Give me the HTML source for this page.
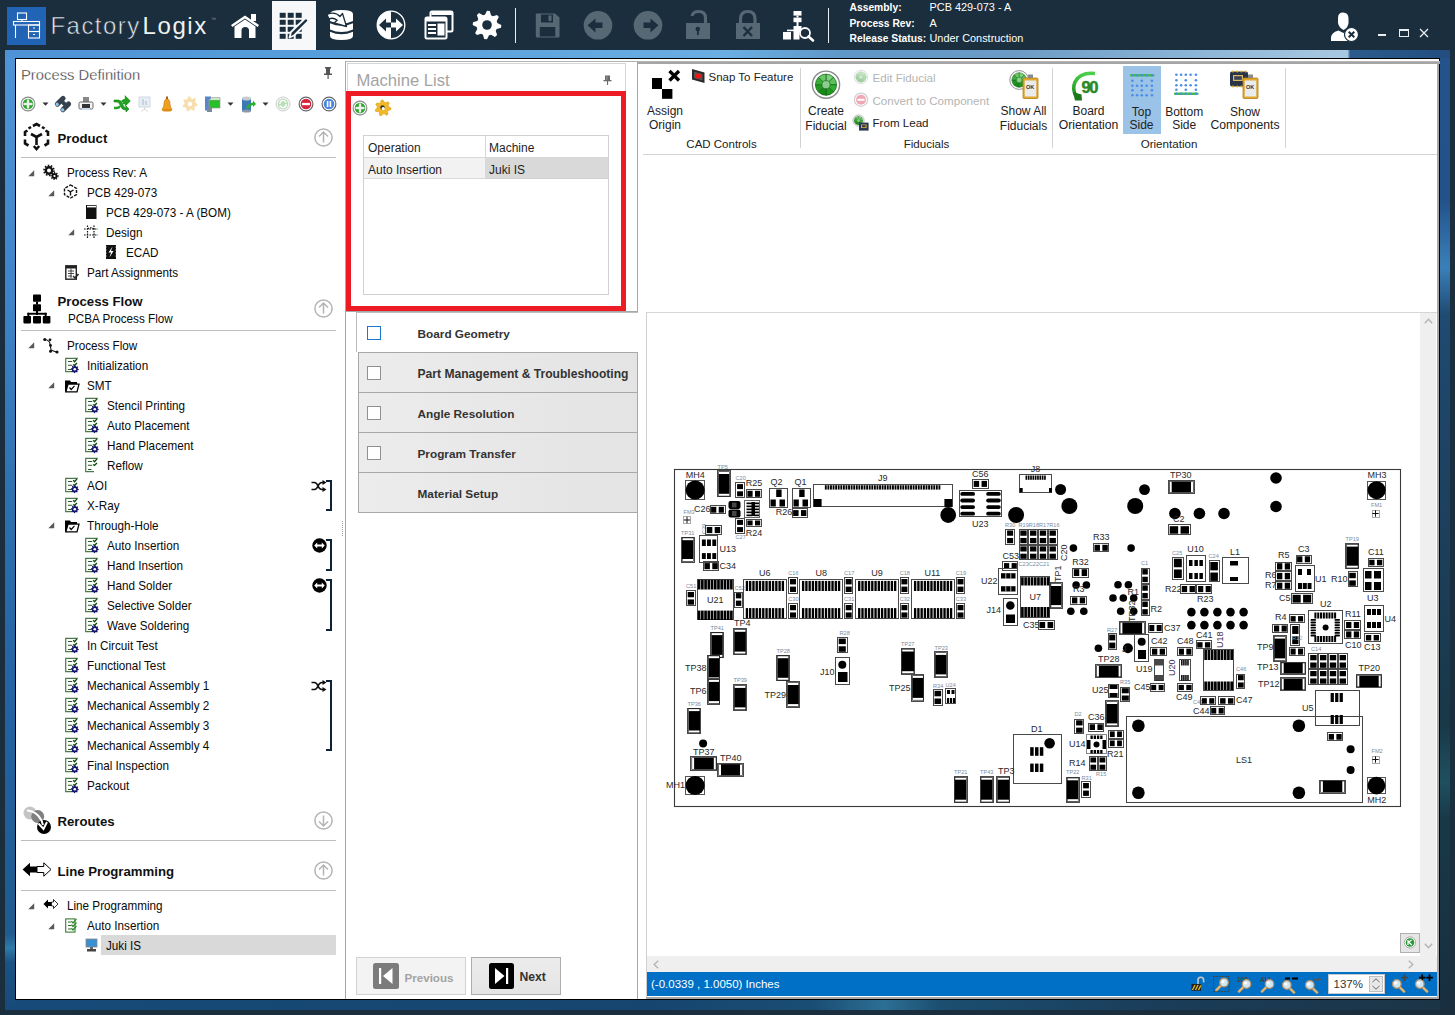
<!DOCTYPE html>
<html><head><meta charset="utf-8">
<style>
*{margin:0;padding:0;box-sizing:border-box}
html,body{width:1455px;height:1015px;overflow:hidden;background:#1b2e3d;font-family:"Liberation Sans",sans-serif;font-size:12px;color:#1e1e1e}
.a{position:absolute}
.t{position:absolute;white-space:nowrap;line-height:1}
svg{position:absolute;overflow:visible}
</style></head>
<body>
<div class="a" style="left:0px;top:0px;width:1455px;height:1015px;background:#1b2e3d"></div>
<div class="a" style="left:5px;top:50px;width:1445px;height:8px;background:linear-gradient(90deg,#4d92d6 0%,#58a0dc 25%,#6aaee2 50%,#5f97c8 58%,#6c9cc6 70%,#8ab4d6 82%,#a9c9e1 92.9%,#2b5b8e 93.1%,#224d7e 100%)"></div>
<div class="a" style="left:5px;top:58px;width:10px;height:952px;background:linear-gradient(180deg,#4f94d6 0%,#3f84c8 25%,#2c6dab 50%,#2262a0 70%,#1f5b8e 92%,#2e7aa8 93.5%,#1b5283 95%,#174a78 100%)"></div>
<div class="a" style="left:1440px;top:58px;width:10px;height:952px;background:linear-gradient(180deg,#24528a 0%,#23528a 15%,#3a80b8 22%,#1f4a72 27%,#1c3f5c 50%,#183848 70%,#1f5060 76%,#183848 80%,#172f40 100%)"></div>
<div class="a" style="left:15px;top:1000px;width:1425px;height:10px;background:linear-gradient(90deg,#174a78 0%,#16466f 45%,#1a4d74 56%,#2c6f94 61%,#1b4e70 65%,#1a3d5a 80%,#1c3446 100%)"></div>
<div class="a" style="left:0px;top:1010px;width:1455px;height:5px;background:#1b2e3d"></div>
<div class="a" style="left:15px;top:58px;width:1425px;height:942px;background:#fff;border:1px solid #000"></div>
<div class="a" style="left:7px;top:7px;width:39px;height:38px;background:#2163b4"></div>
<svg style="left:7px;top:7px" width="39" height="38" viewBox="0 0 39 38"><g fill="none" stroke="#fff" stroke-width="1.1">
<rect x="10.5" y="6" width="9" height="6.5"/>
<line x1="15" y1="12.5" x2="15" y2="14.5"/>
<rect x="6.5" y="14.5" width="26" height="3.5"/>
<line x1="8.5" y1="18" x2="8.5" y2="31"/>
<rect x="21.5" y="18" width="11" height="6.5"/>
<rect x="21.5" y="24.5" width="11" height="6.5"/>
<line x1="26" y1="21" x2="28" y2="21"/><line x1="26" y1="27.5" x2="28" y2="27.5"/>
</g></svg>
<div class="t" style="left:50.5px;top:14.48px;font-size:24px;font-weight:400;color:#e4eaee;letter-spacing:1.45px;-webkit-text-stroke:0.6px #1b2e3d">Factory</div>
<div class="t" style="left:142.5px;top:14.48px;font-size:24px;font-weight:400;color:#eef2f4;letter-spacing:1.6px">Logix</div>
<div class="t" style="left:211px;top:16.77px;font-size:5px;font-weight:400;color:#8898a8;">&#8482;</div>
<svg style="left:228px;top:12px" width="34" height="28" viewBox="0 0 34 28"><g fill="#fff">
<path d="M3 13 L17 3.5 L31 13 L29.6 15 L17 6.6 L4.4 15 Z"/>
<rect x="23" y="2" width="5" height="7"/>
<path d="M6.5 14.5 L17 7.6 L27.5 14.5 L27.5 26 L21 26 L21 18.5 Q21 15 17.3 15 Q13.5 15 13.5 18.5 L13.5 26 L6.5 26 Z"/>
</g></svg>
<div class="a" style="left:272px;top:1px;width:44px;height:49px;background:#f7f8fa"></div>
<svg style="left:272px;top:1px" width="44" height="49" viewBox="0 0 44 49"><g fill="#1b2e3d">
<rect x="7.7" y="11.8" width="6" height="5"/><rect x="15.7" y="11.8" width="6" height="5"/><rect x="23.7" y="11.8" width="6" height="5"/>
<rect x="7.7" y="18.8" width="6" height="5"/><rect x="15.7" y="18.8" width="6" height="5"/><rect x="23.7" y="18.8" width="6" height="5"/>
<rect x="7.7" y="25.8" width="6" height="5"/><rect x="15.7" y="25.8" width="6" height="5"/><rect x="23.7" y="25.8" width="6" height="5"/>
<rect x="7.7" y="32.8" width="6" height="5"/><rect x="15.7" y="32.8" width="6" height="5"/><rect x="23.7" y="32.8" width="6" height="5"/>
</g>
<path d="M17.5 36.5 L19 31 L32.5 18 Q34 16.6 35.5 18 Q36.9 19.5 35.5 21 L22 34.5 Z" fill="#1b2e3d" stroke="#f7f8fa" stroke-width="1.8" stroke-linejoin="round"/></svg>
<svg style="left:327px;top:9px" width="30" height="32" viewBox="0 0 30 32"><g fill="#fff">
<path d="M3 5 Q3 1 14.5 1 Q26 1 26 5 L26 12 Q14.5 17 3 12 Z"/>
<path d="M3 14.2 Q14.5 19.2 26 14.2 L26 20.5 Q14.5 25.5 3 20.5 Z"/>
<path d="M3 22.7 Q14.5 27.7 26 22.7 L26 27 Q26 31 14.5 31 Q3 31 3 27 Z"/>
</g>
<path d="M0 5.5 Q8 2 13 7.5 L15.5 4.5 L19.5 17.5 L7 14 L10.2 11.3 Q6 8 2 10 Z" fill="#fff" stroke="#1b2e3d" stroke-width="1.3" stroke-linejoin="round"/></svg>
<svg style="left:375px;top:9px" width="32" height="32" viewBox="0 0 32 32"><circle cx="16" cy="16" r="13.8" fill="none" stroke="#fff" stroke-width="1.3"/>
<path d="M16 2.2 A13.8 13.8 0 0 0 16 29.8 Z" fill="#fff"/>
<path d="M4 16 L11 9.5 L11 13.5 L16 13.5 L16 18.5 L11 18.5 L11 22.5 Z" fill="#1b2e3d"/>
<path d="M28 16 L21 9.5 L21 13.5 L16 13.5 L16 18.5 L21 18.5 L21 22.5 Z" fill="#fff"/></svg>
<svg style="left:423px;top:9px" width="32" height="32" viewBox="0 0 32 32"><g fill="none" stroke="#fff" stroke-width="2">
<rect x="7.5" y="2.5" width="22" height="20" rx="1.5"/>
</g>
<rect x="2" y="8" width="22" height="22" rx="1.5" fill="#1b2e3d"/>
<rect x="2.5" y="8.5" width="21" height="21" rx="1.5" fill="none" stroke="#fff" stroke-width="2"/>
<rect x="2.5" y="8.5" width="21" height="4" fill="#fff"/>
<rect x="8.5" y="3" width="21" height="3" fill="#fff"/>
<g fill="#fff"><rect x="5" y="15" width="8" height="2"/><rect x="5" y="19" width="8" height="2"/><rect x="5" y="23" width="8" height="2"/><rect x="14.5" y="14.5" width="7" height="12"/></g></svg>
<svg style="left:471px;top:9px" width="32" height="32" viewBox="0 0 32 32"><path d="M16.00 1.70 L18.79 1.97 L20.02 6.30 L21.83 7.27 L26.11 5.89 L27.89 8.06 L25.70 11.98 L26.30 13.95 L30.30 16.00 L30.03 18.79 L25.70 20.02 L24.73 21.83 L26.11 26.11 L23.94 27.89 L20.02 25.70 L18.05 26.30 L16.00 30.30 L13.21 30.03 L11.98 25.70 L10.17 24.73 L5.89 26.11 L4.11 23.94 L6.30 20.02 L5.70 18.05 L1.70 16.00 L1.97 13.21 L6.30 11.98 L7.27 10.17 L5.89 5.89 L8.06 4.11 L11.98 6.30 L13.95 5.70Z" fill="#fff"/><circle cx="16" cy="16" r="4.8" fill="#1b2e3d"/></svg>
<div class="a" style="left:515px;top:8px;width:1px;height:35px;background:#e8eef2"></div>
<div class="a" style="left:828px;top:8px;width:1px;height:35px;background:#e8eef2"></div>
<svg style="left:535px;top:13px" width="26" height="25" viewBox="0 0 26 25"><path d="M0.8 1.5 Q0.8 0.5 1.8 0.5 L20 0.5 L24.5 4.5 L24.5 23.5 Q24.5 24.5 23.5 24.5 L1.8 24.5 Q0.8 24.5 0.8 23.5 Z" fill="#566874"/>
<rect x="6" y="1.5" width="12" height="8" fill="#1b2e3d"/><rect x="13.5" y="2.5" width="3" height="5.5" fill="#566874"/>
<rect x="4.8" y="14" width="15.5" height="9.5" fill="#1b2e3d"/></svg>
<svg style="left:583px;top:11px" width="30" height="30" viewBox="0 0 30 30"><circle cx="15" cy="14.3" r="14.3" fill="#566874"/><path d="M4.5 14.3 L12.5 7.5 L12.5 11.5 L19.5 11.5 L19.5 17 L12.5 17 L12.5 21.5 Z" fill="#1b2e3d"/></svg>
<svg style="left:633px;top:11px" width="30" height="30" viewBox="0 0 30 30"><circle cx="15" cy="14.3" r="14.3" fill="#566874"/><path d="M25.5 14.3 L17.5 7.5 L17.5 11.5 L10.5 11.5 L10.5 17 L17.5 17 L17.5 21.5 Z" fill="#1b2e3d"/></svg>
<svg style="left:685px;top:10px" width="28" height="30" viewBox="0 0 28 30"><path d="M7 6 Q8 1.5 13.5 1.5 Q20.5 1.5 20.5 8 L20.5 13" fill="none" stroke="#566874" stroke-width="3.2"/>
<rect x="1" y="13" width="24" height="16" fill="#566874"/>
<circle cx="12.8" cy="19" r="2.3" fill="#1b2e3d"/><rect x="12" y="19" width="1.8" height="6" fill="#1b2e3d"/></svg>
<svg style="left:735px;top:10px" width="28" height="30" viewBox="0 0 28 30"><path d="M5.5 13 L5.5 9 Q5.5 1.5 12.8 1.5 Q20 1.5 20 9 L20 13" fill="none" stroke="#566874" stroke-width="3.2"/>
<rect x="1" y="13" width="24" height="16" fill="#566874"/>
<path d="M8.5 17 L17 26 M17 17 L8.5 26" stroke="#1b2e3d" stroke-width="2.4"/></svg>
<svg style="left:782px;top:10px" width="34" height="32" viewBox="0 0 34 32"><g fill="#fff">
<rect x="11.5" y="1" width="8" height="4.6"/><rect x="14.5" y="5.6" width="2" height="2"/><rect x="11.5" y="7.6" width="8" height="4.6"/>
<rect x="14.5" y="12" width="2" height="4"/><rect x="11.5" y="16" width="8" height="6"/>
<rect x="1" y="22" width="8" height="7.5"/><rect x="11.5" y="22" width="6" height="7.5"/>
<rect x="5" y="19.6" width="10" height="1.6"/>
</g>
<circle cx="23" cy="23" r="5" fill="#1b2e3d" stroke="#fff" stroke-width="1.8"/>
<path d="M26.5 26.5 L31 30.5" stroke="#fff" stroke-width="2.6" stroke-linecap="round"/></svg>
<div class="t" style="left:849.5px;top:2.78px;font-size:10.3px;font-weight:700;color:#fff;">Assembly:</div>
<div class="t" style="left:849.5px;top:18.58px;font-size:10.3px;font-weight:700;color:#fff;">Process Rev:</div>
<div class="t" style="left:849.5px;top:33.78px;font-size:10.3px;font-weight:700;color:#fff;">Release Status:</div>
<div class="t" style="left:929.5px;top:2.27px;font-size:10.9px;font-weight:400;color:#fff;">PCB 429-073 - A</div>
<div class="t" style="left:929.5px;top:18.07px;font-size:10.9px;font-weight:400;color:#fff;">A</div>
<div class="t" style="left:929.5px;top:33.27px;font-size:10.9px;font-weight:400;color:#fff;">Under Construction</div>
<svg style="left:1330px;top:12px" width="29" height="30" viewBox="0 0 29 30"><path d="M8 6 Q8 0.5 13 0.5 Q18.5 0.5 18.5 6.5 L18.5 11 Q18 16 13.5 18 Q9 16 8 11 Z" fill="#fff"/>
<path d="M1 29 L1 25 Q2 20 8.5 18.5 L13.5 21 L18 18.5 Q21 19 22 20 L22 29 Z" fill="#fff"/>
<circle cx="21.5" cy="22.5" r="7" fill="#fff" stroke="#1b2e3d" stroke-width="1.2"/>
<path d="M18.7 19.7 L24.3 25.3 M24.3 19.7 L18.7 25.3" stroke="#1b2e3d" stroke-width="2"/></svg>
<div class="a" style="left:1378px;top:34px;width:8px;height:2px;background:#e8eef2"></div>
<div class="a" style="left:1398.5px;top:29px;width:10px;height:7.5px;border:1px solid #e8eef2;border-top-width:2px"></div>
<svg style="left:1419px;top:28px" width="10" height="10" viewBox="0 0 10 10"><path d="M1 1 L9 9 M9 1 L1 9" stroke="#e8eef2" stroke-width="1.3"/></svg>
<div class="t" style="left:21px;top:67.67px;font-size:14.8px;font-weight:400;color:#2a2a2a;-webkit-text-stroke:0.35px #fff;">Process Definition</div>
<svg style="left:322px;top:66px" width="12" height="14" viewBox="0 0 12 14"><rect x="3" y="1" width="6" height="1.5" fill="#555"/><rect x="4" y="2" width="4" height="6" fill="#555"/><rect x="2" y="7.5" width="8" height="1.5" fill="#555"/><rect x="5.5" y="9" width="1.2" height="4" fill="#555"/></svg>
<svg style="left:20px;top:96px" width="16" height="16" viewBox="0 0 16 16"><circle cx="8" cy="8" r="6.9" fill="#fff" stroke="#888" stroke-width="1.1"/>
<circle cx="8" cy="8" r="5.3" fill="#2aa52a"/><rect x="3.5" y="6.8" width="9" height="2.4" fill="#eee"/><rect x="6.8" y="3.5" width="2.4" height="9" fill="#eee"/></svg>
<svg style="left:42px;top:102px" width="7" height="4" viewBox="0 0 7 4"><path d="M0.5 0.5 L6.5 0.5 L3.5 3.8Z" fill="#333"/></svg>
<svg style="left:55px;top:96px" width="16" height="16" viewBox="0 0 16 16"><g transform="rotate(45 8 8)"><rect x="1.6" y="1.5" width="5" height="13" rx="2.4" fill="#36434e"/><rect x="9.4" y="1.5" width="5" height="13" rx="2.4" fill="#36434e"/>
<rect x="6" y="5" width="4" height="4" fill="#36434e"/><ellipse cx="4.1" cy="12.3" rx="1.7" ry="1.6" fill="#8cc4ec"/><ellipse cx="11.9" cy="12.3" rx="1.7" ry="1.6" fill="#8cc4ec"/></g></svg>
<svg style="left:78px;top:96px" width="16" height="16" viewBox="0 0 16 16"><rect x="5" y="1" width="6" height="5" fill="#888"/><rect x="1" y="6" width="14" height="7" rx="1.5" fill="#f4f4f4" stroke="#555" stroke-width="0.9"/>
<rect x="4" y="8" width="8" height="4" fill="#333"/><rect x="4" y="12" width="8" height="2" fill="#cde"/></svg>
<svg style="left:100px;top:102px" width="7" height="4" viewBox="0 0 7 4"><path d="M0.5 0.5 L6.5 0.5 L3.5 3.8Z" fill="#333"/></svg>
<svg style="left:113px;top:96px" width="16" height="16" viewBox="0 0 16 16"><path d="M1 4 L5 4 Q8 4 9 7 L10 9 Q11 12 13 12 L13 10 L16 13 L13 16 L13 14 Q9 14 8 11 L7 9 Q6 6 4 6 L1 6Z" fill="#22a022" stroke="#148014" stroke-width="0.6"/>
<path d="M1 12 L4 12 Q6 12 7 10 M9 6 Q10 4 13 4 L13 2 L16 5 L13 8 L13 6 Q11 6 10 8" fill="none" stroke="#22a022" stroke-width="2.4"/></svg>
<svg style="left:138px;top:96px" width="13" height="16" viewBox="0 0 13 16"><rect x="1" y="1" width="11" height="10" fill="#e8eef5" stroke="#c8d0da" stroke-width="0.8"/><rect x="4" y="3" width="2" height="6" fill="#c8d3e0"/><rect x="7" y="5" width="2" height="4" fill="#c8d3e0"/><path d="M6.5 11 L6.5 14 M6.5 13 L3 15.5 M6.5 13 L10 15.5" stroke="#d0d0d0" stroke-width="0.8"/></svg>
<svg style="left:161px;top:96px" width="12" height="16" viewBox="0 0 12 16"><rect x="5" y="0.5" width="2" height="4" fill="#a06010"/><path d="M6 3 Q3 3 3 8 L2.5 11 Q1 12.5 1 13.5 L11 13.5 Q11 12.5 9.5 11 L9 8 Q9 3 6 3Z" fill="#f0a020" stroke="#c07010" stroke-width="0.6"/><ellipse cx="6" cy="14.2" rx="5" ry="1.3" fill="#e08a10"/></svg>
<svg style="left:182px;top:96px" width="16" height="16" viewBox="0 0 16 16"><path d="M15.60 8.00 L15.41 9.69 L13.05 10.43 L12.38 11.49 L12.74 13.94 L11.30 14.85 L9.25 13.46 L8.00 13.60 L6.31 15.41 L4.70 14.85 L4.51 12.38 L3.62 11.49 L1.15 11.30 L0.59 9.69 L2.40 8.00 L2.54 6.75 L1.15 4.70 L2.06 3.26 L4.51 3.62 L5.57 2.95 L6.31 0.59 L8.00 0.40 L9.25 2.54 L10.43 2.95 L12.74 2.06 L13.94 3.26 L13.05 5.57 L13.46 6.75Z" fill="#f6dfad"/><circle cx="8" cy="8" r="2.2" fill="#fff"/></svg>
<svg style="left:204px;top:96px" width="17" height="17" viewBox="0 0 17 17"><rect x="1" y="0.5" width="6" height="14" fill="#5a86c8"/><rect x="5" y="4" width="11" height="8" fill="#28c028" stroke="#999" stroke-width="0.7"/><path d="M5 4 L8 1.5 L16 1.5 L16 4" fill="#c8e8c8" stroke="#999" stroke-width="0.6"/><rect x="3" y="11" width="5" height="5" fill="#7a8a9a"/></svg>
<svg style="left:227px;top:102px" width="7" height="4" viewBox="0 0 7 4"><path d="M0.5 0.5 L6.5 0.5 L3.5 3.8Z" fill="#333"/></svg>
<svg style="left:240px;top:96px" width="16" height="17" viewBox="0 0 16 17"><rect x="2" y="2" width="9" height="13" fill="#3a78b8"/><ellipse cx="6.5" cy="2.5" rx="4.5" ry="2" fill="#c8ccd0"/><ellipse cx="6.5" cy="15" rx="4.5" ry="1.5" fill="#8a9aaa"/><path d="M6 12 Q8 7 13 6.5 L13 4.5 L16 8 L13 11 L13 9 Q10 9.5 8 13Z" fill="#28b030"/></svg>
<svg style="left:262px;top:102px" width="7" height="4" viewBox="0 0 7 4"><path d="M0.5 0.5 L6.5 0.5 L3.5 3.8Z" fill="#333"/></svg>
<svg style="left:275px;top:96px" width="16" height="16" viewBox="0 0 16 16"><circle cx="8" cy="8" r="7" fill="#f2f2f2" stroke="#d0d0d0" stroke-width="1"/><circle cx="8" cy="8" r="5.2" fill="#b8dfb8"/><path d="M5 8 A3 3 0 0 1 11 7 M11 8 A3 3 0 0 1 5 9" stroke="#fff" stroke-width="1.3" fill="none"/></svg>
<svg style="left:298px;top:96px" width="16" height="16" viewBox="0 0 16 16"><circle cx="8" cy="8" r="6.9" fill="#fff" stroke="#666" stroke-width="1.2"/><circle cx="8" cy="8" r="5.3" fill="#d8243c"/><rect x="4" y="6.9" width="8" height="2.3" fill="#fff"/></svg>
<svg style="left:321px;top:96px" width="16" height="16" viewBox="0 0 16 16"><circle cx="8" cy="8" r="6.9" fill="#fff" stroke="#666" stroke-width="1.2"/><circle cx="8" cy="8" r="5.3" fill="#4a86e0"/><rect x="5.8" y="5" width="1.6" height="6" fill="#fff"/><rect x="8.6" y="5" width="1.6" height="6" fill="#fff"/></svg>
<svg style="left:23px;top:122px" width="27" height="30" viewBox="0 0 27 30"><g fill="none" stroke="#111" stroke-width="2.6" stroke-linecap="butt">
<path d="M10 4 L13.5 2 L17 4"/><path d="M4.5 8.5 L2 10 L2 14"/><path d="M22.5 8.5 L25 10 L25 14"/>
<path d="M2 17.5 L2 21.5 L5.5 23.5"/><path d="M25 17.5 L25 21.5 L21.5 23.5"/>
<path d="M8 12 L13.5 15 L19 12"/><path d="M13.5 15 L13.5 23"/><path d="M10.8 24 L13.5 27 L16.2 24"/>
<path d="M5.5 6.5 L8 5"/><path d="M19 5 L21.5 6.5"/>
</g></svg>
<div class="t" style="left:57.5px;top:131.53px;font-size:13.2px;font-weight:700;color:#111;">Product</div>
<svg style="left:314px;top:127.5px" width="19" height="19" viewBox="0 0 19 19"><circle cx="9.5" cy="9.5" r="8.6" fill="none" stroke="#b4b4b4" stroke-width="1.5"/><path d="M5 8.5 L9.5 4 L14 8.5 M9.5 4 L9.5 14.5" fill="none" stroke="#b4b4b4" stroke-width="1.5"/></svg>
<div class="a" style="left:21px;top:157px;width:315px;height:1px;background:#bdbdbd"></div>
<svg style="left:28px;top:169.5px" width="7" height="7" viewBox="0 0 7 7"><path d="M6.2 0.3 L6.2 6.2 L0.3 6.2Z" fill="#595959"/></svg>
<svg style="left:43px;top:164px" width="16" height="16" viewBox="0 0 16 16"><circle cx="6" cy="6.5" r="3.2" fill="none" stroke="#111" stroke-width="2.4"/><circle cx="6" cy="6.5" r="5" fill="none" stroke="#111" stroke-width="1.6" stroke-dasharray="1.6 1.5"/>
<circle cx="11.5" cy="12" r="2" fill="none" stroke="#111" stroke-width="1.8"/><circle cx="11.5" cy="12" r="3.4" fill="none" stroke="#111" stroke-width="1.3" stroke-dasharray="1.3 1.2"/></svg>
<div class="t" style="left:66.5px;top:166.67px;font-size:12.2px;font-weight:400;color:#0a0a0a;transform:scaleX(0.96);transform-origin:0 0;">Process Rev: A</div>
<svg style="left:47.5px;top:189.5px" width="7" height="7" viewBox="0 0 7 7"><path d="M6.2 0.3 L6.2 6.2 L0.3 6.2Z" fill="#595959"/></svg>
<svg style="left:63px;top:184px" width="15" height="15" viewBox="0 0 15 15"><g fill="none" stroke="#111" stroke-width="1.4"><path d="M7.5 1 L13.5 4.3 L13.5 10.7 L7.5 14 L1.5 10.7 L1.5 4.3 Z" stroke-dasharray="3 1.3"/><path d="M4.5 6 L7.5 7.8 L10.5 6 M7.5 7.8 L7.5 11.5"/></g></svg>
<div class="t" style="left:86.5px;top:186.67px;font-size:12.2px;font-weight:400;color:#0a0a0a;transform:scaleX(0.96);transform-origin:0 0;">PCB 429-073</div>
<svg style="left:85px;top:204px" width="13" height="16" viewBox="0 0 13 16"><rect x="1" y="1" width="10.5" height="14" fill="#111"/><rect x="2" y="1.8" width="9" height="1.6" fill="#fff"/></svg>
<div class="t" style="left:106.3px;top:206.67px;font-size:12.2px;font-weight:400;color:#0a0a0a;transform:scaleX(0.96);transform-origin:0 0;">PCB 429-073 - A (BOM)</div>
<svg style="left:67.5px;top:229px" width="7" height="7" viewBox="0 0 7 7"><path d="M6.2 0.3 L6.2 6.2 L0.3 6.2Z" fill="#595959"/></svg>
<svg style="left:83px;top:224px" width="16" height="16" viewBox="0 0 16 16"><g stroke="#111" stroke-width="1.2" fill="none" stroke-dasharray="1.6 1.1"><path d="M1 5 L15 5 M1 11 L15 11 M4.5 1.5 L4.5 15 M11 1.5 L11 15"/><path d="M4.5 5 Q7.8 2.5 11 5"/></g></svg>
<div class="t" style="left:106.3px;top:226.67px;font-size:12.2px;font-weight:400;color:#0a0a0a;transform:scaleX(0.96);transform-origin:0 0;">Design</div>
<svg style="left:105px;top:244px" width="12" height="16" viewBox="0 0 12 16"><path d="M1 1 L11 1 L11 15 L1 15Z" fill="#111"/><path d="M0 3 L1.5 3 M0 6 L1.5 6 M0 9 L1.5 9 M0 12 L1.5 12 M10.5 3 L12 3 M10.5 6 L12 6 M10.5 9 L12 9 M10.5 12 L12 12" stroke="#fff" stroke-width="1"/><path d="M7.5 2.5 L3.5 8.5 L6 8.5 L4.5 13.5 L8.5 7 L6 7 Z" fill="#fff"/></svg>
<div class="t" style="left:126.3px;top:246.67px;font-size:12.2px;font-weight:400;color:#0a0a0a;transform:scaleX(0.96);transform-origin:0 0;">ECAD</div>
<svg style="left:65px;top:265px" width="14" height="15" viewBox="0 0 14 15"><rect x="0.8" y="0.8" width="10.5" height="13.4" fill="#fff" stroke="#222" stroke-width="1.4"/><rect x="1" y="1" width="10" height="2.5" fill="#222"/><path d="M3 6 L9 6 M3 8.5 L9 8.5 M3 11 L7 11 M6 3.5 L6 13" stroke="#333" stroke-width="0.9"/><path d="M8 11 L10 13 L13.5 9" fill="none" stroke="#222" stroke-width="1.5"/></svg>
<div class="t" style="left:86.5px;top:266.67px;font-size:12.2px;font-weight:400;color:#0a0a0a;transform:scaleX(0.96);transform-origin:0 0;">Part Assignments</div>
<svg style="left:23px;top:294px" width="28" height="30" viewBox="0 0 28 30"><g fill="#000"><rect x="10" y="0.4" width="8" height="7.4" rx="0.8"/><rect x="13" y="7.5" width="2" height="3"/><rect x="10" y="10.2" width="8" height="7" rx="0.8"/>
<rect x="13" y="17" width="2" height="4"/><rect x="4.4" y="18.8" width="19.2" height="1.9"/><rect x="4.4" y="18.8" width="1.9" height="4"/><rect x="21.7" y="18.8" width="1.9" height="4"/>
<rect x="0.4" y="22" width="7.6" height="7.4" rx="0.8"/><rect x="10" y="22" width="8" height="7.4" rx="0.8"/><rect x="19.8" y="22" width="7.6" height="7.4" rx="0.8"/></g></svg>
<div class="t" style="left:57.5px;top:294.83px;font-size:13.2px;font-weight:700;color:#111;">Process Flow</div>
<div class="t" style="left:67.5px;top:312.97px;font-size:12.2px;font-weight:400;color:#0a0a0a;transform:scaleX(0.96);transform-origin:0 0;">PCBA Process Flow</div>
<svg style="left:314px;top:299.0px" width="19" height="19" viewBox="0 0 19 19"><circle cx="9.5" cy="9.5" r="8.6" fill="none" stroke="#b4b4b4" stroke-width="1.5"/><path d="M5 8.5 L9.5 4 L14 8.5 M9.5 4 L9.5 14.5" fill="none" stroke="#b4b4b4" stroke-width="1.5"/></svg>
<div class="a" style="left:21px;top:330px;width:315px;height:1px;background:#bdbdbd"></div>
<svg style="left:28px;top:342.2px" width="7" height="7" viewBox="0 0 7 7"><path d="M6.2 0.3 L6.2 6.2 L0.3 6.2Z" fill="#595959"/></svg>
<svg style="left:43px;top:337.5px" width="16" height="16" viewBox="0 0 16 16"><path d="M1.5 1.5 Q4.5 1.5 6.5 4 L7.5 8.5 L8 12 Q10 13 13.5 14" fill="none" stroke="#111" stroke-width="1.1"/><g fill="#111"><circle cx="1.8" cy="1.5" r="1.6"/><circle cx="7" cy="1.8" r="1.4"/><circle cx="7.5" cy="7.5" r="1.4"/><circle cx="7.5" cy="13.3" r="1.5"/><circle cx="14" cy="14" r="1.6"/></g></svg>
<div class="t" style="left:66.5px;top:339.67px;font-size:12.2px;font-weight:400;color:#0a0a0a;transform:scaleX(0.96);transform-origin:0 0;">Process Flow</div>
<svg style="left:65px;top:358px" width="15" height="15" viewBox="0 0 15 15"><path d="M12.8 0.3 L0.7 0.3 L0.7 13.6 L9 13.6" fill="none" stroke="#4a7a4a" stroke-width="1.2"/>
<path d="M2.9 3.4 L7.2 3.4 M2.9 7.3 L7.2 7.3 M2.9 11.4 L6.5 11.4" stroke="#2a5a2a" stroke-width="1.05"/>
<path d="M8.2 2.3 L9.6 3.7 L12 0.9 M8.2 6.5 L9.4 7.4 L12 4.9" fill="none" stroke="#0a4a0a" stroke-width="1.4"/><path d="M13.80 11.20 L13.72 11.98 L12.57 12.35 L12.29 12.87 L12.63 14.03 L12.02 14.53 L10.95 13.97 L10.39 14.14 L9.80 15.20 L9.02 15.12 L8.65 13.97 L8.13 13.69 L6.97 14.03 L6.47 13.42 L7.03 12.35 L6.86 11.79 L5.80 11.20 L5.88 10.42 L7.03 10.05 L7.31 9.53 L6.97 8.37 L7.58 7.87 L8.65 8.43 L9.21 8.26 L9.80 7.20 L10.58 7.28 L10.95 8.43 L11.47 8.71 L12.63 8.37 L13.13 8.98 L12.57 10.05 L12.74 10.61Z" fill="#14146e"/><circle cx="9.8" cy="11.2" r="1.3" fill="#fff"/></svg>
<div class="t" style="left:86.5px;top:359.67px;font-size:12.2px;font-weight:400;color:#0a0a0a;transform:scaleX(0.96);transform-origin:0 0;">Initialization</div>
<svg style="left:48px;top:382.2px" width="7" height="7" viewBox="0 0 7 7"><path d="M6.2 0.3 L6.2 6.2 L0.3 6.2Z" fill="#595959"/></svg>
<svg style="left:64px;top:378.5px" width="16" height="14" viewBox="0 0 16 14"><path d="M1 1.5 L6 1.5 L7 3 L13 3 L13 5 L4 5 L2.5 12.5 L1 12.5 Z" fill="#000"/><path d="M4 5.2 L15 5.2 L13 12.8 L1.8 12.8 Z" fill="#fff" stroke="#000" stroke-width="1.3"/><path d="M5.5 8.5 L7.2 10.5 L10.5 6.8" fill="none" stroke="#000" stroke-width="1.2"/></svg>
<div class="t" style="left:86.5px;top:379.67px;font-size:12.2px;font-weight:400;color:#0a0a0a;transform:scaleX(0.96);transform-origin:0 0;">SMT</div>
<svg style="left:85px;top:398px" width="15" height="15" viewBox="0 0 15 15"><path d="M12.8 0.3 L0.7 0.3 L0.7 13.6 L9 13.6" fill="none" stroke="#4a7a4a" stroke-width="1.2"/>
<path d="M2.9 3.4 L7.2 3.4 M2.9 7.3 L7.2 7.3 M2.9 11.4 L6.5 11.4" stroke="#2a5a2a" stroke-width="1.05"/>
<path d="M8.2 2.3 L9.6 3.7 L12 0.9 M8.2 6.5 L9.4 7.4 L12 4.9" fill="none" stroke="#0a4a0a" stroke-width="1.4"/><path d="M13.80 11.20 L13.72 11.98 L12.57 12.35 L12.29 12.87 L12.63 14.03 L12.02 14.53 L10.95 13.97 L10.39 14.14 L9.80 15.20 L9.02 15.12 L8.65 13.97 L8.13 13.69 L6.97 14.03 L6.47 13.42 L7.03 12.35 L6.86 11.79 L5.80 11.20 L5.88 10.42 L7.03 10.05 L7.31 9.53 L6.97 8.37 L7.58 7.87 L8.65 8.43 L9.21 8.26 L9.80 7.20 L10.58 7.28 L10.95 8.43 L11.47 8.71 L12.63 8.37 L13.13 8.98 L12.57 10.05 L12.74 10.61Z" fill="#14146e"/><circle cx="9.8" cy="11.2" r="1.3" fill="#fff"/></svg>
<div class="t" style="left:106.5px;top:399.67px;font-size:12.2px;font-weight:400;color:#0a0a0a;transform:scaleX(0.96);transform-origin:0 0;">Stencil Printing</div>
<svg style="left:85px;top:418px" width="15" height="15" viewBox="0 0 15 15"><path d="M12.8 0.3 L0.7 0.3 L0.7 13.6 L9 13.6" fill="none" stroke="#4a7a4a" stroke-width="1.2"/>
<path d="M2.9 3.4 L7.2 3.4 M2.9 7.3 L7.2 7.3 M2.9 11.4 L6.5 11.4" stroke="#2a5a2a" stroke-width="1.05"/>
<path d="M8.2 2.3 L9.6 3.7 L12 0.9 M8.2 6.5 L9.4 7.4 L12 4.9" fill="none" stroke="#0a4a0a" stroke-width="1.4"/><path d="M13.80 11.20 L13.72 11.98 L12.57 12.35 L12.29 12.87 L12.63 14.03 L12.02 14.53 L10.95 13.97 L10.39 14.14 L9.80 15.20 L9.02 15.12 L8.65 13.97 L8.13 13.69 L6.97 14.03 L6.47 13.42 L7.03 12.35 L6.86 11.79 L5.80 11.20 L5.88 10.42 L7.03 10.05 L7.31 9.53 L6.97 8.37 L7.58 7.87 L8.65 8.43 L9.21 8.26 L9.80 7.20 L10.58 7.28 L10.95 8.43 L11.47 8.71 L12.63 8.37 L13.13 8.98 L12.57 10.05 L12.74 10.61Z" fill="#14146e"/><circle cx="9.8" cy="11.2" r="1.3" fill="#fff"/></svg>
<div class="t" style="left:106.5px;top:419.67px;font-size:12.2px;font-weight:400;color:#0a0a0a;transform:scaleX(0.96);transform-origin:0 0;">Auto Placement</div>
<svg style="left:85px;top:438px" width="15" height="15" viewBox="0 0 15 15"><path d="M12.8 0.3 L0.7 0.3 L0.7 13.6 L9 13.6" fill="none" stroke="#4a7a4a" stroke-width="1.2"/>
<path d="M2.9 3.4 L7.2 3.4 M2.9 7.3 L7.2 7.3 M2.9 11.4 L6.5 11.4" stroke="#2a5a2a" stroke-width="1.05"/>
<path d="M8.2 2.3 L9.6 3.7 L12 0.9 M8.2 6.5 L9.4 7.4 L12 4.9" fill="none" stroke="#0a4a0a" stroke-width="1.4"/><path d="M13.80 11.20 L13.72 11.98 L12.57 12.35 L12.29 12.87 L12.63 14.03 L12.02 14.53 L10.95 13.97 L10.39 14.14 L9.80 15.20 L9.02 15.12 L8.65 13.97 L8.13 13.69 L6.97 14.03 L6.47 13.42 L7.03 12.35 L6.86 11.79 L5.80 11.20 L5.88 10.42 L7.03 10.05 L7.31 9.53 L6.97 8.37 L7.58 7.87 L8.65 8.43 L9.21 8.26 L9.80 7.20 L10.58 7.28 L10.95 8.43 L11.47 8.71 L12.63 8.37 L13.13 8.98 L12.57 10.05 L12.74 10.61Z" fill="#14146e"/><circle cx="9.8" cy="11.2" r="1.3" fill="#fff"/></svg>
<div class="t" style="left:106.5px;top:439.67px;font-size:12.2px;font-weight:400;color:#0a0a0a;transform:scaleX(0.96);transform-origin:0 0;">Hand Placement</div>
<svg style="left:85px;top:458px" width="15" height="15" viewBox="0 0 15 15"><path d="M12.8 0.3 L0.7 0.3 L0.7 13.6 L9 13.6" fill="none" stroke="#4a7a4a" stroke-width="1.2"/>
<path d="M2.9 3.4 L7.2 3.4 M2.9 7.3 L7.2 7.3 M2.9 11.4 L6.5 11.4" stroke="#2a5a2a" stroke-width="1.05"/>
<path d="M8.2 2.3 L9.6 3.7 L12 0.9 M8.2 6.5 L9.4 7.4 L12 4.9" fill="none" stroke="#0a4a0a" stroke-width="1.4"/></svg>
<div class="t" style="left:106.5px;top:459.67px;font-size:12.2px;font-weight:400;color:#0a0a0a;transform:scaleX(0.96);transform-origin:0 0;">Reflow</div>
<svg style="left:65px;top:478px" width="15" height="15" viewBox="0 0 15 15"><path d="M12.8 0.3 L0.7 0.3 L0.7 13.6 L9 13.6" fill="none" stroke="#4a7a4a" stroke-width="1.2"/>
<path d="M2.9 3.4 L7.2 3.4 M2.9 7.3 L7.2 7.3 M2.9 11.4 L6.5 11.4" stroke="#2a5a2a" stroke-width="1.05"/>
<path d="M8.2 2.3 L9.6 3.7 L12 0.9 M8.2 6.5 L9.4 7.4 L12 4.9" fill="none" stroke="#0a4a0a" stroke-width="1.4"/><path d="M13.80 11.20 L13.72 11.98 L12.57 12.35 L12.29 12.87 L12.63 14.03 L12.02 14.53 L10.95 13.97 L10.39 14.14 L9.80 15.20 L9.02 15.12 L8.65 13.97 L8.13 13.69 L6.97 14.03 L6.47 13.42 L7.03 12.35 L6.86 11.79 L5.80 11.20 L5.88 10.42 L7.03 10.05 L7.31 9.53 L6.97 8.37 L7.58 7.87 L8.65 8.43 L9.21 8.26 L9.80 7.20 L10.58 7.28 L10.95 8.43 L11.47 8.71 L12.63 8.37 L13.13 8.98 L12.57 10.05 L12.74 10.61Z" fill="#14146e"/><circle cx="9.8" cy="11.2" r="1.3" fill="#fff"/></svg>
<div class="t" style="left:86.5px;top:479.67px;font-size:12.2px;font-weight:400;color:#0a0a0a;transform:scaleX(0.96);transform-origin:0 0;">AOI</div>
<svg style="left:65px;top:498px" width="15" height="15" viewBox="0 0 15 15"><path d="M12.8 0.3 L0.7 0.3 L0.7 13.6 L9 13.6" fill="none" stroke="#4a7a4a" stroke-width="1.2"/>
<path d="M2.9 3.4 L7.2 3.4 M2.9 7.3 L7.2 7.3 M2.9 11.4 L6.5 11.4" stroke="#2a5a2a" stroke-width="1.05"/>
<path d="M8.2 2.3 L9.6 3.7 L12 0.9 M8.2 6.5 L9.4 7.4 L12 4.9" fill="none" stroke="#0a4a0a" stroke-width="1.4"/><path d="M13.80 11.20 L13.72 11.98 L12.57 12.35 L12.29 12.87 L12.63 14.03 L12.02 14.53 L10.95 13.97 L10.39 14.14 L9.80 15.20 L9.02 15.12 L8.65 13.97 L8.13 13.69 L6.97 14.03 L6.47 13.42 L7.03 12.35 L6.86 11.79 L5.80 11.20 L5.88 10.42 L7.03 10.05 L7.31 9.53 L6.97 8.37 L7.58 7.87 L8.65 8.43 L9.21 8.26 L9.80 7.20 L10.58 7.28 L10.95 8.43 L11.47 8.71 L12.63 8.37 L13.13 8.98 L12.57 10.05 L12.74 10.61Z" fill="#14146e"/><circle cx="9.8" cy="11.2" r="1.3" fill="#fff"/></svg>
<div class="t" style="left:86.5px;top:499.67px;font-size:12.2px;font-weight:400;color:#0a0a0a;transform:scaleX(0.96);transform-origin:0 0;">X-Ray</div>
<svg style="left:48px;top:522.2px" width="7" height="7" viewBox="0 0 7 7"><path d="M6.2 0.3 L6.2 6.2 L0.3 6.2Z" fill="#595959"/></svg>
<svg style="left:64px;top:518.5px" width="16" height="14" viewBox="0 0 16 14"><path d="M1 1.5 L6 1.5 L7 3 L13 3 L13 5 L4 5 L2.5 12.5 L1 12.5 Z" fill="#000"/><path d="M4 5.2 L15 5.2 L13 12.8 L1.8 12.8 Z" fill="#fff" stroke="#000" stroke-width="1.3"/><path d="M5.5 8.5 L7.2 10.5 L10.5 6.8" fill="none" stroke="#000" stroke-width="1.2"/></svg>
<div class="t" style="left:86.5px;top:519.67px;font-size:12.2px;font-weight:400;color:#0a0a0a;transform:scaleX(0.96);transform-origin:0 0;">Through-Hole</div>
<svg style="left:85px;top:538px" width="15" height="15" viewBox="0 0 15 15"><path d="M12.8 0.3 L0.7 0.3 L0.7 13.6 L9 13.6" fill="none" stroke="#4a7a4a" stroke-width="1.2"/>
<path d="M2.9 3.4 L7.2 3.4 M2.9 7.3 L7.2 7.3 M2.9 11.4 L6.5 11.4" stroke="#2a5a2a" stroke-width="1.05"/>
<path d="M8.2 2.3 L9.6 3.7 L12 0.9 M8.2 6.5 L9.4 7.4 L12 4.9" fill="none" stroke="#0a4a0a" stroke-width="1.4"/><path d="M13.80 11.20 L13.72 11.98 L12.57 12.35 L12.29 12.87 L12.63 14.03 L12.02 14.53 L10.95 13.97 L10.39 14.14 L9.80 15.20 L9.02 15.12 L8.65 13.97 L8.13 13.69 L6.97 14.03 L6.47 13.42 L7.03 12.35 L6.86 11.79 L5.80 11.20 L5.88 10.42 L7.03 10.05 L7.31 9.53 L6.97 8.37 L7.58 7.87 L8.65 8.43 L9.21 8.26 L9.80 7.20 L10.58 7.28 L10.95 8.43 L11.47 8.71 L12.63 8.37 L13.13 8.98 L12.57 10.05 L12.74 10.61Z" fill="#14146e"/><circle cx="9.8" cy="11.2" r="1.3" fill="#fff"/></svg>
<div class="t" style="left:106.5px;top:539.67px;font-size:12.2px;font-weight:400;color:#0a0a0a;transform:scaleX(0.96);transform-origin:0 0;">Auto Insertion</div>
<svg style="left:85px;top:558px" width="15" height="15" viewBox="0 0 15 15"><path d="M12.8 0.3 L0.7 0.3 L0.7 13.6 L9 13.6" fill="none" stroke="#4a7a4a" stroke-width="1.2"/>
<path d="M2.9 3.4 L7.2 3.4 M2.9 7.3 L7.2 7.3 M2.9 11.4 L6.5 11.4" stroke="#2a5a2a" stroke-width="1.05"/>
<path d="M8.2 2.3 L9.6 3.7 L12 0.9 M8.2 6.5 L9.4 7.4 L12 4.9" fill="none" stroke="#0a4a0a" stroke-width="1.4"/><path d="M13.80 11.20 L13.72 11.98 L12.57 12.35 L12.29 12.87 L12.63 14.03 L12.02 14.53 L10.95 13.97 L10.39 14.14 L9.80 15.20 L9.02 15.12 L8.65 13.97 L8.13 13.69 L6.97 14.03 L6.47 13.42 L7.03 12.35 L6.86 11.79 L5.80 11.20 L5.88 10.42 L7.03 10.05 L7.31 9.53 L6.97 8.37 L7.58 7.87 L8.65 8.43 L9.21 8.26 L9.80 7.20 L10.58 7.28 L10.95 8.43 L11.47 8.71 L12.63 8.37 L13.13 8.98 L12.57 10.05 L12.74 10.61Z" fill="#14146e"/><circle cx="9.8" cy="11.2" r="1.3" fill="#fff"/></svg>
<div class="t" style="left:106.5px;top:559.67px;font-size:12.2px;font-weight:400;color:#0a0a0a;transform:scaleX(0.96);transform-origin:0 0;">Hand Insertion</div>
<svg style="left:85px;top:578px" width="15" height="15" viewBox="0 0 15 15"><path d="M12.8 0.3 L0.7 0.3 L0.7 13.6 L9 13.6" fill="none" stroke="#4a7a4a" stroke-width="1.2"/>
<path d="M2.9 3.4 L7.2 3.4 M2.9 7.3 L7.2 7.3 M2.9 11.4 L6.5 11.4" stroke="#2a5a2a" stroke-width="1.05"/>
<path d="M8.2 2.3 L9.6 3.7 L12 0.9 M8.2 6.5 L9.4 7.4 L12 4.9" fill="none" stroke="#0a4a0a" stroke-width="1.4"/><path d="M13.80 11.20 L13.72 11.98 L12.57 12.35 L12.29 12.87 L12.63 14.03 L12.02 14.53 L10.95 13.97 L10.39 14.14 L9.80 15.20 L9.02 15.12 L8.65 13.97 L8.13 13.69 L6.97 14.03 L6.47 13.42 L7.03 12.35 L6.86 11.79 L5.80 11.20 L5.88 10.42 L7.03 10.05 L7.31 9.53 L6.97 8.37 L7.58 7.87 L8.65 8.43 L9.21 8.26 L9.80 7.20 L10.58 7.28 L10.95 8.43 L11.47 8.71 L12.63 8.37 L13.13 8.98 L12.57 10.05 L12.74 10.61Z" fill="#14146e"/><circle cx="9.8" cy="11.2" r="1.3" fill="#fff"/></svg>
<div class="t" style="left:106.5px;top:579.67px;font-size:12.2px;font-weight:400;color:#0a0a0a;transform:scaleX(0.96);transform-origin:0 0;">Hand Solder</div>
<svg style="left:85px;top:598px" width="15" height="15" viewBox="0 0 15 15"><path d="M12.8 0.3 L0.7 0.3 L0.7 13.6 L9 13.6" fill="none" stroke="#4a7a4a" stroke-width="1.2"/>
<path d="M2.9 3.4 L7.2 3.4 M2.9 7.3 L7.2 7.3 M2.9 11.4 L6.5 11.4" stroke="#2a5a2a" stroke-width="1.05"/>
<path d="M8.2 2.3 L9.6 3.7 L12 0.9 M8.2 6.5 L9.4 7.4 L12 4.9" fill="none" stroke="#0a4a0a" stroke-width="1.4"/><path d="M13.80 11.20 L13.72 11.98 L12.57 12.35 L12.29 12.87 L12.63 14.03 L12.02 14.53 L10.95 13.97 L10.39 14.14 L9.80 15.20 L9.02 15.12 L8.65 13.97 L8.13 13.69 L6.97 14.03 L6.47 13.42 L7.03 12.35 L6.86 11.79 L5.80 11.20 L5.88 10.42 L7.03 10.05 L7.31 9.53 L6.97 8.37 L7.58 7.87 L8.65 8.43 L9.21 8.26 L9.80 7.20 L10.58 7.28 L10.95 8.43 L11.47 8.71 L12.63 8.37 L13.13 8.98 L12.57 10.05 L12.74 10.61Z" fill="#14146e"/><circle cx="9.8" cy="11.2" r="1.3" fill="#fff"/></svg>
<div class="t" style="left:106.5px;top:599.67px;font-size:12.2px;font-weight:400;color:#0a0a0a;transform:scaleX(0.96);transform-origin:0 0;">Selective Solder</div>
<svg style="left:85px;top:618px" width="15" height="15" viewBox="0 0 15 15"><path d="M12.8 0.3 L0.7 0.3 L0.7 13.6 L9 13.6" fill="none" stroke="#4a7a4a" stroke-width="1.2"/>
<path d="M2.9 3.4 L7.2 3.4 M2.9 7.3 L7.2 7.3 M2.9 11.4 L6.5 11.4" stroke="#2a5a2a" stroke-width="1.05"/>
<path d="M8.2 2.3 L9.6 3.7 L12 0.9 M8.2 6.5 L9.4 7.4 L12 4.9" fill="none" stroke="#0a4a0a" stroke-width="1.4"/><path d="M13.80 11.20 L13.72 11.98 L12.57 12.35 L12.29 12.87 L12.63 14.03 L12.02 14.53 L10.95 13.97 L10.39 14.14 L9.80 15.20 L9.02 15.12 L8.65 13.97 L8.13 13.69 L6.97 14.03 L6.47 13.42 L7.03 12.35 L6.86 11.79 L5.80 11.20 L5.88 10.42 L7.03 10.05 L7.31 9.53 L6.97 8.37 L7.58 7.87 L8.65 8.43 L9.21 8.26 L9.80 7.20 L10.58 7.28 L10.95 8.43 L11.47 8.71 L12.63 8.37 L13.13 8.98 L12.57 10.05 L12.74 10.61Z" fill="#14146e"/><circle cx="9.8" cy="11.2" r="1.3" fill="#fff"/></svg>
<div class="t" style="left:106.5px;top:619.67px;font-size:12.2px;font-weight:400;color:#0a0a0a;transform:scaleX(0.96);transform-origin:0 0;">Wave Soldering</div>
<svg style="left:65px;top:638px" width="15" height="15" viewBox="0 0 15 15"><path d="M12.8 0.3 L0.7 0.3 L0.7 13.6 L9 13.6" fill="none" stroke="#4a7a4a" stroke-width="1.2"/>
<path d="M2.9 3.4 L7.2 3.4 M2.9 7.3 L7.2 7.3 M2.9 11.4 L6.5 11.4" stroke="#2a5a2a" stroke-width="1.05"/>
<path d="M8.2 2.3 L9.6 3.7 L12 0.9 M8.2 6.5 L9.4 7.4 L12 4.9" fill="none" stroke="#0a4a0a" stroke-width="1.4"/><path d="M13.80 11.20 L13.72 11.98 L12.57 12.35 L12.29 12.87 L12.63 14.03 L12.02 14.53 L10.95 13.97 L10.39 14.14 L9.80 15.20 L9.02 15.12 L8.65 13.97 L8.13 13.69 L6.97 14.03 L6.47 13.42 L7.03 12.35 L6.86 11.79 L5.80 11.20 L5.88 10.42 L7.03 10.05 L7.31 9.53 L6.97 8.37 L7.58 7.87 L8.65 8.43 L9.21 8.26 L9.80 7.20 L10.58 7.28 L10.95 8.43 L11.47 8.71 L12.63 8.37 L13.13 8.98 L12.57 10.05 L12.74 10.61Z" fill="#14146e"/><circle cx="9.8" cy="11.2" r="1.3" fill="#fff"/></svg>
<div class="t" style="left:86.5px;top:639.67px;font-size:12.2px;font-weight:400;color:#0a0a0a;transform:scaleX(0.96);transform-origin:0 0;">In Circuit Test</div>
<svg style="left:65px;top:658px" width="15" height="15" viewBox="0 0 15 15"><path d="M12.8 0.3 L0.7 0.3 L0.7 13.6 L9 13.6" fill="none" stroke="#4a7a4a" stroke-width="1.2"/>
<path d="M2.9 3.4 L7.2 3.4 M2.9 7.3 L7.2 7.3 M2.9 11.4 L6.5 11.4" stroke="#2a5a2a" stroke-width="1.05"/>
<path d="M8.2 2.3 L9.6 3.7 L12 0.9 M8.2 6.5 L9.4 7.4 L12 4.9" fill="none" stroke="#0a4a0a" stroke-width="1.4"/><path d="M13.80 11.20 L13.72 11.98 L12.57 12.35 L12.29 12.87 L12.63 14.03 L12.02 14.53 L10.95 13.97 L10.39 14.14 L9.80 15.20 L9.02 15.12 L8.65 13.97 L8.13 13.69 L6.97 14.03 L6.47 13.42 L7.03 12.35 L6.86 11.79 L5.80 11.20 L5.88 10.42 L7.03 10.05 L7.31 9.53 L6.97 8.37 L7.58 7.87 L8.65 8.43 L9.21 8.26 L9.80 7.20 L10.58 7.28 L10.95 8.43 L11.47 8.71 L12.63 8.37 L13.13 8.98 L12.57 10.05 L12.74 10.61Z" fill="#14146e"/><circle cx="9.8" cy="11.2" r="1.3" fill="#fff"/></svg>
<div class="t" style="left:86.5px;top:659.67px;font-size:12.2px;font-weight:400;color:#0a0a0a;transform:scaleX(0.96);transform-origin:0 0;">Functional Test</div>
<svg style="left:65px;top:678px" width="15" height="15" viewBox="0 0 15 15"><path d="M12.8 0.3 L0.7 0.3 L0.7 13.6 L9 13.6" fill="none" stroke="#4a7a4a" stroke-width="1.2"/>
<path d="M2.9 3.4 L7.2 3.4 M2.9 7.3 L7.2 7.3 M2.9 11.4 L6.5 11.4" stroke="#2a5a2a" stroke-width="1.05"/>
<path d="M8.2 2.3 L9.6 3.7 L12 0.9 M8.2 6.5 L9.4 7.4 L12 4.9" fill="none" stroke="#0a4a0a" stroke-width="1.4"/><path d="M13.80 11.20 L13.72 11.98 L12.57 12.35 L12.29 12.87 L12.63 14.03 L12.02 14.53 L10.95 13.97 L10.39 14.14 L9.80 15.20 L9.02 15.12 L8.65 13.97 L8.13 13.69 L6.97 14.03 L6.47 13.42 L7.03 12.35 L6.86 11.79 L5.80 11.20 L5.88 10.42 L7.03 10.05 L7.31 9.53 L6.97 8.37 L7.58 7.87 L8.65 8.43 L9.21 8.26 L9.80 7.20 L10.58 7.28 L10.95 8.43 L11.47 8.71 L12.63 8.37 L13.13 8.98 L12.57 10.05 L12.74 10.61Z" fill="#14146e"/><circle cx="9.8" cy="11.2" r="1.3" fill="#fff"/></svg>
<div class="t" style="left:86.5px;top:679.67px;font-size:12.2px;font-weight:400;color:#0a0a0a;transform:scaleX(0.96);transform-origin:0 0;">Mechanical Assembly 1</div>
<svg style="left:65px;top:698px" width="15" height="15" viewBox="0 0 15 15"><path d="M12.8 0.3 L0.7 0.3 L0.7 13.6 L9 13.6" fill="none" stroke="#4a7a4a" stroke-width="1.2"/>
<path d="M2.9 3.4 L7.2 3.4 M2.9 7.3 L7.2 7.3 M2.9 11.4 L6.5 11.4" stroke="#2a5a2a" stroke-width="1.05"/>
<path d="M8.2 2.3 L9.6 3.7 L12 0.9 M8.2 6.5 L9.4 7.4 L12 4.9" fill="none" stroke="#0a4a0a" stroke-width="1.4"/><path d="M13.80 11.20 L13.72 11.98 L12.57 12.35 L12.29 12.87 L12.63 14.03 L12.02 14.53 L10.95 13.97 L10.39 14.14 L9.80 15.20 L9.02 15.12 L8.65 13.97 L8.13 13.69 L6.97 14.03 L6.47 13.42 L7.03 12.35 L6.86 11.79 L5.80 11.20 L5.88 10.42 L7.03 10.05 L7.31 9.53 L6.97 8.37 L7.58 7.87 L8.65 8.43 L9.21 8.26 L9.80 7.20 L10.58 7.28 L10.95 8.43 L11.47 8.71 L12.63 8.37 L13.13 8.98 L12.57 10.05 L12.74 10.61Z" fill="#14146e"/><circle cx="9.8" cy="11.2" r="1.3" fill="#fff"/></svg>
<div class="t" style="left:86.5px;top:699.67px;font-size:12.2px;font-weight:400;color:#0a0a0a;transform:scaleX(0.96);transform-origin:0 0;">Mechanical Assembly 2</div>
<svg style="left:65px;top:718px" width="15" height="15" viewBox="0 0 15 15"><path d="M12.8 0.3 L0.7 0.3 L0.7 13.6 L9 13.6" fill="none" stroke="#4a7a4a" stroke-width="1.2"/>
<path d="M2.9 3.4 L7.2 3.4 M2.9 7.3 L7.2 7.3 M2.9 11.4 L6.5 11.4" stroke="#2a5a2a" stroke-width="1.05"/>
<path d="M8.2 2.3 L9.6 3.7 L12 0.9 M8.2 6.5 L9.4 7.4 L12 4.9" fill="none" stroke="#0a4a0a" stroke-width="1.4"/><path d="M13.80 11.20 L13.72 11.98 L12.57 12.35 L12.29 12.87 L12.63 14.03 L12.02 14.53 L10.95 13.97 L10.39 14.14 L9.80 15.20 L9.02 15.12 L8.65 13.97 L8.13 13.69 L6.97 14.03 L6.47 13.42 L7.03 12.35 L6.86 11.79 L5.80 11.20 L5.88 10.42 L7.03 10.05 L7.31 9.53 L6.97 8.37 L7.58 7.87 L8.65 8.43 L9.21 8.26 L9.80 7.20 L10.58 7.28 L10.95 8.43 L11.47 8.71 L12.63 8.37 L13.13 8.98 L12.57 10.05 L12.74 10.61Z" fill="#14146e"/><circle cx="9.8" cy="11.2" r="1.3" fill="#fff"/></svg>
<div class="t" style="left:86.5px;top:719.67px;font-size:12.2px;font-weight:400;color:#0a0a0a;transform:scaleX(0.96);transform-origin:0 0;">Mechanical Assembly 3</div>
<svg style="left:65px;top:738px" width="15" height="15" viewBox="0 0 15 15"><path d="M12.8 0.3 L0.7 0.3 L0.7 13.6 L9 13.6" fill="none" stroke="#4a7a4a" stroke-width="1.2"/>
<path d="M2.9 3.4 L7.2 3.4 M2.9 7.3 L7.2 7.3 M2.9 11.4 L6.5 11.4" stroke="#2a5a2a" stroke-width="1.05"/>
<path d="M8.2 2.3 L9.6 3.7 L12 0.9 M8.2 6.5 L9.4 7.4 L12 4.9" fill="none" stroke="#0a4a0a" stroke-width="1.4"/><path d="M13.80 11.20 L13.72 11.98 L12.57 12.35 L12.29 12.87 L12.63 14.03 L12.02 14.53 L10.95 13.97 L10.39 14.14 L9.80 15.20 L9.02 15.12 L8.65 13.97 L8.13 13.69 L6.97 14.03 L6.47 13.42 L7.03 12.35 L6.86 11.79 L5.80 11.20 L5.88 10.42 L7.03 10.05 L7.31 9.53 L6.97 8.37 L7.58 7.87 L8.65 8.43 L9.21 8.26 L9.80 7.20 L10.58 7.28 L10.95 8.43 L11.47 8.71 L12.63 8.37 L13.13 8.98 L12.57 10.05 L12.74 10.61Z" fill="#14146e"/><circle cx="9.8" cy="11.2" r="1.3" fill="#fff"/></svg>
<div class="t" style="left:86.5px;top:739.67px;font-size:12.2px;font-weight:400;color:#0a0a0a;transform:scaleX(0.96);transform-origin:0 0;">Mechanical Assembly 4</div>
<svg style="left:65px;top:758px" width="15" height="15" viewBox="0 0 15 15"><path d="M12.8 0.3 L0.7 0.3 L0.7 13.6 L9 13.6" fill="none" stroke="#4a7a4a" stroke-width="1.2"/>
<path d="M2.9 3.4 L7.2 3.4 M2.9 7.3 L7.2 7.3 M2.9 11.4 L6.5 11.4" stroke="#2a5a2a" stroke-width="1.05"/>
<path d="M8.2 2.3 L9.6 3.7 L12 0.9 M8.2 6.5 L9.4 7.4 L12 4.9" fill="none" stroke="#0a4a0a" stroke-width="1.4"/><path d="M13.80 11.20 L13.72 11.98 L12.57 12.35 L12.29 12.87 L12.63 14.03 L12.02 14.53 L10.95 13.97 L10.39 14.14 L9.80 15.20 L9.02 15.12 L8.65 13.97 L8.13 13.69 L6.97 14.03 L6.47 13.42 L7.03 12.35 L6.86 11.79 L5.80 11.20 L5.88 10.42 L7.03 10.05 L7.31 9.53 L6.97 8.37 L7.58 7.87 L8.65 8.43 L9.21 8.26 L9.80 7.20 L10.58 7.28 L10.95 8.43 L11.47 8.71 L12.63 8.37 L13.13 8.98 L12.57 10.05 L12.74 10.61Z" fill="#14146e"/><circle cx="9.8" cy="11.2" r="1.3" fill="#fff"/></svg>
<div class="t" style="left:86.5px;top:759.67px;font-size:12.2px;font-weight:400;color:#0a0a0a;transform:scaleX(0.96);transform-origin:0 0;">Final Inspection</div>
<svg style="left:65px;top:778px" width="15" height="15" viewBox="0 0 15 15"><path d="M12.8 0.3 L0.7 0.3 L0.7 13.6 L9 13.6" fill="none" stroke="#4a7a4a" stroke-width="1.2"/>
<path d="M2.9 3.4 L7.2 3.4 M2.9 7.3 L7.2 7.3 M2.9 11.4 L6.5 11.4" stroke="#2a5a2a" stroke-width="1.05"/>
<path d="M8.2 2.3 L9.6 3.7 L12 0.9 M8.2 6.5 L9.4 7.4 L12 4.9" fill="none" stroke="#0a4a0a" stroke-width="1.4"/><path d="M13.80 11.20 L13.72 11.98 L12.57 12.35 L12.29 12.87 L12.63 14.03 L12.02 14.53 L10.95 13.97 L10.39 14.14 L9.80 15.20 L9.02 15.12 L8.65 13.97 L8.13 13.69 L6.97 14.03 L6.47 13.42 L7.03 12.35 L6.86 11.79 L5.80 11.20 L5.88 10.42 L7.03 10.05 L7.31 9.53 L6.97 8.37 L7.58 7.87 L8.65 8.43 L9.21 8.26 L9.80 7.20 L10.58 7.28 L10.95 8.43 L11.47 8.71 L12.63 8.37 L13.13 8.98 L12.57 10.05 L12.74 10.61Z" fill="#14146e"/><circle cx="9.8" cy="11.2" r="1.3" fill="#fff"/></svg>
<div class="t" style="left:86.5px;top:779.67px;font-size:12.2px;font-weight:400;color:#0a0a0a;transform:scaleX(0.96);transform-origin:0 0;">Packout</div>
<svg style="left:311px;top:479.5px" width="16" height="12" viewBox="0 0 16 12"><path d="M0.5 2.5 L3.5 2.5 Q5.5 2.5 7 6 Q8.5 9.5 11 9.5 L13 9.5 M0.5 9.5 L3.5 9.5 Q5.5 9.5 7 6 Q8.5 2.5 11 2.5 L13 2.5" fill="none" stroke="#111" stroke-width="1.6"/><path d="M11.5 0 L15.5 2.5 L11.5 5Z M11.5 7 L15.5 9.5 L11.5 12Z" fill="#111"/></svg>
<div class="a" style="left:330px;top:480px;width:2px;height:31px;background:#0d2236"></div>
<div class="a" style="left:326px;top:480px;width:5px;height:2px;background:#0d2236"></div>
<div class="a" style="left:326px;top:509px;width:5px;height:2px;background:#0d2236"></div>
<svg style="left:311.5px;top:537.5px" width="15" height="15" viewBox="0 0 15 15"><circle cx="7.5" cy="7.5" r="7.2" fill="#000"/><path d="M2.2 7.5 L5.2 4.6 L5.2 6.4 L9.8 6.4 L9.8 4.6 L12.8 7.5 L9.8 10.4 L9.8 8.6 L5.2 8.6 L5.2 10.4Z" fill="#fff"/></svg>
<div class="a" style="left:330px;top:539px;width:2px;height:32px;background:#0d2236"></div>
<div class="a" style="left:326px;top:539px;width:5px;height:2px;background:#0d2236"></div>
<div class="a" style="left:326px;top:569px;width:5px;height:2px;background:#0d2236"></div>
<svg style="left:311.5px;top:577.5px" width="15" height="15" viewBox="0 0 15 15"><circle cx="7.5" cy="7.5" r="7.2" fill="#000"/><path d="M2.2 7.5 L5.2 4.6 L5.2 6.4 L9.8 6.4 L9.8 4.6 L12.8 7.5 L9.8 10.4 L9.8 8.6 L5.2 8.6 L5.2 10.4Z" fill="#fff"/></svg>
<div class="a" style="left:330px;top:579px;width:2px;height:52px;background:#0d2236"></div>
<div class="a" style="left:326px;top:579px;width:5px;height:2px;background:#0d2236"></div>
<div class="a" style="left:326px;top:629px;width:5px;height:2px;background:#0d2236"></div>
<svg style="left:311px;top:679.5px" width="16" height="12" viewBox="0 0 16 12"><path d="M0.5 2.5 L3.5 2.5 Q5.5 2.5 7 6 Q8.5 9.5 11 9.5 L13 9.5 M0.5 9.5 L3.5 9.5 Q5.5 9.5 7 6 Q8.5 2.5 11 2.5 L13 2.5" fill="none" stroke="#111" stroke-width="1.6"/><path d="M11.5 0 L15.5 2.5 L11.5 5Z M11.5 7 L15.5 9.5 L11.5 12Z" fill="#111"/></svg>
<div class="a" style="left:330px;top:680px;width:2px;height:71px;background:#0d2236"></div>
<div class="a" style="left:326px;top:680px;width:5px;height:2px;background:#0d2236"></div>
<div class="a" style="left:326px;top:749px;width:5px;height:2px;background:#0d2236"></div>
<div class="a" style="left:341.5px;top:521px;width:1.5px;height:1px;background:#999"></div>
<div class="a" style="left:341.5px;top:523px;width:1.5px;height:1px;background:#999"></div>
<div class="a" style="left:341.5px;top:525px;width:1.5px;height:1px;background:#999"></div>
<div class="a" style="left:341.5px;top:527px;width:1.5px;height:1px;background:#999"></div>
<div class="a" style="left:341.5px;top:529px;width:1.5px;height:1px;background:#999"></div>
<div class="a" style="left:341.5px;top:531px;width:1.5px;height:1px;background:#999"></div>
<div class="a" style="left:341.5px;top:533px;width:1.5px;height:1px;background:#999"></div>
<div class="a" style="left:341.5px;top:535px;width:1.5px;height:1px;background:#999"></div>
<svg style="left:21px;top:804px" width="32" height="34" viewBox="0 0 32 34"><circle cx="9" cy="9" r="6.5" fill="#c4c4c4"/><circle cx="16.7" cy="12.5" r="6.5" fill="#808080"/>
<circle cx="23" cy="23" r="7" fill="#000"/>
<path d="M6 6.5 Q13 7 17.5 12 Q21 16 22 21" fill="none" stroke="#fff" stroke-width="2"/><path d="M17.5 19.5 L22.5 25 L26 18" fill="none" stroke="#fff" stroke-width="2"/></svg>
<div class="t" style="left:57.5px;top:815.33px;font-size:13.2px;font-weight:700;color:#111;">Reroutes</div>
<svg style="left:314px;top:810.5px" width="19" height="19" viewBox="0 0 19 19"><circle cx="9.5" cy="9.5" r="8.6" fill="none" stroke="#b4b4b4" stroke-width="1.5"/><path d="M5 10.5 L9.5 15 L14 10.5 M9.5 15 L9.5 4.5" fill="none" stroke="#b4b4b4" stroke-width="1.5"/></svg>
<div class="a" style="left:21px;top:840px;width:315px;height:1px;background:#bdbdbd"></div>
<svg style="left:22px;top:862px" width="30" height="16" viewBox="0 0 30 16"><path d="M0.6 7.5 L8 0.8 L8 4.5 L15 4.5 L15 10.5 L8 10.5 L8 14.2Z" fill="#000"/><path d="M29 7.5 L21.8 0.8 L21.8 4.5 L15 4.5 L15 10.5 L21.8 10.5 L21.8 14.2Z" fill="#fff" stroke="#000" stroke-width="1"/></svg>
<div class="t" style="left:57.5px;top:865.13px;font-size:13.2px;font-weight:700;color:#111;">Line Programming</div>
<svg style="left:314px;top:860.5px" width="19" height="19" viewBox="0 0 19 19"><circle cx="9.5" cy="9.5" r="8.6" fill="none" stroke="#b4b4b4" stroke-width="1.5"/><path d="M5 8.5 L9.5 4 L14 8.5 M9.5 4 L9.5 14.5" fill="none" stroke="#b4b4b4" stroke-width="1.5"/></svg>
<div class="a" style="left:21px;top:890px;width:315px;height:1px;background:#bdbdbd"></div>
<svg style="left:28px;top:902.5px" width="7" height="7" viewBox="0 0 7 7"><path d="M6.2 0.3 L6.2 6.2 L0.3 6.2Z" fill="#595959"/></svg>
<svg style="left:43px;top:898px" width="16" height="12" viewBox="0 0 16 12"><path d="M0.5 6 L5 1.5 L5 4 L8.5 4 L8.5 8 L5 8 L5 10.5Z" fill="#000"/><path d="M15 6 L10.5 1.5 L10.5 4 L8.5 4 L8.5 8 L10.5 8 L10.5 10.5Z" fill="#fff" stroke="#000" stroke-width="0.8"/></svg>
<div class="t" style="left:66.5px;top:899.97px;font-size:12.2px;font-weight:400;color:#0a0a0a;transform:scaleX(0.96);transform-origin:0 0;">Line Programming</div>
<svg style="left:48px;top:922.5px" width="7" height="7" viewBox="0 0 7 7"><path d="M6.2 0.3 L6.2 6.2 L0.3 6.2Z" fill="#595959"/></svg>
<svg style="left:65px;top:918px" width="15" height="15" viewBox="0 0 15 15"><rect x="0.7" y="0.9" width="9.3" height="13.2" fill="#fff" stroke="#3b7a3b" stroke-width="1.1"/>
<path d="M3 4 L6.5 4 M3 7.5 L6.5 7.5 M3 11 L6.5 11" stroke="#2a6a2a" stroke-width="1"/>
<path d="M6.5 3 L8 5 L11.5 0.8 M6.5 6.5 L8 8.5 L11.5 4.5 M6.5 10 L8 12 L11.5 8" fill="none" stroke="#2a8a2a" stroke-width="1.2"/></svg>
<div class="t" style="left:86.5px;top:919.67px;font-size:12.2px;font-weight:400;color:#0a0a0a;transform:scaleX(0.96);transform-origin:0 0;">Auto Insertion</div>
<div class="a" style="left:101px;top:935px;width:235px;height:19.5px;background:#d9d9d9"></div>
<svg style="left:85px;top:938px" width="13" height="14" viewBox="0 0 13 14"><rect x="1" y="1" width="11" height="8" fill="#3a8fd0" stroke="#888" stroke-width="0.8"/><rect x="5" y="9" width="3" height="2" fill="#666"/><rect x="2" y="11" width="9" height="2.5" fill="#444"/></svg>
<div class="t" style="left:106px;top:939.67px;font-size:12.2px;font-weight:400;color:#0a0a0a;transform:scaleX(0.96);transform-origin:0 0;">Juki IS</div>
<div class="a" style="left:345px;top:61px;width:1px;height:938px;background:#a8a8a8"></div>
<div class="a" style="left:346px;top:61px;width:1094px;height:1px;background:#b4b4b4"></div>
<div class="a" style="left:637px;top:62px;width:1px;height:937px;background:#a8a8a8"></div>
<div class="a" style="left:347px;top:63px;width:279px;height:30px;border:1px solid #d6d6d6;border-bottom:none"></div>
<div class="t" style="left:356.5px;top:72.85px;font-size:16.6px;font-weight:400;color:#a3a3a3;">Machine List</div>
<svg style="left:603px;top:75px" width="9" height="11" viewBox="0 0 9 11"><rect x="2" y="0.5" width="5" height="5" fill="#6a6a6a"/><rect x="0.5" y="5" width="8" height="1.3" fill="#6a6a6a"/><rect x="4" y="6" width="1.1" height="4" fill="#6a6a6a"/><rect x="3.3" y="0.5" width="1" height="4.5" fill="#9a9a9a"/></svg>
<div class="a" style="left:346px;top:311px;width:291px;height:1px;background:#a8a8a8"></div>
<div class="a" style="left:346px;top:91px;width:280px;height:220px;border:5px solid #ec1b24"></div>
<svg style="left:352px;top:100px" width="16" height="16" viewBox="0 0 16 16"><circle cx="8" cy="8" r="6.9" fill="#fff" stroke="#888" stroke-width="1.1"/>
<circle cx="8" cy="8" r="5.3" fill="#2aa52a"/><rect x="3.5" y="6.8" width="9" height="2.4" fill="#eee"/><rect x="6.8" y="3.5" width="2.4" height="9" fill="#eee"/></svg>
<svg style="left:375px;top:100px" width="16" height="16" viewBox="0 0 16 16"><path d="M16.00 8.00 L15.80 9.78 L13.23 10.52 L12.53 11.62 L12.99 14.25 L11.47 15.21 L9.29 13.65 L8.00 13.80 L6.22 15.80 L4.53 15.21 L4.38 12.53 L3.47 11.62 L0.79 11.47 L0.20 9.78 L2.20 8.00 L2.35 6.71 L0.79 4.53 L1.75 3.01 L4.38 3.47 L5.48 2.77 L6.22 0.20 L8.00 0.00 L9.29 2.35 L10.52 2.77 L12.99 1.75 L14.25 3.01 L13.23 5.48 L13.65 6.71Z" fill="#f2b82a" stroke="#d99a10" stroke-width="0.6"/><circle cx="7.5" cy="7.5" r="2.2" fill="#333"/><circle cx="8.2" cy="8.6" r="1.6" fill="#fff"/></svg>
<div class="a" style="left:363px;top:135px;width:246px;height:160px;border:1px solid #d0d0d0;background:#fff"></div>
<div class="a" style="left:364px;top:136px;width:244px;height:22px;background:#fff;border-bottom:1px solid #d8d8d8"></div>
<div class="a" style="left:485px;top:136px;width:1px;height:43px;background:#d8d8d8"></div>
<div class="a" style="left:364px;top:158px;width:121px;height:21px;background:#f2f2f2;border-bottom:1px solid #dadada"></div>
<div class="a" style="left:486px;top:158px;width:122px;height:21px;background:#d9d9d9;border-bottom:1px solid #d0d0d0"></div>
<div class="t" style="left:368px;top:141.84px;font-size:12px;font-weight:400;color:#1e1e1e;">Operation</div>
<div class="t" style="left:489px;top:141.84px;font-size:12px;font-weight:400;color:#1e1e1e;">Machine</div>
<div class="t" style="left:368px;top:163.84px;font-size:12px;font-weight:400;color:#1e1e1e;">Auto Insertion</div>
<div class="t" style="left:489px;top:163.84px;font-size:12px;font-weight:400;color:#1e1e1e;">Juki IS</div>
<div class="a" style="left:356px;top:312px;width:282px;height:40px;background:#fff;border-left:1px solid #bdbdbd;border-top:1px solid #bdbdbd"></div>
<div class="a" style="left:367px;top:326px;width:14px;height:14px;border:1px solid #1a78d0;background:#fff"></div>
<div class="t" style="left:417.5px;top:328.51px;font-size:11.8px;font-weight:700;color:#333;">Board Geometry</div>
<div class="a" style="left:358px;top:352px;width:280px;height:41px;background:linear-gradient(90deg,#ececec,#e6e6e6 70%,#e4e4e4);border:1px solid #a8a8a8"></div>
<div class="a" style="left:367px;top:366px;width:14px;height:14px;border:1px solid #909090;background:#fff"></div>
<div class="t" style="left:417.5px;top:368.26px;font-size:12.1px;font-weight:700;color:#333;">Part Management &amp; Troubleshooting</div>
<div class="a" style="left:358px;top:392px;width:280px;height:41px;background:linear-gradient(90deg,#ececec,#e6e6e6 70%,#e4e4e4);border:1px solid #a8a8a8"></div>
<div class="a" style="left:367px;top:406px;width:14px;height:14px;border:1px solid #909090;background:#fff"></div>
<div class="t" style="left:417.5px;top:408.51px;font-size:11.8px;font-weight:700;color:#333;">Angle Resolution</div>
<div class="a" style="left:358px;top:432px;width:280px;height:41px;background:linear-gradient(90deg,#ececec,#e6e6e6 70%,#e4e4e4);border:1px solid #a8a8a8"></div>
<div class="a" style="left:367px;top:446px;width:14px;height:14px;border:1px solid #909090;background:#fff"></div>
<div class="t" style="left:417.5px;top:448.51px;font-size:11.8px;font-weight:700;color:#333;">Program Transfer</div>
<div class="a" style="left:358px;top:472px;width:280px;height:41px;background:linear-gradient(90deg,#ececec,#e6e6e6 70%,#e4e4e4);border:1px solid #a8a8a8"></div>
<div class="t" style="left:417.5px;top:488.51px;font-size:11.8px;font-weight:700;color:#333;">Material Setup</div>
<div class="a" style="left:356px;top:957px;width:110px;height:38px;background:#f3f3f3;border:1px solid #d2d2d2"></div>
<svg style="left:373px;top:963px" width="26" height="26" viewBox="0 0 26 26"><rect x="0" y="0" width="26" height="26" rx="2.5" fill="#7b7b7b"/><rect x="6" y="5" width="2.2" height="16" fill="#fff"/><path d="M19.5 5 L19.5 21 L10 13Z" fill="#fff"/></svg>
<div class="t" style="left:404.5px;top:971.68px;font-size:11.6px;font-weight:700;color:#a3a3a3;">Previous</div>
<div class="a" style="left:471px;top:957px;width:90px;height:38px;background:linear-gradient(#ececec,#e4e4e4);border:1px solid #adadad"></div>
<svg style="left:489px;top:963px" width="25" height="26" viewBox="0 0 25 26"><rect x="0" y="0" width="25" height="26" rx="2.5" fill="#000"/><path d="M6 5 L6 21 L15.5 13Z" fill="#fff"/><rect x="17" y="5" width="2.2" height="16" fill="#fff"/></svg>
<div class="t" style="left:519.5px;top:971.17px;font-size:12.2px;font-weight:700;color:#333;">Next</div>
<div class="a" style="left:638px;top:62px;width:802px;height:1.5px;background:#a5a5a5"></div>
<div class="a" style="left:643px;top:154px;width:796px;height:1px;background:#d4d4d4"></div>
<div class="a" style="left:800px;top:68px;width:1px;height:80px;background:#d2d2d2"></div>
<div class="a" style="left:1052px;top:68px;width:1px;height:80px;background:#d2d2d2"></div>
<div class="a" style="left:1285px;top:68px;width:1px;height:80px;background:#d2d2d2"></div>
<svg style="left:650px;top:68px" width="34" height="34" viewBox="0 0 34 34"><rect x="2" y="10" width="10" height="11" fill="#000"/><rect x="12" y="21" width="10.4" height="9.8" fill="#000"/><path d="M19.5 3 L29 12.5 M29 3 L19.5 12.5" stroke="#000" stroke-width="3.3"/></svg>
<div class="t" style="left:635.00px;top:105.34px;width:60px;text-align:center;font-size:12px;font-weight:400;color:#222;">Assign</div>
<div class="t" style="left:635.00px;top:119.44px;width:60px;text-align:center;font-size:12px;font-weight:400;color:#222;">Origin</div>
<svg style="left:691px;top:68px" width="15" height="16" viewBox="0 0 15 16"><path d="M1 1 L13.5 4.5 L13.5 15 L1 11.5Z" fill="#2a2a2a"/><path d="M3 3.5 L11.5 6 L11.5 12.5 L3 10Z" fill="#555"/><circle cx="7.3" cy="8" r="2.6" fill="#ff1010"/></svg>
<div class="t" style="left:708.5px;top:72.47px;font-size:11.5px;font-weight:400;color:#222;">Snap To Feature</div>
<div class="t" style="left:661.50px;top:138.57px;width:120px;text-align:center;font-size:11.5px;font-weight:400;color:#222;">CAD Controls</div>
<svg style="left:810px;top:69px" width="32" height="32" viewBox="0 0 32 32"><g opacity="1.0"><circle cx="16" cy="15.7" r="13.6" fill="#fff" stroke="#8a8a8a" stroke-width="1.36"/><path d="M16 15.7 L16.00 5.09 A10.608 10.608 0 0 1 23.50 8.20Z" fill="#7fd07f" stroke="#156015" stroke-width="0.68"/><path d="M16 15.7 L23.50 8.20 A10.608 10.608 0 0 1 26.61 15.70Z" fill="#5cc05c" stroke="#156015" stroke-width="0.68"/><path d="M16 15.7 L26.61 15.70 A10.608 10.608 0 0 1 23.50 23.20Z" fill="#2fae2f" stroke="#156015" stroke-width="0.68"/><path d="M16 15.7 L23.50 23.20 A10.608 10.608 0 0 1 16.00 26.31Z" fill="#1f9a1f" stroke="#156015" stroke-width="0.68"/><path d="M16 15.7 L16.00 26.31 A10.608 10.608 0 0 1 8.50 23.20Z" fill="#178a17" stroke="#156015" stroke-width="0.68"/><path d="M16 15.7 L8.50 23.20 A10.608 10.608 0 0 1 5.39 15.70Z" fill="#1f9a1f" stroke="#156015" stroke-width="0.68"/><path d="M16 15.7 L5.39 15.70 A10.608 10.608 0 0 1 8.50 8.20Z" fill="#38b038" stroke="#156015" stroke-width="0.68"/><path d="M16 15.7 L8.50 8.20 A10.608 10.608 0 0 1 16.00 5.09Z" fill="#6ac86a" stroke="#156015" stroke-width="0.68"/><circle cx="16" cy="15.7" r="4.08" fill="#8ccc8c" stroke="#2a7a2a" stroke-width="0.82"/></g></svg>
<div class="t" style="left:796.00px;top:105.34px;width:60px;text-align:center;font-size:12px;font-weight:400;color:#222;">Create</div>
<div class="t" style="left:796.00px;top:119.54px;width:60px;text-align:center;font-size:12px;font-weight:400;color:#222;">Fiducial</div>
<svg style="left:853px;top:69px" width="16" height="16" viewBox="0 0 16 16"><g opacity="0.4"><circle cx="8" cy="8" r="6.8" fill="#fff" stroke="#8a8a8a" stroke-width="0.68"/><path d="M8 8 L8.00 2.70 A5.304 5.304 0 0 1 11.75 4.25Z" fill="#7fd07f" stroke="#156015" stroke-width="0.34"/><path d="M8 8 L11.75 4.25 A5.304 5.304 0 0 1 13.30 8.00Z" fill="#5cc05c" stroke="#156015" stroke-width="0.34"/><path d="M8 8 L13.30 8.00 A5.304 5.304 0 0 1 11.75 11.75Z" fill="#2fae2f" stroke="#156015" stroke-width="0.34"/><path d="M8 8 L11.75 11.75 A5.304 5.304 0 0 1 8.00 13.30Z" fill="#1f9a1f" stroke="#156015" stroke-width="0.34"/><path d="M8 8 L8.00 13.30 A5.304 5.304 0 0 1 4.25 11.75Z" fill="#178a17" stroke="#156015" stroke-width="0.34"/><path d="M8 8 L4.25 11.75 A5.304 5.304 0 0 1 2.70 8.00Z" fill="#1f9a1f" stroke="#156015" stroke-width="0.34"/><path d="M8 8 L2.70 8.00 A5.304 5.304 0 0 1 4.25 4.25Z" fill="#38b038" stroke="#156015" stroke-width="0.34"/><path d="M8 8 L4.25 4.25 A5.304 5.304 0 0 1 8.00 2.70Z" fill="#6ac86a" stroke="#156015" stroke-width="0.34"/><circle cx="8" cy="8" r="2.04" fill="#8ccc8c" stroke="#2a7a2a" stroke-width="0.41"/></g></svg>
<div class="t" style="left:872.5px;top:72.38px;font-size:11.6px;font-weight:400;color:#b4b4b4;">Edit Fiducial</div>
<svg style="left:853px;top:92px" width="16" height="16" viewBox="0 0 16 16"><circle cx="8" cy="7.7" r="6.6" fill="#fff" stroke="#cfcfcf" stroke-width="1.2"/><circle cx="8" cy="7.7" r="5" fill="#f0a8b4"/><rect x="4.5" y="6.8" width="7" height="1.9" fill="#fff"/></svg>
<div class="t" style="left:872.5px;top:95.18px;font-size:11.6px;font-weight:400;color:#b4b4b4;">Convert to Component</div>
<svg style="left:852px;top:114px" width="18" height="18" viewBox="0 0 18 18"><g opacity="1.0"><circle cx="6.5" cy="6.5" r="5.6" fill="#fff" stroke="#8a8a8a" stroke-width="0.56"/><path d="M6.5 6.5 L6.50 2.13 A4.367999999999999 4.367999999999999 0 0 1 9.59 3.41Z" fill="#7fd07f" stroke="#156015" stroke-width="0.28"/><path d="M6.5 6.5 L9.59 3.41 A4.367999999999999 4.367999999999999 0 0 1 10.87 6.50Z" fill="#5cc05c" stroke="#156015" stroke-width="0.28"/><path d="M6.5 6.5 L10.87 6.50 A4.367999999999999 4.367999999999999 0 0 1 9.59 9.59Z" fill="#2fae2f" stroke="#156015" stroke-width="0.28"/><path d="M6.5 6.5 L9.59 9.59 A4.367999999999999 4.367999999999999 0 0 1 6.50 10.87Z" fill="#1f9a1f" stroke="#156015" stroke-width="0.28"/><path d="M6.5 6.5 L6.50 10.87 A4.367999999999999 4.367999999999999 0 0 1 3.41 9.59Z" fill="#178a17" stroke="#156015" stroke-width="0.28"/><path d="M6.5 6.5 L3.41 9.59 A4.367999999999999 4.367999999999999 0 0 1 2.13 6.50Z" fill="#1f9a1f" stroke="#156015" stroke-width="0.28"/><path d="M6.5 6.5 L2.13 6.50 A4.367999999999999 4.367999999999999 0 0 1 3.41 3.41Z" fill="#38b038" stroke="#156015" stroke-width="0.28"/><path d="M6.5 6.5 L3.41 3.41 A4.367999999999999 4.367999999999999 0 0 1 6.50 2.13Z" fill="#6ac86a" stroke="#156015" stroke-width="0.28"/><circle cx="6.5" cy="6.5" r="1.68" fill="#8ccc8c" stroke="#2a7a2a" stroke-width="0.34"/></g><rect x="7" y="8.6" width="9.6" height="8" fill="#2a3a50"/><rect x="9" y="10.5" width="5.6" height="3.5" fill="#d8b040"/><rect x="10" y="11.2" width="3.6" height="2" fill="#2a3a50"/></svg>
<div class="t" style="left:872.5px;top:117.38px;font-size:11.6px;font-weight:400;color:#222;">From Lead</div>
<div class="t" style="left:886.50px;top:138.48px;width:80px;text-align:center;font-size:11.6px;font-weight:400;color:#222;">Fiducials</div>
<svg style="left:1008px;top:69px" width="32" height="32" viewBox="0 0 32 32"><g opacity="1.0"><circle cx="11.2" cy="11" r="9.4" fill="#fff" stroke="#8a8a8a" stroke-width="0.94"/><path d="M11.2 11 L11.20 3.67 A7.332000000000001 7.332000000000001 0 0 1 16.38 5.82Z" fill="#7fd07f" stroke="#156015" stroke-width="0.47"/><path d="M11.2 11 L16.38 5.82 A7.332000000000001 7.332000000000001 0 0 1 18.53 11.00Z" fill="#5cc05c" stroke="#156015" stroke-width="0.47"/><path d="M11.2 11 L18.53 11.00 A7.332000000000001 7.332000000000001 0 0 1 16.38 16.18Z" fill="#2fae2f" stroke="#156015" stroke-width="0.47"/><path d="M11.2 11 L16.38 16.18 A7.332000000000001 7.332000000000001 0 0 1 11.20 18.33Z" fill="#1f9a1f" stroke="#156015" stroke-width="0.47"/><path d="M11.2 11 L11.20 18.33 A7.332000000000001 7.332000000000001 0 0 1 6.02 16.18Z" fill="#178a17" stroke="#156015" stroke-width="0.47"/><path d="M11.2 11 L6.02 16.18 A7.332000000000001 7.332000000000001 0 0 1 3.87 11.00Z" fill="#1f9a1f" stroke="#156015" stroke-width="0.47"/><path d="M11.2 11 L3.87 11.00 A7.332000000000001 7.332000000000001 0 0 1 6.02 5.82Z" fill="#38b038" stroke="#156015" stroke-width="0.47"/><path d="M11.2 11 L6.02 5.82 A7.332000000000001 7.332000000000001 0 0 1 11.20 3.67Z" fill="#6ac86a" stroke="#156015" stroke-width="0.47"/><circle cx="11.2" cy="11" r="2.82" fill="#8ccc8c" stroke="#2a7a2a" stroke-width="0.56"/></g><rect x="15" y="9" width="15" height="20.5" rx="1" fill="#e0a830" stroke="#b88010" stroke-width="0.8"/><rect x="16.75" y="11.5" width="11.5" height="16" fill="#e8ecef"/><path d="M20 9 L20 5.5 L25 5.5 L25 9Z" fill="#8a8a8a"/><text x="18" y="20" font-size="5.5" font-family="Liberation Sans" font-weight="700" fill="#333">OK</text></svg>
<div class="t" style="left:988.50px;top:105.34px;width:70px;text-align:center;font-size:12px;font-weight:400;color:#222;">Show All</div>
<div class="t" style="left:988.50px;top:119.54px;width:70px;text-align:center;font-size:12px;font-weight:400;color:#222;">Fiducials</div>
<svg style="left:1068px;top:69px" width="36" height="34" viewBox="0 0 36 34"><defs><linearGradient id="g90" x1="0" y1="0" x2="0" y2="1"><stop offset="0" stop-color="#4ad04a"/><stop offset="1" stop-color="#1e8a1e"/></linearGradient></defs><path d="M27 4.5 Q12 3 7 13 Q4 20 8 27" fill="none" stroke="url(#g90)" stroke-width="3.6"/><path d="M5 23 L7 31.5 L14 31.5 L13.5 25.5Z" fill="#1a7a1a"/><text x="13.6" y="24.2" font-size="16.5" font-family="Liberation Sans" font-weight="700" fill="#2a8a2a" stroke="#2a8a2a" stroke-width="0.5" letter-spacing="-1.6">90</text></svg>
<div class="t" style="left:1048.50px;top:105.34px;width:80px;text-align:center;font-size:12px;font-weight:400;color:#222;">Board</div>
<div class="t" style="left:1048.50px;top:119.37px;width:80px;text-align:center;font-size:12.2px;font-weight:400;color:#222;">Orientation</div>
<div class="a" style="left:1123px;top:66px;width:38px;height:67.5px;background:#9bc3e7"></div>
<svg style="left:1129.8px;top:74.2px" width="26" height="24" viewBox="0 0 26 24"><rect x="0" y="0" width="24.5" height="2.6" rx="1" fill="#40c040"/><circle cx="2.40" cy="1.30" r="1.3" fill="#4a8ee8"/><circle cx="7.10" cy="1.30" r="1.3" fill="#4a8ee8"/><circle cx="11.80" cy="1.30" r="1.3" fill="#4a8ee8"/><circle cx="16.60" cy="1.30" r="1.3" fill="#4a8ee8"/><circle cx="21.90" cy="1.30" r="1.3" fill="#4a8ee8"/><circle cx="2.40" cy="6.80" r="1.3" fill="#4a8ee8"/><circle cx="11.80" cy="6.80" r="1.3" fill="#4a8ee8"/><circle cx="21.90" cy="6.80" r="1.3" fill="#4a8ee8"/><circle cx="2.40" cy="11.80" r="1.3" fill="#4a8ee8"/><circle cx="7.10" cy="11.80" r="1.3" fill="#4a8ee8"/><circle cx="11.80" cy="11.80" r="1.3" fill="#4a8ee8"/><circle cx="16.60" cy="11.80" r="1.3" fill="#4a8ee8"/><circle cx="21.90" cy="11.80" r="1.3" fill="#4a8ee8"/><circle cx="2.40" cy="16.30" r="1.3" fill="#4a8ee8"/><circle cx="11.80" cy="16.30" r="1.3" fill="#4a8ee8"/><circle cx="21.90" cy="16.30" r="1.3" fill="#4a8ee8"/><circle cx="2.40" cy="21.30" r="1.3" fill="#4a8ee8"/><circle cx="7.10" cy="21.30" r="1.3" fill="#4a8ee8"/><circle cx="11.80" cy="21.30" r="1.3" fill="#4a8ee8"/><circle cx="16.60" cy="21.30" r="1.3" fill="#4a8ee8"/><circle cx="21.90" cy="21.30" r="1.3" fill="#4a8ee8"/></svg>
<svg style="left:1173.8px;top:74px" width="26" height="24" viewBox="0 0 26 24"><circle cx="2.40" cy="0.80" r="1.3" fill="#4a8ee8"/><circle cx="7.10" cy="0.80" r="1.3" fill="#4a8ee8"/><circle cx="11.80" cy="0.80" r="1.3" fill="#4a8ee8"/><circle cx="16.60" cy="0.80" r="1.3" fill="#4a8ee8"/><circle cx="21.90" cy="0.80" r="1.3" fill="#4a8ee8"/><circle cx="2.40" cy="6.30" r="1.3" fill="#4a8ee8"/><circle cx="11.80" cy="6.30" r="1.3" fill="#4a8ee8"/><circle cx="21.90" cy="6.30" r="1.3" fill="#4a8ee8"/><circle cx="2.40" cy="11.30" r="1.3" fill="#4a8ee8"/><circle cx="7.10" cy="11.30" r="1.3" fill="#4a8ee8"/><circle cx="11.80" cy="11.30" r="1.3" fill="#4a8ee8"/><circle cx="16.60" cy="11.30" r="1.3" fill="#4a8ee8"/><circle cx="21.90" cy="11.30" r="1.3" fill="#4a8ee8"/><circle cx="2.40" cy="15.80" r="1.3" fill="#4a8ee8"/><circle cx="11.80" cy="15.80" r="1.3" fill="#4a8ee8"/><circle cx="21.90" cy="15.80" r="1.3" fill="#4a8ee8"/><rect x="0" y="18.5" width="24.5" height="2.6" rx="1" fill="#40c040"/><circle cx="2.40" cy="19.80" r="1.3" fill="#4a8ee8"/><circle cx="7.10" cy="19.80" r="1.3" fill="#4a8ee8"/><circle cx="11.80" cy="19.80" r="1.3" fill="#4a8ee8"/><circle cx="16.60" cy="19.80" r="1.3" fill="#4a8ee8"/><circle cx="21.90" cy="19.80" r="1.3" fill="#4a8ee8"/></svg>
<div class="t" style="left:1121.50px;top:105.64px;width:40px;text-align:center;font-size:12px;font-weight:400;color:#222;">Top</div>
<div class="t" style="left:1121.50px;top:119.34px;width:40px;text-align:center;font-size:12px;font-weight:400;color:#222;">Side</div>
<div class="t" style="left:1154.20px;top:105.64px;width:60px;text-align:center;font-size:12px;font-weight:400;color:#222;">Bottom</div>
<div class="t" style="left:1154.20px;top:119.34px;width:60px;text-align:center;font-size:12px;font-weight:400;color:#222;">Side</div>
<svg style="left:1229px;top:70px" width="32" height="30" viewBox="0 0 32 30"><rect x="1" y="1.5" width="18" height="15" rx="2" fill="#2a3448"/><g fill="#e0b020"><circle cx="4.0" cy="1.5" r="1.1"/><circle cx="4.0" cy="16.5" r="1.1"/><circle cx="8.2" cy="1.5" r="1.1"/><circle cx="8.2" cy="16.5" r="1.1"/><circle cx="12.4" cy="1.5" r="1.1"/><circle cx="12.4" cy="16.5" r="1.1"/><circle cx="16.6" cy="1.5" r="1.1"/><circle cx="16.6" cy="16.5" r="1.1"/></g><rect x="4" y="5" width="10" height="6" fill="#d8b860"/><rect x="5.2" y="6.2" width="7.6" height="3.6" fill="#3a4458"/><rect x="14" y="8" width="15" height="20.5" rx="1" fill="#e0a830" stroke="#b88010" stroke-width="0.8"/><rect x="15.75" y="10.5" width="11.5" height="16" fill="#e8ecef"/><path d="M19 8 L19 4.5 L24 4.5 L24 8Z" fill="#8a8a8a"/><text x="17" y="19" font-size="5.5" font-family="Liberation Sans" font-weight="700" fill="#333">OK</text></svg>
<div class="t" style="left:1205.00px;top:105.64px;width:80px;text-align:center;font-size:12px;font-weight:400;color:#222;">Show</div>
<div class="t" style="left:1205.00px;top:119.17px;width:80px;text-align:center;font-size:12.2px;font-weight:400;color:#222;">Components</div>
<div class="t" style="left:1129.00px;top:138.48px;width:80px;text-align:center;font-size:11.6px;font-weight:400;color:#222;">Orientation</div>
<svg style="left:660px;top:455px" width="750" height="360" viewBox="660 455 750 360" font-family="Liberation Sans"><rect x="674.5" y="469.5" width="726" height="337" fill="none" stroke="#3a3a3a" stroke-width="1.1"/><text x="685.80" y="478.20" font-size="9" fill="#2a2a2a" text-anchor="start">MH4</text><rect x="685.50" y="480.50" width="19.00" height="19.00" fill="none" stroke="#555" stroke-width="1"/><circle cx="695.15" cy="490.05" r="9.55" fill="#000"/><text x="717.50" y="468.60" font-size="5.6" fill="#7a8aa0" text-anchor="start">TP5</text><rect x="717.50" y="470.50" width="13.00" height="26.00" fill="none" stroke="#4a4a4a" stroke-width="1"/><rect x="718.30" y="471.40" width="11.40" height="25.00" fill="#000" rx="0"/><rect x="718.80" y="472.00" width="10.40" height="2.00" fill="#fff" rx="0"/><rect x="718.80" y="493.80" width="10.40" height="2.00" fill="#fff" rx="0"/><text x="735.50" y="479.50" font-size="5.6" fill="#7a8aa0" text-anchor="start">C20</text><rect x="735.50" y="482.50" width="9.00" height="15.00" fill="none" stroke="#4a4a4a" stroke-width="1"/><rect x="737.10" y="484.10" width="5.90" height="5.00" fill="#000" rx="0"/><rect x="737.10" y="491.30" width="5.90" height="5.00" fill="#000" rx="0"/><text x="745.80" y="485.80" font-size="9" fill="#2a2a2a" text-anchor="start">R25</text><rect x="746.50" y="489.50" width="15.00" height="8.00" fill="none" stroke="#4a4a4a" stroke-width="1"/><rect x="747.40" y="490.80" width="5.20" height="6.00" fill="#000" rx="0"/><rect x="755.00" y="490.80" width="5.20" height="6.00" fill="#000" rx="0"/><text x="770.50" y="484.70" font-size="9" fill="#2a2a2a" text-anchor="start">Q2</text><rect x="769.50" y="488.50" width="18.00" height="19.00" fill="none" stroke="#4a4a4a" stroke-width="1"/><rect x="776.20" y="489.50" width="5.40" height="7.50" fill="#000" rx="0"/><rect x="770.50" y="499.50" width="5.30" height="7.00" fill="#000" rx="0"/><rect x="779.50" y="499.50" width="5.50" height="7.00" fill="#000" rx="0"/><text x="794.50" y="484.70" font-size="9" fill="#2a2a2a" text-anchor="start">Q1</text><rect x="792.50" y="488.50" width="18.00" height="19.00" fill="none" stroke="#4a4a4a" stroke-width="1"/><rect x="799.20" y="489.50" width="5.40" height="7.50" fill="#000" rx="0"/><rect x="793.50" y="499.50" width="5.30" height="7.00" fill="#000" rx="0"/><rect x="802.50" y="499.50" width="5.50" height="7.00" fill="#000" rx="0"/><text x="775.80" y="515.00" font-size="9" fill="#2a2a2a" text-anchor="start">R26</text><rect x="792.50" y="508.50" width="15.00" height="9.00" fill="none" stroke="#4a4a4a" stroke-width="1"/><rect x="793.10" y="510.10" width="5.45" height="5.90" fill="#000" rx="0"/><rect x="800.95" y="510.10" width="5.45" height="5.90" fill="#000" rx="0"/><rect x="728.5" y="501" width="12" height="8" rx="2" fill="#000"/><rect x="732.00" y="502.50" width="4.50" height="5.00" fill="#444" rx="0"/><rect x="728.5" y="509.5" width="12" height="8" rx="2" fill="#000"/><rect x="732.00" y="511.00" width="4.50" height="5.00" fill="#444" rx="0"/><rect x="744.50" y="500.50" width="15.00" height="17.00" fill="none" stroke="#666" stroke-width="1"/><rect x="746.50" y="502.50" width="6.00" height="1.70" fill="#000" rx="0"/><rect x="754.00" y="502.50" width="5.00" height="1.70" fill="#000" rx="0"/><rect x="746.50" y="505.50" width="6.00" height="1.70" fill="#000" rx="0"/><rect x="754.00" y="505.50" width="5.00" height="1.70" fill="#000" rx="0"/><rect x="746.50" y="508.50" width="6.00" height="1.70" fill="#000" rx="0"/><rect x="754.00" y="508.50" width="5.00" height="1.70" fill="#000" rx="0"/><rect x="746.50" y="511.50" width="6.00" height="1.70" fill="#000" rx="0"/><rect x="754.00" y="511.50" width="5.00" height="1.70" fill="#000" rx="0"/><rect x="746.50" y="514.50" width="6.00" height="1.70" fill="#000" rx="0"/><rect x="754.00" y="514.50" width="5.00" height="1.70" fill="#000" rx="0"/><rect x="751.50" y="502.00" width="3.50" height="14.00" fill="#000" rx="0"/><text x="694.00" y="512.30" font-size="9" fill="#2a2a2a" text-anchor="start">C26</text><rect x="710.50" y="505.50" width="15.00" height="8.00" fill="none" stroke="#4a4a4a" stroke-width="1"/><rect x="711.10" y="506.80" width="5.20" height="5.90" fill="#000" rx="0"/><rect x="718.70" y="506.80" width="5.20" height="5.90" fill="#000" rx="0"/><text x="683.50" y="514.00" font-size="5.6" fill="#7a8aa0" text-anchor="start">FM3</text><rect x="683.50" y="516.50" width="7.00" height="7.00" fill="none" stroke="#aaa" stroke-width="1"/><rect x="686.50" y="516.80" width="1.00" height="6.40" fill="#111" rx="0"/><rect x="683.80" y="519.50" width="6.40" height="1.00" fill="#111" rx="0"/><rect x="735.50" y="518.50" width="9.00" height="15.00" fill="none" stroke="#4a4a4a" stroke-width="1"/><rect x="737.10" y="519.90" width="5.90" height="5.00" fill="#000" rx="0"/><rect x="737.10" y="527.10" width="5.90" height="5.00" fill="#000" rx="0"/><text x="735.50" y="539.00" font-size="5.6" fill="#7a8aa0" text-anchor="start">C27</text><rect x="746.50" y="519.50" width="15.00" height="7.00" fill="none" stroke="#4a4a4a" stroke-width="1"/><rect x="747.40" y="520.50" width="5.20" height="4.90" fill="#000" rx="0"/><rect x="755.00" y="520.50" width="5.20" height="4.90" fill="#000" rx="0"/><text x="745.80" y="536.00" font-size="9" fill="#2a2a2a" text-anchor="start">R24</text><text x="681.00" y="534.50" font-size="5.6" fill="#7a8aa0" text-anchor="start">TP31</text><rect x="681.50" y="537.50" width="13.00" height="25.00" fill="none" stroke="#4a4a4a" stroke-width="1"/><rect x="682.00" y="537.60" width="11.60" height="24.00" fill="#000" rx="0"/><rect x="682.50" y="538.20" width="10.60" height="2.00" fill="#fff" rx="0"/><rect x="682.50" y="559.00" width="10.60" height="2.00" fill="#fff" rx="0"/><text transform="translate(706.00,534.00) rotate(-90)" font-size="5.6" fill="#7a8aa0">C39</text><rect x="705.50" y="525.50" width="16.00" height="9.00" fill="none" stroke="#4a4a4a" stroke-width="1"/><rect x="706.80" y="527.00" width="5.50" height="6.10" fill="#000" rx="0"/><rect x="714.70" y="527.00" width="5.50" height="6.10" fill="#000" rx="0"/><rect x="699.50" y="535.50" width="18.00" height="27.00" fill="none" stroke="#4a4a4a" stroke-width="1"/><rect x="701.90" y="539.50" width="3.90" height="6.50" fill="#000" rx="0"/><rect x="701.90" y="553.10" width="3.90" height="5.90" fill="#000" rx="0"/><rect x="707.00" y="539.50" width="3.90" height="6.50" fill="#000" rx="0"/><rect x="707.00" y="553.10" width="3.90" height="5.90" fill="#000" rx="0"/><rect x="712.30" y="539.50" width="3.90" height="6.50" fill="#000" rx="0"/><rect x="712.30" y="553.10" width="3.90" height="5.90" fill="#000" rx="0"/><text x="719.40" y="551.90" font-size="9" fill="#2a2a2a" text-anchor="start">U13</text><rect x="703.50" y="561.50" width="15.00" height="9.00" fill="none" stroke="#4a4a4a" stroke-width="1"/><rect x="704.40" y="563.10" width="5.50" height="6.10" fill="#000" rx="0"/><rect x="712.30" y="563.10" width="5.50" height="6.10" fill="#000" rx="0"/><text x="719.50" y="568.50" font-size="9" fill="#2a2a2a" text-anchor="start">C34</text><text x="878.00" y="481.10" font-size="9" fill="#2a2a2a" text-anchor="start">J9</text><rect x="813.50" y="484.50" width="139.00" height="22.00" fill="none" stroke="#4a4a4a" stroke-width="1"/><rect x="824.86" y="485.20" width="1.86" height="4.40" fill="#000" rx="0"/><rect x="827.44" y="485.20" width="1.86" height="4.40" fill="#000" rx="0"/><rect x="830.03" y="485.20" width="1.86" height="4.40" fill="#000" rx="0"/><rect x="832.61" y="485.20" width="1.86" height="4.40" fill="#000" rx="0"/><rect x="835.19" y="485.20" width="1.86" height="4.40" fill="#000" rx="0"/><rect x="837.77" y="485.20" width="1.86" height="4.40" fill="#000" rx="0"/><rect x="840.35" y="485.20" width="1.86" height="4.40" fill="#000" rx="0"/><rect x="842.94" y="485.20" width="1.86" height="4.40" fill="#000" rx="0"/><rect x="845.52" y="485.20" width="1.86" height="4.40" fill="#000" rx="0"/><rect x="848.10" y="485.20" width="1.86" height="4.40" fill="#000" rx="0"/><rect x="850.68" y="485.20" width="1.86" height="4.40" fill="#000" rx="0"/><rect x="853.27" y="485.20" width="1.86" height="4.40" fill="#000" rx="0"/><rect x="855.85" y="485.20" width="1.86" height="4.40" fill="#000" rx="0"/><rect x="858.43" y="485.20" width="1.86" height="4.40" fill="#000" rx="0"/><rect x="861.01" y="485.20" width="1.86" height="4.40" fill="#000" rx="0"/><rect x="863.59" y="485.20" width="1.86" height="4.40" fill="#000" rx="0"/><rect x="866.18" y="485.20" width="1.86" height="4.40" fill="#000" rx="0"/><rect x="868.76" y="485.20" width="1.86" height="4.40" fill="#000" rx="0"/><rect x="871.34" y="485.20" width="1.86" height="4.40" fill="#000" rx="0"/><rect x="873.92" y="485.20" width="1.86" height="4.40" fill="#000" rx="0"/><rect x="876.51" y="485.20" width="1.86" height="4.40" fill="#000" rx="0"/><rect x="879.09" y="485.20" width="1.86" height="4.40" fill="#000" rx="0"/><rect x="881.67" y="485.20" width="1.86" height="4.40" fill="#000" rx="0"/><rect x="884.25" y="485.20" width="1.86" height="4.40" fill="#000" rx="0"/><rect x="886.83" y="485.20" width="1.86" height="4.40" fill="#000" rx="0"/><rect x="889.42" y="485.20" width="1.86" height="4.40" fill="#000" rx="0"/><rect x="892.00" y="485.20" width="1.86" height="4.40" fill="#000" rx="0"/><rect x="894.58" y="485.20" width="1.86" height="4.40" fill="#000" rx="0"/><rect x="897.16" y="485.20" width="1.86" height="4.40" fill="#000" rx="0"/><rect x="899.75" y="485.20" width="1.86" height="4.40" fill="#000" rx="0"/><rect x="902.33" y="485.20" width="1.86" height="4.40" fill="#000" rx="0"/><rect x="904.91" y="485.20" width="1.86" height="4.40" fill="#000" rx="0"/><rect x="907.49" y="485.20" width="1.86" height="4.40" fill="#000" rx="0"/><rect x="910.07" y="485.20" width="1.86" height="4.40" fill="#000" rx="0"/><rect x="912.66" y="485.20" width="1.86" height="4.40" fill="#000" rx="0"/><rect x="915.24" y="485.20" width="1.86" height="4.40" fill="#000" rx="0"/><rect x="917.82" y="485.20" width="1.86" height="4.40" fill="#000" rx="0"/><rect x="920.40" y="485.20" width="1.86" height="4.40" fill="#000" rx="0"/><rect x="922.99" y="485.20" width="1.86" height="4.40" fill="#000" rx="0"/><rect x="925.57" y="485.20" width="1.86" height="4.40" fill="#000" rx="0"/><rect x="928.15" y="485.20" width="1.86" height="4.40" fill="#000" rx="0"/><rect x="930.73" y="485.20" width="1.86" height="4.40" fill="#000" rx="0"/><rect x="933.31" y="485.20" width="1.86" height="4.40" fill="#000" rx="0"/><rect x="935.90" y="485.20" width="1.86" height="4.40" fill="#000" rx="0"/><rect x="938.48" y="485.20" width="1.86" height="4.40" fill="#000" rx="0"/><rect x="813.80" y="499.00" width="7.80" height="7.90" fill="#000" rx="0"/><rect x="944.40" y="499.00" width="7.70" height="7.90" fill="#000" rx="0"/><circle cx="948.20" cy="515.00" r="7.90" fill="#000"/><text x="686.00" y="588.00" font-size="5.6" fill="#7a8aa0" text-anchor="start">C51</text><rect x="686.50" y="590.50" width="9.00" height="15.00" fill="none" stroke="#4a4a4a" stroke-width="1"/><rect x="687.70" y="592.00" width="6.30" height="5.25" fill="#000" rx="0"/><rect x="687.70" y="599.45" width="6.30" height="5.25" fill="#000" rx="0"/><rect x="697.50" y="579.50" width="36.00" height="40.00" fill="none" stroke="#4a4a4a" stroke-width="1"/><rect x="697.79" y="579.70" width="2.65" height="9.80" fill="#000" rx="0"/><rect x="701.02" y="579.70" width="2.65" height="9.80" fill="#000" rx="0"/><rect x="704.25" y="579.70" width="2.65" height="9.80" fill="#000" rx="0"/><rect x="707.47" y="579.70" width="2.65" height="9.80" fill="#000" rx="0"/><rect x="710.70" y="579.70" width="2.65" height="9.80" fill="#000" rx="0"/><rect x="713.93" y="579.70" width="2.65" height="9.80" fill="#000" rx="0"/><rect x="717.15" y="579.70" width="2.65" height="9.80" fill="#000" rx="0"/><rect x="720.38" y="579.70" width="2.65" height="9.80" fill="#000" rx="0"/><rect x="723.61" y="579.70" width="2.65" height="9.80" fill="#000" rx="0"/><rect x="726.84" y="579.70" width="2.65" height="9.80" fill="#000" rx="0"/><rect x="730.06" y="579.70" width="2.65" height="9.80" fill="#000" rx="0"/><rect x="697.79" y="610.60" width="2.65" height="9.40" fill="#000" rx="0"/><rect x="701.02" y="610.60" width="2.65" height="9.40" fill="#000" rx="0"/><rect x="704.25" y="610.60" width="2.65" height="9.40" fill="#000" rx="0"/><rect x="707.47" y="610.60" width="2.65" height="9.40" fill="#000" rx="0"/><rect x="710.70" y="610.60" width="2.65" height="9.40" fill="#000" rx="0"/><rect x="713.93" y="610.60" width="2.65" height="9.40" fill="#000" rx="0"/><rect x="717.15" y="610.60" width="2.65" height="9.40" fill="#000" rx="0"/><rect x="720.38" y="610.60" width="2.65" height="9.40" fill="#000" rx="0"/><rect x="723.61" y="610.60" width="2.65" height="9.40" fill="#000" rx="0"/><rect x="726.84" y="610.60" width="2.65" height="9.40" fill="#000" rx="0"/><rect x="730.06" y="610.60" width="2.65" height="9.40" fill="#000" rx="0"/><text x="707.00" y="602.80" font-size="9" fill="#2a2a2a" text-anchor="start">U21</text><text x="734.50" y="590.00" font-size="5.6" fill="#7a8aa0" text-anchor="start">C52</text><rect x="734.50" y="592.50" width="8.00" height="15.00" fill="none" stroke="#4a4a4a" stroke-width="1"/><rect x="735.90" y="593.10" width="5.40" height="5.30" fill="#000" rx="0"/><rect x="735.90" y="600.60" width="5.40" height="5.30" fill="#000" rx="0"/><rect x="743.50" y="579.50" width="43.00" height="39.00" fill="none" stroke="#4a4a4a" stroke-width="1"/><rect x="745.76" y="580.90" width="2.35" height="10.10" fill="#000" rx="0"/><rect x="749.02" y="580.90" width="2.35" height="10.10" fill="#000" rx="0"/><rect x="752.29" y="580.90" width="2.35" height="10.10" fill="#000" rx="0"/><rect x="755.56" y="580.90" width="2.35" height="10.10" fill="#000" rx="0"/><rect x="758.82" y="580.90" width="2.35" height="10.10" fill="#000" rx="0"/><rect x="762.09" y="580.90" width="2.35" height="10.10" fill="#000" rx="0"/><rect x="765.36" y="580.90" width="2.35" height="10.10" fill="#000" rx="0"/><rect x="768.62" y="580.90" width="2.35" height="10.10" fill="#000" rx="0"/><rect x="771.89" y="580.90" width="2.35" height="10.10" fill="#000" rx="0"/><rect x="775.16" y="580.90" width="2.35" height="10.10" fill="#000" rx="0"/><rect x="778.42" y="580.90" width="2.35" height="10.10" fill="#000" rx="0"/><rect x="781.69" y="580.90" width="2.35" height="10.10" fill="#000" rx="0"/><rect x="745.76" y="608.10" width="2.35" height="10.10" fill="#000" rx="0"/><rect x="749.02" y="608.10" width="2.35" height="10.10" fill="#000" rx="0"/><rect x="752.29" y="608.10" width="2.35" height="10.10" fill="#000" rx="0"/><rect x="755.56" y="608.10" width="2.35" height="10.10" fill="#000" rx="0"/><rect x="758.82" y="608.10" width="2.35" height="10.10" fill="#000" rx="0"/><rect x="762.09" y="608.10" width="2.35" height="10.10" fill="#000" rx="0"/><rect x="765.36" y="608.10" width="2.35" height="10.10" fill="#000" rx="0"/><rect x="768.62" y="608.10" width="2.35" height="10.10" fill="#000" rx="0"/><rect x="771.89" y="608.10" width="2.35" height="10.10" fill="#000" rx="0"/><rect x="775.16" y="608.10" width="2.35" height="10.10" fill="#000" rx="0"/><rect x="778.42" y="608.10" width="2.35" height="10.10" fill="#000" rx="0"/><rect x="781.69" y="608.10" width="2.35" height="10.10" fill="#000" rx="0"/><text x="759.00" y="576.20" font-size="9" fill="#2a2a2a" text-anchor="start">U6</text><rect x="799.50" y="579.50" width="43.00" height="39.00" fill="none" stroke="#4a4a4a" stroke-width="1"/><rect x="801.96" y="580.90" width="2.35" height="10.10" fill="#000" rx="0"/><rect x="805.22" y="580.90" width="2.35" height="10.10" fill="#000" rx="0"/><rect x="808.49" y="580.90" width="2.35" height="10.10" fill="#000" rx="0"/><rect x="811.76" y="580.90" width="2.35" height="10.10" fill="#000" rx="0"/><rect x="815.02" y="580.90" width="2.35" height="10.10" fill="#000" rx="0"/><rect x="818.29" y="580.90" width="2.35" height="10.10" fill="#000" rx="0"/><rect x="821.56" y="580.90" width="2.35" height="10.10" fill="#000" rx="0"/><rect x="824.82" y="580.90" width="2.35" height="10.10" fill="#000" rx="0"/><rect x="828.09" y="580.90" width="2.35" height="10.10" fill="#000" rx="0"/><rect x="831.36" y="580.90" width="2.35" height="10.10" fill="#000" rx="0"/><rect x="834.62" y="580.90" width="2.35" height="10.10" fill="#000" rx="0"/><rect x="837.89" y="580.90" width="2.35" height="10.10" fill="#000" rx="0"/><rect x="801.96" y="608.10" width="2.35" height="10.10" fill="#000" rx="0"/><rect x="805.22" y="608.10" width="2.35" height="10.10" fill="#000" rx="0"/><rect x="808.49" y="608.10" width="2.35" height="10.10" fill="#000" rx="0"/><rect x="811.76" y="608.10" width="2.35" height="10.10" fill="#000" rx="0"/><rect x="815.02" y="608.10" width="2.35" height="10.10" fill="#000" rx="0"/><rect x="818.29" y="608.10" width="2.35" height="10.10" fill="#000" rx="0"/><rect x="821.56" y="608.10" width="2.35" height="10.10" fill="#000" rx="0"/><rect x="824.82" y="608.10" width="2.35" height="10.10" fill="#000" rx="0"/><rect x="828.09" y="608.10" width="2.35" height="10.10" fill="#000" rx="0"/><rect x="831.36" y="608.10" width="2.35" height="10.10" fill="#000" rx="0"/><rect x="834.62" y="608.10" width="2.35" height="10.10" fill="#000" rx="0"/><rect x="837.89" y="608.10" width="2.35" height="10.10" fill="#000" rx="0"/><text x="815.50" y="576.20" font-size="9" fill="#2a2a2a" text-anchor="start">U8</text><rect x="855.50" y="579.50" width="43.00" height="39.00" fill="none" stroke="#4a4a4a" stroke-width="1"/><rect x="858.06" y="580.90" width="2.35" height="10.10" fill="#000" rx="0"/><rect x="861.32" y="580.90" width="2.35" height="10.10" fill="#000" rx="0"/><rect x="864.59" y="580.90" width="2.35" height="10.10" fill="#000" rx="0"/><rect x="867.86" y="580.90" width="2.35" height="10.10" fill="#000" rx="0"/><rect x="871.12" y="580.90" width="2.35" height="10.10" fill="#000" rx="0"/><rect x="874.39" y="580.90" width="2.35" height="10.10" fill="#000" rx="0"/><rect x="877.66" y="580.90" width="2.35" height="10.10" fill="#000" rx="0"/><rect x="880.92" y="580.90" width="2.35" height="10.10" fill="#000" rx="0"/><rect x="884.19" y="580.90" width="2.35" height="10.10" fill="#000" rx="0"/><rect x="887.46" y="580.90" width="2.35" height="10.10" fill="#000" rx="0"/><rect x="890.72" y="580.90" width="2.35" height="10.10" fill="#000" rx="0"/><rect x="893.99" y="580.90" width="2.35" height="10.10" fill="#000" rx="0"/><rect x="858.06" y="608.10" width="2.35" height="10.10" fill="#000" rx="0"/><rect x="861.32" y="608.10" width="2.35" height="10.10" fill="#000" rx="0"/><rect x="864.59" y="608.10" width="2.35" height="10.10" fill="#000" rx="0"/><rect x="867.86" y="608.10" width="2.35" height="10.10" fill="#000" rx="0"/><rect x="871.12" y="608.10" width="2.35" height="10.10" fill="#000" rx="0"/><rect x="874.39" y="608.10" width="2.35" height="10.10" fill="#000" rx="0"/><rect x="877.66" y="608.10" width="2.35" height="10.10" fill="#000" rx="0"/><rect x="880.92" y="608.10" width="2.35" height="10.10" fill="#000" rx="0"/><rect x="884.19" y="608.10" width="2.35" height="10.10" fill="#000" rx="0"/><rect x="887.46" y="608.10" width="2.35" height="10.10" fill="#000" rx="0"/><rect x="890.72" y="608.10" width="2.35" height="10.10" fill="#000" rx="0"/><rect x="893.99" y="608.10" width="2.35" height="10.10" fill="#000" rx="0"/><text x="871.20" y="576.20" font-size="9" fill="#2a2a2a" text-anchor="start">U9</text><rect x="911.50" y="579.50" width="43.00" height="39.00" fill="none" stroke="#4a4a4a" stroke-width="1"/><rect x="913.96" y="580.90" width="2.35" height="10.10" fill="#000" rx="0"/><rect x="917.22" y="580.90" width="2.35" height="10.10" fill="#000" rx="0"/><rect x="920.49" y="580.90" width="2.35" height="10.10" fill="#000" rx="0"/><rect x="923.76" y="580.90" width="2.35" height="10.10" fill="#000" rx="0"/><rect x="927.02" y="580.90" width="2.35" height="10.10" fill="#000" rx="0"/><rect x="930.29" y="580.90" width="2.35" height="10.10" fill="#000" rx="0"/><rect x="933.56" y="580.90" width="2.35" height="10.10" fill="#000" rx="0"/><rect x="936.82" y="580.90" width="2.35" height="10.10" fill="#000" rx="0"/><rect x="940.09" y="580.90" width="2.35" height="10.10" fill="#000" rx="0"/><rect x="943.36" y="580.90" width="2.35" height="10.10" fill="#000" rx="0"/><rect x="946.62" y="580.90" width="2.35" height="10.10" fill="#000" rx="0"/><rect x="949.89" y="580.90" width="2.35" height="10.10" fill="#000" rx="0"/><rect x="913.96" y="608.10" width="2.35" height="10.10" fill="#000" rx="0"/><rect x="917.22" y="608.10" width="2.35" height="10.10" fill="#000" rx="0"/><rect x="920.49" y="608.10" width="2.35" height="10.10" fill="#000" rx="0"/><rect x="923.76" y="608.10" width="2.35" height="10.10" fill="#000" rx="0"/><rect x="927.02" y="608.10" width="2.35" height="10.10" fill="#000" rx="0"/><rect x="930.29" y="608.10" width="2.35" height="10.10" fill="#000" rx="0"/><rect x="933.56" y="608.10" width="2.35" height="10.10" fill="#000" rx="0"/><rect x="936.82" y="608.10" width="2.35" height="10.10" fill="#000" rx="0"/><rect x="940.09" y="608.10" width="2.35" height="10.10" fill="#000" rx="0"/><rect x="943.36" y="608.10" width="2.35" height="10.10" fill="#000" rx="0"/><rect x="946.62" y="608.10" width="2.35" height="10.10" fill="#000" rx="0"/><rect x="949.89" y="608.10" width="2.35" height="10.10" fill="#000" rx="0"/><text x="924.50" y="576.20" font-size="9" fill="#2a2a2a" text-anchor="start">U11</text><text x="788.30" y="575.00" font-size="5.6" fill="#7a8aa0" text-anchor="start">C16</text><rect x="788.50" y="577.50" width="9.00" height="16.00" fill="none" stroke="#4a4a4a" stroke-width="1"/><rect x="790.00" y="579.00" width="6.00" height="5.40" fill="#000" rx="0"/><rect x="790.00" y="586.60" width="6.00" height="5.40" fill="#000" rx="0"/><text x="788.30" y="601.00" font-size="5.6" fill="#7a8aa0" text-anchor="start">C30</text><rect x="788.50" y="603.50" width="9.00" height="15.00" fill="none" stroke="#4a4a4a" stroke-width="1"/><rect x="790.00" y="605.00" width="6.00" height="5.25" fill="#000" rx="0"/><rect x="790.00" y="612.45" width="6.00" height="5.25" fill="#000" rx="0"/><text x="844.00" y="575.00" font-size="5.6" fill="#7a8aa0" text-anchor="start">C17</text><rect x="844.50" y="577.50" width="8.00" height="16.00" fill="none" stroke="#4a4a4a" stroke-width="1"/><rect x="845.70" y="579.00" width="6.00" height="5.40" fill="#000" rx="0"/><rect x="845.70" y="586.60" width="6.00" height="5.40" fill="#000" rx="0"/><text x="844.00" y="601.00" font-size="5.6" fill="#7a8aa0" text-anchor="start">C31</text><rect x="844.50" y="603.50" width="8.00" height="15.00" fill="none" stroke="#4a4a4a" stroke-width="1"/><rect x="845.70" y="605.00" width="6.00" height="5.25" fill="#000" rx="0"/><rect x="845.70" y="612.45" width="6.00" height="5.25" fill="#000" rx="0"/><text x="899.70" y="575.00" font-size="5.6" fill="#7a8aa0" text-anchor="start">C18</text><rect x="900.50" y="577.50" width="8.00" height="16.00" fill="none" stroke="#4a4a4a" stroke-width="1"/><rect x="901.40" y="579.00" width="6.00" height="5.40" fill="#000" rx="0"/><rect x="901.40" y="586.60" width="6.00" height="5.40" fill="#000" rx="0"/><text x="899.70" y="601.00" font-size="5.6" fill="#7a8aa0" text-anchor="start">C32</text><rect x="900.50" y="603.50" width="8.00" height="15.00" fill="none" stroke="#4a4a4a" stroke-width="1"/><rect x="901.40" y="605.00" width="6.00" height="5.25" fill="#000" rx="0"/><rect x="901.40" y="612.45" width="6.00" height="5.25" fill="#000" rx="0"/><text x="955.80" y="575.00" font-size="5.6" fill="#7a8aa0" text-anchor="start">C19</text><rect x="956.50" y="577.50" width="8.00" height="16.00" fill="none" stroke="#4a4a4a" stroke-width="1"/><rect x="957.50" y="579.00" width="6.00" height="5.40" fill="#000" rx="0"/><rect x="957.50" y="586.60" width="6.00" height="5.40" fill="#000" rx="0"/><text x="955.80" y="601.00" font-size="5.6" fill="#7a8aa0" text-anchor="start">C33</text><rect x="956.50" y="603.50" width="8.00" height="15.00" fill="none" stroke="#4a4a4a" stroke-width="1"/><rect x="957.50" y="605.00" width="6.00" height="5.25" fill="#000" rx="0"/><rect x="957.50" y="612.45" width="6.00" height="5.25" fill="#000" rx="0"/><text x="972.00" y="476.50" font-size="9" fill="#2a2a2a" text-anchor="start">C56</text><rect x="972.50" y="479.50" width="16.00" height="9.00" fill="none" stroke="#4a4a4a" stroke-width="1"/><rect x="973.70" y="480.90" width="5.45" height="6.00" fill="#000" rx="0"/><rect x="981.55" y="480.90" width="5.45" height="6.00" fill="#000" rx="0"/><rect x="959.50" y="490.50" width="42.00" height="26.00" fill="none" stroke="#4a4a4a" stroke-width="1"/><rect x="960.3" y="492.0" width="14.7" height="3.8" rx="1.9" fill="#000"/><rect x="986.2" y="492.0" width="14.5" height="3.8" rx="1.9" fill="#000"/><rect x="960.3" y="498.6" width="14.7" height="3.8" rx="1.9" fill="#000"/><rect x="986.2" y="498.6" width="14.5" height="3.8" rx="1.9" fill="#000"/><rect x="960.3" y="505.20000000000005" width="14.7" height="3.8" rx="1.9" fill="#000"/><rect x="986.2" y="505.20000000000005" width="14.5" height="3.8" rx="1.9" fill="#000"/><rect x="960.3" y="511.80000000000007" width="14.7" height="3.8" rx="1.9" fill="#000"/><rect x="986.2" y="511.80000000000007" width="14.5" height="3.8" rx="1.9" fill="#000"/><text x="972.00" y="526.50" font-size="9" fill="#2a2a2a" text-anchor="start">U23</text><circle cx="1016.10" cy="515.00" r="8.00" fill="#000"/><text x="1030.70" y="471.50" font-size="9" fill="#2a2a2a" text-anchor="start">J8</text><rect x="1019.50" y="474.50" width="32.00" height="18.00" fill="none" stroke="#4a4a4a" stroke-width="1"/><rect x="1025.53" y="475.50" width="1.67" height="4.30" fill="#000" rx="0"/><rect x="1027.85" y="475.50" width="1.67" height="4.30" fill="#000" rx="0"/><rect x="1030.17" y="475.50" width="1.67" height="4.30" fill="#000" rx="0"/><rect x="1032.49" y="475.50" width="1.67" height="4.30" fill="#000" rx="0"/><rect x="1034.81" y="475.50" width="1.67" height="4.30" fill="#000" rx="0"/><rect x="1037.14" y="475.50" width="1.67" height="4.30" fill="#000" rx="0"/><rect x="1039.46" y="475.50" width="1.67" height="4.30" fill="#000" rx="0"/><rect x="1041.78" y="475.50" width="1.67" height="4.30" fill="#000" rx="0"/><rect x="1044.10" y="475.50" width="1.67" height="4.30" fill="#000" rx="0"/><rect x="1019.70" y="488.00" width="3.00" height="4.30" fill="#000" rx="0"/><rect x="1049.00" y="488.00" width="3.00" height="4.30" fill="#000" rx="0"/><circle cx="1060.60" cy="489.50" r="5.50" fill="#000"/><circle cx="1069.40" cy="506.00" r="8.00" fill="#000"/><circle cx="1135.20" cy="506.00" r="8.00" fill="#000"/><circle cx="1144.50" cy="489.60" r="5.40" fill="#000"/><text x="1005.00" y="527.00" font-size="5.6" fill="#7a8aa0" text-anchor="start">R30</text><rect x="1005.50" y="529.50" width="9.00" height="15.00" fill="none" stroke="#4a4a4a" stroke-width="1"/><rect x="1007.10" y="530.50" width="6.00" height="5.25" fill="#000" rx="0"/><rect x="1007.10" y="537.95" width="6.00" height="5.25" fill="#000" rx="0"/><text x="1018.50" y="527.00" font-size="5.6" fill="#7a8aa0" text-anchor="start">R19R18R17R16</text><rect x="1019.50" y="529.50" width="8.00" height="15.00" fill="none" stroke="#4a4a4a" stroke-width="1"/><rect x="1020.30" y="530.50" width="6.35" height="5.25" fill="#000" rx="0"/><rect x="1020.30" y="537.95" width="6.35" height="5.25" fill="#000" rx="0"/><rect x="1019.50" y="545.50" width="8.00" height="14.00" fill="none" stroke="#4a4a4a" stroke-width="1"/><rect x="1020.30" y="546.40" width="6.35" height="5.10" fill="#000" rx="0"/><rect x="1020.30" y="553.70" width="6.35" height="5.10" fill="#000" rx="0"/><rect x="1028.50" y="529.50" width="9.00" height="15.00" fill="none" stroke="#4a4a4a" stroke-width="1"/><rect x="1030.05" y="530.50" width="6.35" height="5.25" fill="#000" rx="0"/><rect x="1030.05" y="537.95" width="6.35" height="5.25" fill="#000" rx="0"/><rect x="1028.50" y="545.50" width="9.00" height="14.00" fill="none" stroke="#4a4a4a" stroke-width="1"/><rect x="1030.05" y="546.40" width="6.35" height="5.10" fill="#000" rx="0"/><rect x="1030.05" y="553.70" width="6.35" height="5.10" fill="#000" rx="0"/><rect x="1038.50" y="529.50" width="9.00" height="15.00" fill="none" stroke="#4a4a4a" stroke-width="1"/><rect x="1039.80" y="530.50" width="6.35" height="5.25" fill="#000" rx="0"/><rect x="1039.80" y="537.95" width="6.35" height="5.25" fill="#000" rx="0"/><rect x="1038.50" y="545.50" width="9.00" height="14.00" fill="none" stroke="#4a4a4a" stroke-width="1"/><rect x="1039.80" y="546.40" width="6.35" height="5.10" fill="#000" rx="0"/><rect x="1039.80" y="553.70" width="6.35" height="5.10" fill="#000" rx="0"/><rect x="1048.50" y="529.50" width="9.00" height="15.00" fill="none" stroke="#4a4a4a" stroke-width="1"/><rect x="1049.55" y="530.50" width="6.35" height="5.25" fill="#000" rx="0"/><rect x="1049.55" y="537.95" width="6.35" height="5.25" fill="#000" rx="0"/><rect x="1048.50" y="545.50" width="9.00" height="14.00" fill="none" stroke="#4a4a4a" stroke-width="1"/><rect x="1049.55" y="546.40" width="6.35" height="5.10" fill="#000" rx="0"/><rect x="1049.55" y="553.70" width="6.35" height="5.10" fill="#000" rx="0"/><text x="1018.50" y="565.50" font-size="5.6" fill="#7a8aa0" text-anchor="start">C23C22C21</text><text transform="translate(1066.50,561.00) rotate(-90)" font-size="9" fill="#2a2a2a">C20</text><text x="1002.50" y="559.00" font-size="9" fill="#2a2a2a" text-anchor="start">C53</text><rect x="1002.50" y="561.50" width="15.00" height="9.00" fill="none" stroke="#4a4a4a" stroke-width="1"/><rect x="1004.00" y="563.10" width="5.20" height="5.80" fill="#000" rx="0"/><rect x="1011.60" y="563.10" width="5.20" height="5.80" fill="#000" rx="0"/><text x="981.00" y="584.00" font-size="9" fill="#2a2a2a" text-anchor="start">U22</text><rect x="998.50" y="568.50" width="19.00" height="26.00" fill="none" stroke="#4a4a4a" stroke-width="1"/><rect x="1001.00" y="573.20" width="14.50" height="5.30" fill="#000" rx="0"/><rect x="1001.00" y="586.20" width="14.50" height="5.30" fill="#000" rx="0"/><rect x="1005.50" y="573.20" width="0.70" height="5.30" fill="#fff" rx="0"/><rect x="1005.50" y="586.20" width="0.70" height="5.30" fill="#fff" rx="0"/><rect x="1010.50" y="573.20" width="0.70" height="5.30" fill="#fff" rx="0"/><rect x="1010.50" y="586.20" width="0.70" height="5.30" fill="#fff" rx="0"/><rect x="1020.50" y="576.50" width="29.00" height="41.00" fill="none" stroke="#4a4a4a" stroke-width="1"/><rect x="1021.09" y="577.20" width="2.63" height="8.30" fill="#000" rx="0"/><rect x="1024.30" y="577.20" width="2.63" height="8.30" fill="#000" rx="0"/><rect x="1027.51" y="577.20" width="2.63" height="8.30" fill="#000" rx="0"/><rect x="1030.72" y="577.20" width="2.63" height="8.30" fill="#000" rx="0"/><rect x="1033.93" y="577.20" width="2.63" height="8.30" fill="#000" rx="0"/><rect x="1037.14" y="577.20" width="2.63" height="8.30" fill="#000" rx="0"/><rect x="1040.36" y="577.20" width="2.63" height="8.30" fill="#000" rx="0"/><rect x="1043.57" y="577.20" width="2.63" height="8.30" fill="#000" rx="0"/><rect x="1046.78" y="577.20" width="2.63" height="8.30" fill="#000" rx="0"/><rect x="1021.09" y="607.00" width="2.63" height="10.00" fill="#000" rx="0"/><rect x="1024.30" y="607.00" width="2.63" height="10.00" fill="#000" rx="0"/><rect x="1027.51" y="607.00" width="2.63" height="10.00" fill="#000" rx="0"/><rect x="1030.72" y="607.00" width="2.63" height="10.00" fill="#000" rx="0"/><rect x="1033.93" y="607.00" width="2.63" height="10.00" fill="#000" rx="0"/><rect x="1037.14" y="607.00" width="2.63" height="10.00" fill="#000" rx="0"/><rect x="1040.36" y="607.00" width="2.63" height="10.00" fill="#000" rx="0"/><rect x="1043.57" y="607.00" width="2.63" height="10.00" fill="#000" rx="0"/><rect x="1046.78" y="607.00" width="2.63" height="10.00" fill="#000" rx="0"/><text x="1029.60" y="599.80" font-size="9" fill="#2a2a2a" text-anchor="start">U7</text><text transform="translate(1060.50,582.00) rotate(-90)" font-size="9" fill="#2a2a2a">TP1</text><rect x="1050.50" y="582.50" width="12.00" height="26.00" fill="none" stroke="#4a4a4a" stroke-width="1"/><rect x="1050.70" y="583.40" width="11.00" height="24.30" fill="#000" rx="0"/><rect x="1051.20" y="584.00" width="10.00" height="2.00" fill="#fff" rx="0"/><rect x="1051.20" y="605.10" width="10.00" height="2.00" fill="#fff" rx="0"/><text x="986.50" y="612.50" font-size="9" fill="#2a2a2a" text-anchor="start">J14</text><rect x="1003.50" y="598.50" width="14.00" height="27.00" fill="none" stroke="#4a4a4a" stroke-width="1"/><circle cx="1010.30" cy="605.50" r="4.30" fill="#000"/><rect x="1006.00" y="614.50" width="9.00" height="8.50" fill="#000" rx="0"/><text x="1023.00" y="627.50" font-size="9" fill="#2a2a2a" text-anchor="start">C35</text><rect x="1038.50" y="620.50" width="16.00" height="9.00" fill="none" stroke="#4a4a4a" stroke-width="1"/><rect x="1039.50" y="622.00" width="5.65" height="6.00" fill="#000" rx="0"/><rect x="1047.55" y="622.00" width="5.65" height="6.00" fill="#000" rx="0"/><circle cx="1073.40" cy="548.10" r="3.80" fill="#000"/><circle cx="1131.10" cy="548.10" r="3.80" fill="#000"/><text x="1093.00" y="540.10" font-size="9" fill="#2a2a2a" text-anchor="start">R33</text><rect x="1093.50" y="543.50" width="15.00" height="8.00" fill="none" stroke="#4a4a4a" stroke-width="1"/><rect x="1094.50" y="544.80" width="5.45" height="6.00" fill="#000" rx="0"/><rect x="1102.35" y="544.80" width="5.45" height="6.00" fill="#000" rx="0"/><text x="1072.20" y="564.90" font-size="9" fill="#2a2a2a" text-anchor="start">R32</text><rect x="1072.50" y="568.50" width="16.00" height="9.00" fill="none" stroke="#4a4a4a" stroke-width="1"/><rect x="1073.80" y="569.20" width="5.45" height="6.80" fill="#000" rx="0"/><rect x="1081.65" y="569.20" width="5.45" height="6.80" fill="#000" rx="0"/><circle cx="1076.10" cy="585.00" r="3.80" fill="#000"/><circle cx="1086.40" cy="585.00" r="3.80" fill="#000"/><text x="1073.00" y="592.00" font-size="9" fill="#2a2a2a" text-anchor="start">R3</text><rect x="1070.50" y="596.50" width="16.00" height="8.00" fill="none" stroke="#4a4a4a" stroke-width="1"/><rect x="1072.00" y="597.40" width="5.35" height="6.00" fill="#000" rx="0"/><rect x="1079.75" y="597.40" width="5.35" height="6.00" fill="#000" rx="0"/><circle cx="1070.80" cy="611.30" r="3.80" fill="#000"/><circle cx="1083.80" cy="611.30" r="3.80" fill="#000"/><circle cx="1118.00" cy="584.80" r="3.80" fill="#000"/><circle cx="1128.40" cy="584.80" r="3.80" fill="#000"/><circle cx="1113.00" cy="598.00" r="3.80" fill="#000"/><circle cx="1123.30" cy="598.00" r="3.80" fill="#000"/><circle cx="1133.70" cy="598.00" r="3.80" fill="#000"/><circle cx="1120.70" cy="611.30" r="3.80" fill="#000"/><circle cx="1133.70" cy="611.30" r="3.80" fill="#000"/><text x="1127.50" y="594.50" font-size="9" fill="#2a2a2a" text-anchor="start">R1</text><text transform="translate(1135.00,622.00) rotate(-90)" font-size="9" fill="#2a2a2a">TP32</text><text x="1141.00" y="565.00" font-size="5.6" fill="#7a8aa0" text-anchor="start">C1</text><rect x="1141.50" y="568.50" width="8.00" height="15.00" fill="none" stroke="#4a4a4a" stroke-width="1"/><rect x="1142.30" y="569.10" width="5.50" height="5.41" fill="#000" rx="0"/><rect x="1142.30" y="576.72" width="5.50" height="5.41" fill="#000" rx="0"/><rect x="1141.50" y="584.50" width="8.00" height="15.00" fill="none" stroke="#4a4a4a" stroke-width="1"/><rect x="1142.30" y="585.33" width="5.50" height="5.41" fill="#000" rx="0"/><rect x="1142.30" y="592.95" width="5.50" height="5.41" fill="#000" rx="0"/><rect x="1141.50" y="600.50" width="8.00" height="15.00" fill="none" stroke="#4a4a4a" stroke-width="1"/><rect x="1142.30" y="601.56" width="5.50" height="5.41" fill="#000" rx="0"/><rect x="1142.30" y="609.18" width="5.50" height="5.41" fill="#000" rx="0"/><text x="1150.60" y="611.50" font-size="9" fill="#2a2a2a" text-anchor="start">R2</text><text x="1170.00" y="477.70" font-size="9" fill="#2a2a2a" text-anchor="start">TP30</text><rect x="1168.50" y="480.50" width="26.00" height="13.00" fill="none" stroke="#4a4a4a" stroke-width="1"/><rect x="1169.10" y="481.30" width="24.50" height="11.40" fill="#000" rx="0"/><rect x="1169.70" y="481.80" width="2.00" height="10.40" fill="#fff" rx="0"/><rect x="1191.00" y="481.80" width="2.00" height="10.40" fill="#fff" rx="0"/><circle cx="1174.90" cy="513.50" r="5.80" fill="#000"/><circle cx="1199.40" cy="513.50" r="5.80" fill="#000"/><circle cx="1224.00" cy="513.50" r="5.80" fill="#000"/><circle cx="1276.00" cy="478.00" r="5.80" fill="#000"/><circle cx="1276.00" cy="506.50" r="5.80" fill="#000"/><text x="1173.00" y="521.50" font-size="9" fill="#2a2a2a" text-anchor="start">C2</text><rect x="1168.50" y="524.50" width="22.00" height="10.00" fill="none" stroke="#4a4a4a" stroke-width="1"/><rect x="1169.70" y="526.20" width="8.45" height="7.50" fill="#000" rx="0"/><rect x="1180.55" y="526.20" width="8.45" height="7.50" fill="#000" rx="0"/><text x="1172.00" y="555.00" font-size="5.6" fill="#7a8aa0" text-anchor="start">C25</text><rect x="1172.50" y="557.50" width="11.00" height="22.00" fill="none" stroke="#4a4a4a" stroke-width="1"/><rect x="1173.90" y="558.70" width="7.90" height="8.55" fill="#000" rx="0"/><rect x="1173.90" y="569.45" width="7.90" height="8.55" fill="#000" rx="0"/><text x="1187.30" y="552.20" font-size="9" fill="#2a2a2a" text-anchor="start">U10</text><rect x="1186.50" y="555.50" width="19.00" height="26.00" fill="none" stroke="#4a4a4a" stroke-width="1"/><rect x="1189.00" y="560.00" width="3.50" height="6.00" fill="#000" rx="0"/><rect x="1189.00" y="573.00" width="3.50" height="6.00" fill="#000" rx="0"/><rect x="1194.40" y="560.00" width="3.50" height="6.00" fill="#000" rx="0"/><rect x="1194.40" y="573.00" width="3.50" height="6.00" fill="#000" rx="0"/><rect x="1199.40" y="560.00" width="3.50" height="6.00" fill="#000" rx="0"/><rect x="1199.40" y="573.00" width="3.50" height="6.00" fill="#000" rx="0"/><text x="1208.50" y="558.00" font-size="5.6" fill="#7a8aa0" text-anchor="start">C24</text><rect x="1209.50" y="560.50" width="10.00" height="21.00" fill="none" stroke="#4a4a4a" stroke-width="1"/><rect x="1210.30" y="562.00" width="7.60" height="8.35" fill="#000" rx="0"/><rect x="1210.30" y="572.55" width="7.60" height="8.35" fill="#000" rx="0"/><text x="1230.00" y="554.60" font-size="9" fill="#2a2a2a" text-anchor="start">L1</text><rect x="1222.50" y="557.50" width="26.00" height="26.00" fill="none" stroke="#4a4a4a" stroke-width="1"/><rect x="1230.00" y="561.00" width="8.00" height="4.50" fill="#000" rx="0"/><rect x="1230.00" y="577.00" width="8.00" height="4.00" fill="#000" rx="0"/><text x="1165.00" y="592.00" font-size="9" fill="#2a2a2a" text-anchor="start">R22</text><rect x="1180.50" y="584.50" width="15.00" height="9.00" fill="none" stroke="#4a4a4a" stroke-width="1"/><rect x="1181.80" y="586.00" width="5.35" height="6.10" fill="#000" rx="0"/><rect x="1189.55" y="586.00" width="5.35" height="6.10" fill="#000" rx="0"/><rect x="1196.50" y="584.50" width="15.00" height="9.00" fill="none" stroke="#4a4a4a" stroke-width="1"/><rect x="1198.10" y="586.00" width="5.15" height="6.10" fill="#000" rx="0"/><rect x="1205.65" y="586.00" width="5.15" height="6.10" fill="#000" rx="0"/><text x="1197.00" y="602.00" font-size="9" fill="#2a2a2a" text-anchor="start">R23</text><circle cx="1191.40" cy="612.10" r="4.30" fill="#000"/><circle cx="1204.40" cy="612.10" r="4.30" fill="#000"/><circle cx="1217.40" cy="612.10" r="4.30" fill="#000"/><circle cx="1230.50" cy="612.10" r="4.30" fill="#000"/><circle cx="1243.60" cy="612.10" r="4.30" fill="#000"/><circle cx="1191.40" cy="625.10" r="4.30" fill="#000"/><circle cx="1204.40" cy="625.10" r="4.30" fill="#000"/><circle cx="1217.40" cy="625.10" r="4.30" fill="#000"/><circle cx="1230.50" cy="625.10" r="4.30" fill="#000"/><circle cx="1243.60" cy="625.10" r="4.30" fill="#000"/><text x="1278.00" y="558.00" font-size="9" fill="#2a2a2a" text-anchor="start">R5</text><rect x="1275.50" y="562.50" width="16.00" height="8.00" fill="none" stroke="#4a4a4a" stroke-width="1"/><rect x="1277.00" y="563.20" width="5.35" height="6.30" fill="#000" rx="0"/><rect x="1284.75" y="563.20" width="5.35" height="6.30" fill="#000" rx="0"/><rect x="1275.50" y="571.50" width="16.00" height="9.00" fill="none" stroke="#4a4a4a" stroke-width="1"/><rect x="1277.00" y="572.90" width="5.35" height="6.40" fill="#000" rx="0"/><rect x="1284.75" y="572.90" width="5.35" height="6.40" fill="#000" rx="0"/><rect x="1275.50" y="581.50" width="16.00" height="8.00" fill="none" stroke="#4a4a4a" stroke-width="1"/><rect x="1277.00" y="582.70" width="5.35" height="6.10" fill="#000" rx="0"/><rect x="1284.75" y="582.70" width="5.35" height="6.10" fill="#000" rx="0"/><text x="1265.00" y="577.50" font-size="9" fill="#2a2a2a" text-anchor="start">R6</text><text x="1265.00" y="587.50" font-size="9" fill="#2a2a2a" text-anchor="start">R7</text><text x="1298.00" y="551.60" font-size="9" fill="#2a2a2a" text-anchor="start">C3</text><rect x="1296.50" y="555.50" width="15.00" height="8.00" fill="none" stroke="#4a4a4a" stroke-width="1"/><rect x="1297.10" y="556.30" width="5.30" height="6.00" fill="#000" rx="0"/><rect x="1304.80" y="556.30" width="5.30" height="6.00" fill="#000" rx="0"/><rect x="1295.50" y="565.50" width="19.00" height="26.00" fill="none" stroke="#4a4a4a" stroke-width="1"/><rect x="1298.00" y="569.00" width="4.00" height="6.00" fill="#000" rx="0"/><rect x="1307.00" y="569.00" width="4.00" height="6.00" fill="#000" rx="0"/><rect x="1298.00" y="583.00" width="13.50" height="6.00" fill="#000" rx="0"/><rect x="1302.20" y="583.00" width="0.80" height="6.00" fill="#fff" rx="0"/><rect x="1306.80" y="583.00" width="0.80" height="6.00" fill="#fff" rx="0"/><text x="1315.00" y="581.90" font-size="9" fill="#2a2a2a" text-anchor="start">U1</text><text x="1331.00" y="581.90" font-size="9" fill="#2a2a2a" text-anchor="start">R10</text><text x="1345.50" y="541.00" font-size="5.6" fill="#7a8aa0" text-anchor="start">TP19</text><rect x="1345.50" y="543.50" width="13.00" height="25.00" fill="none" stroke="#4a4a4a" stroke-width="1"/><rect x="1346.30" y="544.00" width="12.00" height="24.30" fill="#000" rx="0"/><rect x="1346.80" y="544.60" width="11.00" height="2.00" fill="#fff" rx="0"/><rect x="1346.80" y="565.70" width="11.00" height="2.00" fill="#fff" rx="0"/><rect x="1348.50" y="571.50" width="9.00" height="15.00" fill="none" stroke="#4a4a4a" stroke-width="1"/><rect x="1349.20" y="572.80" width="6.60" height="5.40" fill="#000" rx="0"/><rect x="1349.20" y="580.40" width="6.60" height="5.40" fill="#000" rx="0"/><text x="1368.00" y="554.60" font-size="9" fill="#2a2a2a" text-anchor="start">C11</text><rect x="1368.50" y="558.50" width="15.00" height="8.00" fill="none" stroke="#4a4a4a" stroke-width="1"/><rect x="1369.20" y="559.80" width="5.35" height="5.50" fill="#000" rx="0"/><rect x="1376.95" y="559.80" width="5.35" height="5.50" fill="#000" rx="0"/><rect x="1363.50" y="568.50" width="20.00" height="23.00" fill="none" stroke="#4a4a4a" stroke-width="1"/><rect x="1365.00" y="571.00" width="6.50" height="7.50" fill="#000" rx="0"/><rect x="1374.00" y="571.00" width="7.00" height="7.50" fill="#000" rx="0"/><rect x="1365.00" y="582.00" width="6.50" height="8.00" fill="#000" rx="0"/><rect x="1374.00" y="582.00" width="7.00" height="8.00" fill="#000" rx="0"/><text x="1367.50" y="477.70" font-size="9" fill="#2a2a2a" text-anchor="start">MH3</text><rect x="1367.50" y="481.50" width="18.00" height="18.00" fill="none" stroke="#555" stroke-width="1"/><circle cx="1376.60" cy="490.15" r="9.00" fill="#000"/><text x="1371.00" y="507.00" font-size="5.6" fill="#7a8aa0" text-anchor="start">FM1</text><rect x="1372.50" y="510.50" width="7.00" height="7.00" fill="none" stroke="#aaa" stroke-width="1"/><rect x="1375.00" y="510.30" width="1.00" height="6.40" fill="#111" rx="0"/><rect x="1372.30" y="513.00" width="6.40" height="1.00" fill="#111" rx="0"/><text x="1279.00" y="601.00" font-size="9" fill="#2a2a2a" text-anchor="start">C5</text><rect x="1291.50" y="593.50" width="21.00" height="10.00" fill="none" stroke="#4a4a4a" stroke-width="1"/><rect x="1292.60" y="594.80" width="8.10" height="7.80" fill="#000" rx="0"/><rect x="1303.10" y="594.80" width="8.10" height="7.80" fill="#000" rx="0"/><text x="1320.00" y="607.30" font-size="9" fill="#2a2a2a" text-anchor="start">U2</text><rect x="1308.50" y="610.50" width="34.00" height="33.00" fill="none" stroke="#4a4a4a" stroke-width="1"/><rect x="1314.39" y="612.50" width="2.03" height="6.00" fill="#000" rx="0"/><rect x="1317.21" y="612.50" width="2.03" height="6.00" fill="#000" rx="0"/><rect x="1320.02" y="612.50" width="2.03" height="6.00" fill="#000" rx="0"/><rect x="1322.83" y="612.50" width="2.03" height="6.00" fill="#000" rx="0"/><rect x="1325.64" y="612.50" width="2.03" height="6.00" fill="#000" rx="0"/><rect x="1328.46" y="612.50" width="2.03" height="6.00" fill="#000" rx="0"/><rect x="1331.27" y="612.50" width="2.03" height="6.00" fill="#000" rx="0"/><rect x="1334.08" y="612.50" width="2.03" height="6.00" fill="#000" rx="0"/><rect x="1314.39" y="636.00" width="2.03" height="6.00" fill="#000" rx="0"/><rect x="1317.21" y="636.00" width="2.03" height="6.00" fill="#000" rx="0"/><rect x="1320.02" y="636.00" width="2.03" height="6.00" fill="#000" rx="0"/><rect x="1322.83" y="636.00" width="2.03" height="6.00" fill="#000" rx="0"/><rect x="1325.64" y="636.00" width="2.03" height="6.00" fill="#000" rx="0"/><rect x="1328.46" y="636.00" width="2.03" height="6.00" fill="#000" rx="0"/><rect x="1331.27" y="636.00" width="2.03" height="6.00" fill="#000" rx="0"/><rect x="1334.08" y="636.00" width="2.03" height="6.00" fill="#000" rx="0"/><g fill="#000"><rect x="1310.5" y="619.0" width="5.5" height="1.8" rx="0.9"/><rect x="1334.5" y="619.0" width="5.5" height="1.8" rx="0.9"/><rect x="1310.5" y="621.6" width="5.5" height="1.8" rx="0.9"/><rect x="1334.5" y="621.6" width="5.5" height="1.8" rx="0.9"/><rect x="1310.5" y="624.2" width="5.5" height="1.8" rx="0.9"/><rect x="1334.5" y="624.2" width="5.5" height="1.8" rx="0.9"/><rect x="1310.5" y="626.8" width="5.5" height="1.8" rx="0.9"/><rect x="1334.5" y="626.8" width="5.5" height="1.8" rx="0.9"/><rect x="1310.5" y="629.4" width="5.5" height="1.8" rx="0.9"/><rect x="1334.5" y="629.4" width="5.5" height="1.8" rx="0.9"/><rect x="1310.5" y="632.0" width="5.5" height="1.8" rx="0.9"/><rect x="1334.5" y="632.0" width="5.5" height="1.8" rx="0.9"/><rect x="1310.5" y="634.6" width="5.5" height="1.8" rx="0.9"/><rect x="1334.5" y="634.6" width="5.5" height="1.8" rx="0.9"/></g><circle cx="1325.60" cy="627.60" r="3.00" fill="#000"/><text x="1345.00" y="617.30" font-size="9" fill="#2a2a2a" text-anchor="start">R11</text><rect x="1344.50" y="620.50" width="16.00" height="9.00" fill="none" stroke="#4a4a4a" stroke-width="1"/><rect x="1346.10" y="622.00" width="5.30" height="6.00" fill="#000" rx="0"/><rect x="1353.80" y="622.00" width="5.30" height="6.00" fill="#000" rx="0"/><rect x="1344.50" y="630.50" width="16.00" height="8.00" fill="none" stroke="#4a4a4a" stroke-width="1"/><rect x="1346.10" y="631.40" width="5.30" height="6.20" fill="#000" rx="0"/><rect x="1353.80" y="631.40" width="5.30" height="6.20" fill="#000" rx="0"/><text x="1345.00" y="648.00" font-size="9" fill="#2a2a2a" text-anchor="start">C10</text><text x="1367.00" y="600.80" font-size="9" fill="#2a2a2a" text-anchor="start">U3</text><rect x="1364.50" y="605.50" width="19.00" height="26.00" fill="none" stroke="#4a4a4a" stroke-width="1"/><rect x="1367.00" y="609.00" width="4.00" height="6.00" fill="#000" rx="0"/><rect x="1367.00" y="622.00" width="4.00" height="6.00" fill="#000" rx="0"/><rect x="1372.00" y="609.00" width="4.00" height="6.00" fill="#000" rx="0"/><rect x="1372.00" y="622.00" width="4.00" height="6.00" fill="#000" rx="0"/><rect x="1377.00" y="609.00" width="4.00" height="6.00" fill="#000" rx="0"/><rect x="1377.00" y="622.00" width="4.00" height="6.00" fill="#000" rx="0"/><text x="1384.50" y="621.50" font-size="9" fill="#2a2a2a" text-anchor="start">U4</text><rect x="1364.50" y="633.50" width="16.00" height="8.00" fill="none" stroke="#4a4a4a" stroke-width="1"/><rect x="1365.90" y="635.00" width="5.35" height="5.50" fill="#000" rx="0"/><rect x="1373.65" y="635.00" width="5.35" height="5.50" fill="#000" rx="0"/><text x="1364.00" y="650.40" font-size="9" fill="#2a2a2a" text-anchor="start">C13</text><text x="1275.00" y="620.00" font-size="9" fill="#2a2a2a" text-anchor="start">R4</text><rect x="1289.50" y="614.50" width="15.00" height="8.00" fill="none" stroke="#4a4a4a" stroke-width="1"/><rect x="1290.60" y="616.10" width="5.05" height="5.40" fill="#000" rx="0"/><rect x="1298.05" y="616.10" width="5.05" height="5.40" fill="#000" rx="0"/><rect x="1272.50" y="624.50" width="15.00" height="8.00" fill="none" stroke="#4a4a4a" stroke-width="1"/><rect x="1274.00" y="625.50" width="5.20" height="6.10" fill="#000" rx="0"/><rect x="1281.60" y="625.50" width="5.20" height="6.10" fill="#000" rx="0"/><rect x="1290.50" y="624.50" width="9.00" height="21.00" fill="none" stroke="#4a4a4a" stroke-width="1"/><rect x="1292.20" y="626.00" width="6.30" height="7.95" fill="#000" rx="0"/><rect x="1292.20" y="636.15" width="6.30" height="7.95" fill="#000" rx="0"/><text x="1292.00" y="640.00" font-size="5.6" fill="#9aa" text-anchor="start">R12</text><rect x="1289.50" y="647.50" width="15.00" height="8.00" fill="none" stroke="#4a4a4a" stroke-width="1"/><rect x="1290.60" y="648.60" width="5.05" height="6.00" fill="#000" rx="0"/><rect x="1298.05" y="648.60" width="5.05" height="6.00" fill="#000" rx="0"/><text x="1257.00" y="650.00" font-size="9" fill="#2a2a2a" text-anchor="start">TP9</text><rect x="1273.50" y="635.50" width="13.00" height="26.00" fill="none" stroke="#4a4a4a" stroke-width="1"/><rect x="1274.20" y="636.00" width="11.40" height="25.00" fill="#000" rx="0"/><rect x="1274.70" y="636.60" width="10.40" height="2.00" fill="#fff" rx="0"/><rect x="1274.70" y="658.40" width="10.40" height="2.00" fill="#fff" rx="0"/><text x="1311.00" y="651.00" font-size="5.6" fill="#7a8aa0" text-anchor="start">C14</text><rect x="1308.50" y="653.50" width="9.00" height="15.00" fill="none" stroke="#4a4a4a" stroke-width="1"/><rect x="1310.20" y="655.00" width="6.40" height="5.30" fill="#000" rx="0"/><rect x="1310.20" y="662.50" width="6.40" height="5.30" fill="#000" rx="0"/><rect x="1308.50" y="669.50" width="9.00" height="15.00" fill="none" stroke="#4a4a4a" stroke-width="1"/><rect x="1310.20" y="671.00" width="6.40" height="5.25" fill="#000" rx="0"/><rect x="1310.20" y="678.45" width="6.40" height="5.25" fill="#000" rx="0"/><rect x="1318.50" y="653.50" width="9.00" height="15.00" fill="none" stroke="#4a4a4a" stroke-width="1"/><rect x="1320.00" y="655.00" width="6.40" height="5.30" fill="#000" rx="0"/><rect x="1320.00" y="662.50" width="6.40" height="5.30" fill="#000" rx="0"/><rect x="1318.50" y="669.50" width="9.00" height="15.00" fill="none" stroke="#4a4a4a" stroke-width="1"/><rect x="1320.00" y="671.00" width="6.40" height="5.25" fill="#000" rx="0"/><rect x="1320.00" y="678.45" width="6.40" height="5.25" fill="#000" rx="0"/><rect x="1328.50" y="653.50" width="9.00" height="15.00" fill="none" stroke="#4a4a4a" stroke-width="1"/><rect x="1329.80" y="655.00" width="6.40" height="5.30" fill="#000" rx="0"/><rect x="1329.80" y="662.50" width="6.40" height="5.30" fill="#000" rx="0"/><rect x="1328.50" y="669.50" width="9.00" height="15.00" fill="none" stroke="#4a4a4a" stroke-width="1"/><rect x="1329.80" y="671.00" width="6.40" height="5.25" fill="#000" rx="0"/><rect x="1329.80" y="678.45" width="6.40" height="5.25" fill="#000" rx="0"/><rect x="1338.50" y="653.50" width="9.00" height="15.00" fill="none" stroke="#4a4a4a" stroke-width="1"/><rect x="1339.60" y="655.00" width="6.40" height="5.30" fill="#000" rx="0"/><rect x="1339.60" y="662.50" width="6.40" height="5.30" fill="#000" rx="0"/><rect x="1338.50" y="669.50" width="9.00" height="15.00" fill="none" stroke="#4a4a4a" stroke-width="1"/><rect x="1339.60" y="671.00" width="6.40" height="5.25" fill="#000" rx="0"/><rect x="1339.60" y="678.45" width="6.40" height="5.25" fill="#000" rx="0"/><text x="1257.00" y="670.00" font-size="9" fill="#2a2a2a" text-anchor="start">TP13</text><rect x="1280.50" y="662.50" width="25.00" height="12.00" fill="none" stroke="#4a4a4a" stroke-width="1"/><rect x="1281.10" y="662.70" width="24.20" height="11.00" fill="#000" rx="0"/><rect x="1281.70" y="663.20" width="2.00" height="10.00" fill="#fff" rx="0"/><rect x="1302.70" y="663.20" width="2.00" height="10.00" fill="#fff" rx="0"/><text x="1258.00" y="687.00" font-size="9" fill="#2a2a2a" text-anchor="start">TP12</text><rect x="1280.50" y="677.50" width="25.00" height="13.00" fill="none" stroke="#4a4a4a" stroke-width="1"/><rect x="1281.10" y="678.40" width="24.10" height="11.60" fill="#000" rx="0"/><rect x="1281.70" y="678.90" width="2.00" height="10.60" fill="#fff" rx="0"/><rect x="1302.60" y="678.90" width="2.00" height="10.60" fill="#fff" rx="0"/><text x="1358.50" y="671.10" font-size="9" fill="#2a2a2a" text-anchor="start">TP20</text><rect x="1356.50" y="674.50" width="25.00" height="13.00" fill="none" stroke="#4a4a4a" stroke-width="1"/><rect x="1356.70" y="675.40" width="24.60" height="11.60" fill="#000" rx="0"/><rect x="1357.30" y="675.90" width="2.00" height="10.60" fill="#fff" rx="0"/><rect x="1378.70" y="675.90" width="2.00" height="10.60" fill="#fff" rx="0"/><text x="1164.00" y="631.00" font-size="9" fill="#2a2a2a" text-anchor="start">C37</text><rect x="1148.50" y="623.50" width="14.00" height="9.00" fill="none" stroke="#4a4a4a" stroke-width="1"/><rect x="1149.30" y="625.00" width="5.00" height="6.10" fill="#000" rx="0"/><rect x="1156.70" y="625.00" width="5.00" height="6.10" fill="#000" rx="0"/><rect x="1119.50" y="621.50" width="26.00" height="13.00" fill="none" stroke="#4a4a4a" stroke-width="1"/><rect x="1119.80" y="622.30" width="24.90" height="11.60" fill="#000" rx="0"/><rect x="1120.40" y="622.80" width="2.00" height="10.60" fill="#fff" rx="0"/><rect x="1142.10" y="622.80" width="2.00" height="10.60" fill="#fff" rx="0"/><text x="1107.00" y="631.50" font-size="5.6" fill="#7a8aa0" text-anchor="start">R27</text><rect x="1108.50" y="633.50" width="8.00" height="16.00" fill="none" stroke="#4a4a4a" stroke-width="1"/><rect x="1109.20" y="634.60" width="6.10" height="5.80" fill="#000" rx="0"/><rect x="1109.20" y="642.60" width="6.10" height="5.80" fill="#000" rx="0"/><circle cx="1098.40" cy="648.20" r="3.80" fill="#000"/><circle cx="1127.90" cy="648.20" r="5.00" fill="#000"/><text x="1122.00" y="652.00" font-size="9" fill="#2a2a2a" text-anchor="start">J</text><rect x="1134.50" y="634.50" width="14.00" height="27.00" fill="none" stroke="#4a4a4a" stroke-width="1"/><circle cx="1141.70" cy="641.70" r="4.00" fill="#000"/><rect x="1138.00" y="650.00" width="8.00" height="9.00" fill="#000" rx="0"/><text x="1151.00" y="644.00" font-size="9" fill="#2a2a2a" text-anchor="start">C42</text><rect x="1150.50" y="647.50" width="16.00" height="8.00" fill="none" stroke="#4a4a4a" stroke-width="1"/><rect x="1152.00" y="648.70" width="5.30" height="6.00" fill="#000" rx="0"/><rect x="1159.70" y="648.70" width="5.30" height="6.00" fill="#000" rx="0"/><text x="1177.00" y="644.00" font-size="9" fill="#2a2a2a" text-anchor="start">C48</text><rect x="1177.50" y="647.50" width="15.00" height="8.00" fill="none" stroke="#4a4a4a" stroke-width="1"/><rect x="1178.90" y="648.70" width="5.05" height="6.00" fill="#000" rx="0"/><rect x="1186.35" y="648.70" width="5.05" height="6.00" fill="#000" rx="0"/><text x="1196.00" y="638.10" font-size="9" fill="#2a2a2a" text-anchor="start">C41</text><rect x="1196.50" y="640.50" width="15.00" height="8.00" fill="none" stroke="#4a4a4a" stroke-width="1"/><rect x="1197.20" y="642.20" width="5.35" height="5.40" fill="#000" rx="0"/><rect x="1204.95" y="642.20" width="5.35" height="5.40" fill="#000" rx="0"/><text transform="translate(1223.00,648.00) rotate(-90)" font-size="9" fill="#3a2a5a">U18</text><rect x="1203.50" y="649.50" width="30.00" height="41.00" fill="none" stroke="#4a4a4a" stroke-width="1"/><rect x="1204.29" y="650.00" width="2.67" height="10.00" fill="#000" rx="0"/><rect x="1207.55" y="650.00" width="2.67" height="10.00" fill="#000" rx="0"/><rect x="1210.80" y="650.00" width="2.67" height="10.00" fill="#000" rx="0"/><rect x="1214.06" y="650.00" width="2.67" height="10.00" fill="#000" rx="0"/><rect x="1217.32" y="650.00" width="2.67" height="10.00" fill="#000" rx="0"/><rect x="1220.57" y="650.00" width="2.67" height="10.00" fill="#000" rx="0"/><rect x="1223.83" y="650.00" width="2.67" height="10.00" fill="#000" rx="0"/><rect x="1227.08" y="650.00" width="2.67" height="10.00" fill="#000" rx="0"/><rect x="1230.34" y="650.00" width="2.67" height="10.00" fill="#000" rx="0"/><rect x="1204.29" y="681.50" width="2.67" height="8.50" fill="#000" rx="0"/><rect x="1207.55" y="681.50" width="2.67" height="8.50" fill="#000" rx="0"/><rect x="1210.80" y="681.50" width="2.67" height="8.50" fill="#000" rx="0"/><rect x="1214.06" y="681.50" width="2.67" height="8.50" fill="#000" rx="0"/><rect x="1217.32" y="681.50" width="2.67" height="8.50" fill="#000" rx="0"/><rect x="1220.57" y="681.50" width="2.67" height="8.50" fill="#000" rx="0"/><rect x="1223.83" y="681.50" width="2.67" height="8.50" fill="#000" rx="0"/><rect x="1227.08" y="681.50" width="2.67" height="8.50" fill="#000" rx="0"/><rect x="1230.34" y="681.50" width="2.67" height="8.50" fill="#000" rx="0"/><text x="1098.00" y="661.80" font-size="9" fill="#2a2a2a" text-anchor="start">TP28</text><rect x="1095.50" y="664.50" width="26.00" height="13.00" fill="none" stroke="#4a4a4a" stroke-width="1"/><rect x="1096.30" y="665.40" width="24.90" height="11.60" fill="#000" rx="0"/><rect x="1096.90" y="665.90" width="2.00" height="10.60" fill="#fff" rx="0"/><rect x="1118.60" y="665.90" width="2.00" height="10.60" fill="#fff" rx="0"/><text x="1136.00" y="672.20" font-size="9" fill="#2a2a2a" text-anchor="start">U19</text><rect x="1154.50" y="659.50" width="9.00" height="21.00" fill="none" stroke="#4a4a4a" stroke-width="1"/><rect x="1155.28" y="660.00" width="1.44" height="5.50" fill="#000" rx="0"/><rect x="1157.28" y="660.00" width="1.44" height="5.50" fill="#000" rx="0"/><rect x="1159.28" y="660.00" width="1.44" height="5.50" fill="#000" rx="0"/><rect x="1161.28" y="660.00" width="1.44" height="5.50" fill="#000" rx="0"/><rect x="1155.28" y="675.00" width="1.44" height="5.50" fill="#000" rx="0"/><rect x="1157.28" y="675.00" width="1.44" height="5.50" fill="#000" rx="0"/><rect x="1159.28" y="675.00" width="1.44" height="5.50" fill="#000" rx="0"/><rect x="1161.28" y="675.00" width="1.44" height="5.50" fill="#000" rx="0"/><text transform="translate(1175.00,676.00) rotate(-90)" font-size="9" fill="#3a2a5a">U20</text><rect x="1179.50" y="659.50" width="11.00" height="21.00" fill="none" stroke="#4a4a4a" stroke-width="1"/><rect x="1181.09" y="660.00" width="1.48" height="5.50" fill="#000" rx="0"/><rect x="1183.14" y="660.00" width="1.48" height="5.50" fill="#000" rx="0"/><rect x="1185.19" y="660.00" width="1.48" height="5.50" fill="#000" rx="0"/><rect x="1187.24" y="660.00" width="1.48" height="5.50" fill="#000" rx="0"/><rect x="1181.09" y="675.00" width="1.48" height="5.50" fill="#000" rx="0"/><rect x="1183.14" y="675.00" width="1.48" height="5.50" fill="#000" rx="0"/><rect x="1185.19" y="675.00" width="1.48" height="5.50" fill="#000" rx="0"/><rect x="1187.24" y="675.00" width="1.48" height="5.50" fill="#000" rx="0"/><text x="1134.00" y="690.00" font-size="9" fill="#2a2a2a" text-anchor="start">C45</text><rect x="1150.50" y="683.50" width="14.00" height="8.00" fill="none" stroke="#4a4a4a" stroke-width="1"/><rect x="1151.20" y="684.90" width="5.00" height="5.20" fill="#000" rx="0"/><rect x="1158.60" y="684.90" width="5.00" height="5.20" fill="#000" rx="0"/><rect x="1177.50" y="683.50" width="15.00" height="8.00" fill="none" stroke="#4a4a4a" stroke-width="1"/><rect x="1178.60" y="684.90" width="5.30" height="5.20" fill="#000" rx="0"/><rect x="1186.30" y="684.90" width="5.30" height="5.20" fill="#000" rx="0"/><text x="1176.00" y="699.60" font-size="9" fill="#2a2a2a" text-anchor="start">C49</text><rect x="1236.50" y="674.50" width="8.00" height="14.00" fill="none" stroke="#4a4a4a" stroke-width="1"/><rect x="1238.00" y="675.10" width="5.70" height="5.15" fill="#000" rx="0"/><rect x="1238.00" y="682.45" width="5.70" height="5.15" fill="#000" rx="0"/><text x="1236.00" y="671.00" font-size="5.6" fill="#7a8aa0" text-anchor="start">C46</text><text x="1193.00" y="704.00" font-size="5.6" fill="#7a8aa0" text-anchor="start">C43</text><rect x="1200.50" y="696.50" width="15.00" height="8.00" fill="none" stroke="#4a4a4a" stroke-width="1"/><rect x="1201.80" y="698.20" width="5.05" height="5.50" fill="#000" rx="0"/><rect x="1209.25" y="698.20" width="5.05" height="5.50" fill="#000" rx="0"/><rect x="1218.50" y="696.50" width="16.00" height="8.00" fill="none" stroke="#4a4a4a" stroke-width="1"/><rect x="1220.10" y="698.20" width="5.45" height="5.50" fill="#000" rx="0"/><rect x="1227.95" y="698.20" width="5.45" height="5.50" fill="#000" rx="0"/><text x="1236.00" y="703.00" font-size="9" fill="#2a2a2a" text-anchor="start">C47</text><text x="1193.00" y="713.50" font-size="9" fill="#2a2a2a" text-anchor="start">C44</text><rect x="1210.50" y="706.50" width="14.00" height="8.00" fill="none" stroke="#4a4a4a" stroke-width="1"/><rect x="1211.20" y="707.90" width="5.05" height="5.70" fill="#000" rx="0"/><rect x="1218.65" y="707.90" width="5.05" height="5.70" fill="#000" rx="0"/><text x="1092.00" y="693.10" font-size="9" fill="#2a2a2a" text-anchor="start">U25</text><rect x="1108.50" y="684.50" width="10.00" height="13.00" fill="none" stroke="#4a4a4a" stroke-width="1"/><rect x="1109.50" y="685.00" width="8.00" height="4.00" fill="#000" rx="0"/><rect x="1109.50" y="693.00" width="8.00" height="4.00" fill="#000" rx="0"/><text x="1120.00" y="684.00" font-size="5.6" fill="#7a8aa0" text-anchor="start">R35</text><rect x="1120.50" y="687.50" width="9.00" height="14.00" fill="none" stroke="#4a4a4a" stroke-width="1"/><rect x="1121.80" y="688.20" width="7.00" height="5.10" fill="#000" rx="0"/><rect x="1121.80" y="695.50" width="7.00" height="5.10" fill="#000" rx="0"/><rect x="1105.50" y="700.50" width="13.00" height="26.00" fill="none" stroke="#4a4a4a" stroke-width="1"/><rect x="1106.20" y="701.40" width="11.60" height="24.60" fill="#000" rx="0"/><rect x="1106.70" y="702.00" width="10.60" height="2.00" fill="#fff" rx="0"/><rect x="1106.70" y="723.40" width="10.60" height="2.00" fill="#fff" rx="0"/><text x="1074.50" y="716.00" font-size="5.6" fill="#7a8aa0" text-anchor="start">D2</text><rect x="1074.50" y="719.50" width="9.00" height="14.00" fill="none" stroke="#4a4a4a" stroke-width="1"/><rect x="1076.10" y="720.30" width="6.50" height="5.15" fill="#000" rx="0"/><rect x="1076.10" y="727.65" width="6.50" height="5.15" fill="#000" rx="0"/><text x="1088.00" y="719.70" font-size="9" fill="#2a2a2a" text-anchor="start">C36</text><rect x="1088.50" y="723.50" width="15.00" height="8.00" fill="none" stroke="#4a4a4a" stroke-width="1"/><rect x="1089.60" y="724.30" width="5.40" height="5.70" fill="#000" rx="0"/><rect x="1097.40" y="724.30" width="5.40" height="5.70" fill="#000" rx="0"/><text x="1069.00" y="746.60" font-size="9" fill="#2a2a2a" text-anchor="start">U14</text><rect x="1086.50" y="734.50" width="20.00" height="19.00" fill="none" stroke="#888" stroke-width="1"/><rect x="1090.45" y="735.50" width="2.34" height="3.50" fill="#000" rx="0"/><rect x="1093.70" y="735.50" width="2.34" height="3.50" fill="#000" rx="0"/><rect x="1096.95" y="735.50" width="2.34" height="3.50" fill="#000" rx="0"/><rect x="1100.20" y="735.50" width="2.34" height="3.50" fill="#000" rx="0"/><rect x="1090.45" y="750.00" width="2.34" height="3.50" fill="#000" rx="0"/><rect x="1093.70" y="750.00" width="2.34" height="3.50" fill="#000" rx="0"/><rect x="1096.95" y="750.00" width="2.34" height="3.50" fill="#000" rx="0"/><rect x="1100.20" y="750.00" width="2.34" height="3.50" fill="#000" rx="0"/><rect x="1087.00" y="740.00" width="3.50" height="9.00" fill="#000" rx="0"/><rect x="1102.50" y="740.00" width="3.50" height="9.00" fill="#000" rx="0"/><circle cx="1096.50" cy="744.50" r="3.00" fill="#000"/><rect x="1108.50" y="730.50" width="15.00" height="8.00" fill="none" stroke="#4a4a4a" stroke-width="1"/><rect x="1109.90" y="731.40" width="4.80" height="5.70" fill="#000" rx="0"/><rect x="1117.10" y="731.40" width="4.80" height="5.70" fill="#000" rx="0"/><rect x="1108.50" y="739.50" width="15.00" height="8.00" fill="none" stroke="#4a4a4a" stroke-width="1"/><rect x="1109.90" y="740.50" width="4.80" height="5.70" fill="#000" rx="0"/><rect x="1117.10" y="740.50" width="4.80" height="5.70" fill="#000" rx="0"/><text x="1107.00" y="757.10" font-size="9" fill="#2a2a2a" text-anchor="start">R21</text><text x="1069.00" y="766.20" font-size="9" fill="#2a2a2a" text-anchor="start">R14</text><rect x="1089.50" y="756.50" width="8.00" height="14.00" fill="none" stroke="#4a4a4a" stroke-width="1"/><rect x="1090.40" y="757.40" width="5.70" height="5.10" fill="#000" rx="0"/><rect x="1090.40" y="764.70" width="5.70" height="5.10" fill="#000" rx="0"/><rect x="1098.50" y="756.50" width="8.00" height="14.00" fill="none" stroke="#4a4a4a" stroke-width="1"/><rect x="1099.50" y="757.40" width="5.80" height="5.10" fill="#000" rx="0"/><rect x="1099.50" y="764.70" width="5.80" height="5.10" fill="#000" rx="0"/><text x="1096.00" y="776.00" font-size="5.6" fill="#7a8aa0" text-anchor="start">R15</text><text x="1066.00" y="774.00" font-size="5.6" fill="#7a8aa0" text-anchor="start">TP22</text><rect x="1066.50" y="777.50" width="13.00" height="25.00" fill="none" stroke="#4a4a4a" stroke-width="1"/><rect x="1067.00" y="777.70" width="11.60" height="24.10" fill="#000" rx="0"/><rect x="1067.50" y="778.30" width="10.60" height="2.00" fill="#fff" rx="0"/><rect x="1067.50" y="799.20" width="10.60" height="2.00" fill="#fff" rx="0"/><text x="1081.50" y="779.50" font-size="5.6" fill="#7a8aa0" text-anchor="start">R31</text><rect x="1081.50" y="781.50" width="9.00" height="16.00" fill="none" stroke="#4a4a4a" stroke-width="1"/><rect x="1083.10" y="783.00" width="5.80" height="5.35" fill="#000" rx="0"/><rect x="1083.10" y="790.55" width="5.80" height="5.35" fill="#000" rx="0"/><text x="1031.00" y="731.70" font-size="9" fill="#2a2a2a" text-anchor="start">D1</text><rect x="1013.50" y="734.50" width="48.00" height="49.00" fill="none" stroke="#4a4a4a" stroke-width="1"/><rect x="1030.18" y="747.20" width="3.48" height="8.60" fill="#000" rx="0"/><rect x="1035.01" y="747.20" width="3.48" height="8.60" fill="#000" rx="0"/><rect x="1039.84" y="747.20" width="3.48" height="8.60" fill="#000" rx="0"/><rect x="1030.18" y="763.60" width="3.48" height="8.40" fill="#000" rx="0"/><rect x="1035.01" y="763.60" width="3.48" height="8.40" fill="#000" rx="0"/><rect x="1039.84" y="763.60" width="3.48" height="8.40" fill="#000" rx="0"/><circle cx="1049.60" cy="743.20" r="5.30" fill="#000"/><rect x="1126.50" y="716.50" width="236.00" height="86.00" fill="none" stroke="#444" stroke-width="1"/><text x="1236.00" y="763.10" font-size="9" fill="#2a2a2a" text-anchor="start">LS1</text><circle cx="1138.40" cy="725.70" r="6.30" fill="#000"/><circle cx="1138.40" cy="792.80" r="6.30" fill="#000"/><circle cx="1298.90" cy="725.70" r="6.30" fill="#000"/><circle cx="1298.90" cy="792.80" r="6.30" fill="#000"/><text x="1302.00" y="710.90" font-size="9" fill="#2a2a2a" text-anchor="start">U5</text><rect x="1315.50" y="690.50" width="44.00" height="35.00" fill="none" stroke="#444" stroke-width="1"/><rect x="1330.63" y="693.00" width="3.24" height="9.00" fill="#000" rx="0"/><rect x="1335.13" y="693.00" width="3.24" height="9.00" fill="#000" rx="0"/><rect x="1339.63" y="693.00" width="3.24" height="9.00" fill="#000" rx="0"/><rect x="1330.63" y="715.00" width="3.24" height="9.00" fill="#000" rx="0"/><rect x="1335.13" y="715.00" width="3.24" height="9.00" fill="#000" rx="0"/><rect x="1339.63" y="715.00" width="3.24" height="9.00" fill="#000" rx="0"/><rect x="1327.50" y="732.50" width="15.00" height="8.00" fill="none" stroke="#4a4a4a" stroke-width="1"/><rect x="1328.70" y="734.00" width="5.30" height="5.70" fill="#000" rx="0"/><rect x="1336.40" y="734.00" width="5.30" height="5.70" fill="#000" rx="0"/><circle cx="1350.60" cy="749.20" r="4.00" fill="#000"/><circle cx="1350.60" cy="770.10" r="4.00" fill="#000"/><rect x="1319.50" y="780.50" width="26.00" height="13.00" fill="none" stroke="#4a4a4a" stroke-width="1"/><rect x="1320.30" y="780.80" width="24.60" height="11.80" fill="#000" rx="0"/><rect x="1320.90" y="781.30" width="2.00" height="10.80" fill="#fff" rx="0"/><rect x="1342.30" y="781.30" width="2.00" height="10.80" fill="#fff" rx="0"/><text x="1371.50" y="753.00" font-size="5.6" fill="#7a8aa0" text-anchor="start">FM2</text><rect x="1372.50" y="756.50" width="7.00" height="7.00" fill="none" stroke="#aaa" stroke-width="1"/><rect x="1375.00" y="756.30" width="1.00" height="6.40" fill="#111" rx="0"/><rect x="1372.30" y="759.00" width="6.40" height="1.00" fill="#111" rx="0"/><rect x="1367.50" y="777.50" width="18.00" height="16.00" fill="none" stroke="#555" stroke-width="1"/><circle cx="1376.45" cy="785.55" r="8.85" fill="#000"/><text x="1367.30" y="802.80" font-size="9" fill="#2a2a2a" text-anchor="start">MH2</text><text x="710.50" y="629.50" font-size="5.6" fill="#7a8aa0" text-anchor="start">TP41</text><rect x="710.50" y="632.50" width="13.00" height="25.00" fill="none" stroke="#4a4a4a" stroke-width="1"/><rect x="711.30" y="632.50" width="11.50" height="25.00" fill="#000" rx="0"/><rect x="711.80" y="633.10" width="10.50" height="2.00" fill="#fff" rx="0"/><rect x="711.80" y="654.90" width="10.50" height="2.00" fill="#fff" rx="0"/><text x="734.00" y="625.70" font-size="9" fill="#2a2a2a" text-anchor="start">TP4</text><rect x="733.50" y="628.50" width="13.00" height="26.00" fill="none" stroke="#4a4a4a" stroke-width="1"/><rect x="734.20" y="629.20" width="11.70" height="25.00" fill="#000" rx="0"/><rect x="734.70" y="629.80" width="10.70" height="2.00" fill="#fff" rx="0"/><rect x="734.70" y="651.60" width="10.70" height="2.00" fill="#fff" rx="0"/><text x="685.00" y="671.10" font-size="9" fill="#2a2a2a" text-anchor="start">TP38</text><rect x="707.50" y="655.50" width="12.00" height="25.00" fill="none" stroke="#4a4a4a" stroke-width="1"/><rect x="708.30" y="655.60" width="11.20" height="24.40" fill="#000" rx="0"/><rect x="708.80" y="656.20" width="10.20" height="2.00" fill="#fff" rx="0"/><rect x="708.80" y="677.40" width="10.20" height="2.00" fill="#fff" rx="0"/><text x="690.00" y="694.20" font-size="9" fill="#2a2a2a" text-anchor="start">TP6</text><rect x="707.50" y="678.50" width="12.00" height="26.00" fill="none" stroke="#4a4a4a" stroke-width="1"/><rect x="708.30" y="679.30" width="11.20" height="24.40" fill="#000" rx="0"/><rect x="708.80" y="679.90" width="10.20" height="2.00" fill="#fff" rx="0"/><rect x="708.80" y="701.10" width="10.20" height="2.00" fill="#fff" rx="0"/><text x="733.50" y="682.00" font-size="5.6" fill="#7a8aa0" text-anchor="start">TP39</text><rect x="733.50" y="684.50" width="13.00" height="26.00" fill="none" stroke="#4a4a4a" stroke-width="1"/><rect x="734.20" y="685.30" width="11.70" height="24.70" fill="#000" rx="0"/><rect x="734.70" y="685.90" width="10.70" height="2.00" fill="#fff" rx="0"/><rect x="734.70" y="707.40" width="10.70" height="2.00" fill="#fff" rx="0"/><text x="776.50" y="652.50" font-size="5.6" fill="#7a8aa0" text-anchor="start">TP28</text><rect x="776.50" y="655.50" width="13.00" height="25.00" fill="none" stroke="#4a4a4a" stroke-width="1"/><rect x="777.30" y="655.60" width="11.50" height="24.80" fill="#000" rx="0"/><rect x="777.80" y="656.20" width="10.50" height="2.00" fill="#fff" rx="0"/><rect x="777.80" y="677.80" width="10.50" height="2.00" fill="#fff" rx="0"/><text x="764.50" y="697.50" font-size="9" fill="#2a2a2a" text-anchor="start">TP29</text><rect x="786.50" y="681.50" width="13.00" height="26.00" fill="none" stroke="#4a4a4a" stroke-width="1"/><rect x="787.30" y="682.40" width="11.60" height="24.30" fill="#000" rx="0"/><rect x="787.80" y="683.00" width="10.60" height="2.00" fill="#fff" rx="0"/><rect x="787.80" y="704.10" width="10.60" height="2.00" fill="#fff" rx="0"/><text x="687.50" y="705.50" font-size="5.6" fill="#7a8aa0" text-anchor="start">TP36</text><rect x="687.50" y="708.50" width="13.00" height="25.00" fill="none" stroke="#4a4a4a" stroke-width="1"/><rect x="688.40" y="708.50" width="11.60" height="24.60" fill="#000" rx="0"/><rect x="688.90" y="709.10" width="10.60" height="2.00" fill="#fff" rx="0"/><rect x="688.90" y="730.50" width="10.60" height="2.00" fill="#fff" rx="0"/><circle cx="703.10" cy="743.50" r="4.00" fill="#000"/><text x="693.00" y="754.50" font-size="9" fill="#2a2a2a" text-anchor="start">TP37</text><rect x="690.50" y="756.50" width="26.00" height="14.00" fill="none" stroke="#4a4a4a" stroke-width="1"/><rect x="691.50" y="757.30" width="24.90" height="12.40" fill="#000" rx="0"/><rect x="692.10" y="757.80" width="2.00" height="11.40" fill="#fff" rx="0"/><rect x="713.80" y="757.80" width="2.00" height="11.40" fill="#fff" rx="0"/><text x="720.00" y="761.00" font-size="9" fill="#2a2a2a" text-anchor="start">TP40</text><rect x="717.50" y="763.50" width="26.00" height="13.00" fill="none" stroke="#4a4a4a" stroke-width="1"/><rect x="718.40" y="764.10" width="24.20" height="11.60" fill="#000" rx="0"/><rect x="719.00" y="764.60" width="2.00" height="10.60" fill="#fff" rx="0"/><rect x="740.00" y="764.60" width="2.00" height="10.60" fill="#fff" rx="0"/><text x="666.00" y="788.40" font-size="9" fill="#2a2a2a" text-anchor="start">MH1</text><rect x="685.50" y="776.50" width="19.00" height="18.00" fill="none" stroke="#555" stroke-width="1"/><circle cx="695.10" cy="785.55" r="9.50" fill="#000"/><text x="839.50" y="635.00" font-size="5.6" fill="#7a8aa0" text-anchor="start">R28</text><rect x="837.50" y="637.50" width="10.00" height="15.00" fill="none" stroke="#4a4a4a" stroke-width="1"/><rect x="838.70" y="638.60" width="7.10" height="5.50" fill="#000" rx="0"/><rect x="838.70" y="646.30" width="7.10" height="5.50" fill="#000" rx="0"/><text x="820.00" y="674.80" font-size="9" fill="#2a2a2a" text-anchor="start">J10</text><rect x="835.50" y="657.50" width="14.00" height="27.00" fill="none" stroke="#4a4a4a" stroke-width="1"/><circle cx="842.30" cy="664.80" r="4.00" fill="#000"/><rect x="838.00" y="672.00" width="9.50" height="10.00" fill="#000" rx="0"/><text x="901.00" y="646.00" font-size="5.6" fill="#7a8aa0" text-anchor="start">TP27</text><rect x="901.50" y="648.50" width="13.00" height="26.00" fill="none" stroke="#4a4a4a" stroke-width="1"/><rect x="901.70" y="648.90" width="12.40" height="24.90" fill="#000" rx="0"/><rect x="902.20" y="649.50" width="11.40" height="2.00" fill="#fff" rx="0"/><rect x="902.20" y="671.20" width="11.40" height="2.00" fill="#fff" rx="0"/><text x="934.50" y="649.50" font-size="5.6" fill="#7a8aa0" text-anchor="start">TP23</text><rect x="934.50" y="651.50" width="13.00" height="26.00" fill="none" stroke="#4a4a4a" stroke-width="1"/><rect x="935.20" y="652.30" width="11.50" height="24.70" fill="#000" rx="0"/><rect x="935.70" y="652.90" width="10.50" height="2.00" fill="#fff" rx="0"/><rect x="935.70" y="674.40" width="10.50" height="2.00" fill="#fff" rx="0"/><text x="889.00" y="690.50" font-size="9" fill="#2a2a2a" text-anchor="start">TP25</text><rect x="911.50" y="674.50" width="12.00" height="27.00" fill="none" stroke="#4a4a4a" stroke-width="1"/><rect x="912.20" y="675.30" width="11.30" height="25.20" fill="#000" rx="0"/><rect x="912.70" y="675.90" width="10.30" height="2.00" fill="#fff" rx="0"/><rect x="912.70" y="697.90" width="10.30" height="2.00" fill="#fff" rx="0"/><text x="933.00" y="687.50" font-size="5.6" fill="#7a8aa0" text-anchor="start">R34</text><rect x="933.50" y="689.50" width="9.00" height="16.00" fill="none" stroke="#4a4a4a" stroke-width="1"/><rect x="934.50" y="690.80" width="6.60" height="5.50" fill="#000" rx="0"/><rect x="934.50" y="698.50" width="6.60" height="5.50" fill="#000" rx="0"/><text x="945.50" y="686.50" font-size="5.6" fill="#7a8aa0" text-anchor="start">U24</text><rect x="945.50" y="688.50" width="10.00" height="15.00" fill="none" stroke="#4a4a4a" stroke-width="1"/><rect x="947.00" y="690.00" width="3.00" height="4.00" fill="#000" rx="0"/><rect x="951.50" y="690.00" width="3.00" height="4.00" fill="#000" rx="0"/><rect x="946.92" y="698.00" width="2.16" height="5.00" fill="#000" rx="0"/><rect x="949.92" y="698.00" width="2.16" height="5.00" fill="#000" rx="0"/><rect x="952.92" y="698.00" width="2.16" height="5.00" fill="#000" rx="0"/><text x="954.00" y="774.00" font-size="5.6" fill="#7a8aa0" text-anchor="start">TP21</text><rect x="954.50" y="776.50" width="13.00" height="26.00" fill="none" stroke="#4a4a4a" stroke-width="1"/><rect x="954.70" y="777.10" width="11.90" height="25.20" fill="#000" rx="0"/><rect x="955.20" y="777.70" width="10.90" height="2.00" fill="#fff" rx="0"/><rect x="955.20" y="799.70" width="10.90" height="2.00" fill="#fff" rx="0"/><text x="980.00" y="774.00" font-size="5.6" fill="#7a8aa0" text-anchor="start">TP43</text><rect x="980.50" y="776.50" width="13.00" height="26.00" fill="none" stroke="#4a4a4a" stroke-width="1"/><rect x="980.80" y="777.10" width="11.90" height="25.20" fill="#000" rx="0"/><rect x="981.30" y="777.70" width="10.90" height="2.00" fill="#fff" rx="0"/><rect x="981.30" y="799.70" width="10.90" height="2.00" fill="#fff" rx="0"/><text x="998.00" y="774.00" font-size="9" fill="#2a2a2a" text-anchor="start">TP3</text><rect x="996.50" y="776.50" width="13.00" height="26.00" fill="none" stroke="#4a4a4a" stroke-width="1"/><rect x="997.30" y="777.10" width="12.10" height="25.20" fill="#000" rx="0"/><rect x="997.80" y="777.70" width="11.10" height="2.00" fill="#fff" rx="0"/><rect x="997.80" y="799.70" width="11.10" height="2.00" fill="#fff" rx="0"/></svg>
<div class="a" style="left:646px;top:312px;width:791px;height:1px;background:#d6d6d6"></div>
<div class="a" style="left:646px;top:312px;width:1px;height:685px;background:#d0d0d0"></div>
<div class="a" style="left:1437px;top:62px;width:2px;height:937px;background:#a8a8a8"></div>
<div class="a" style="left:646px;top:997px;width:793px;height:2px;background:#a8a8a8"></div>
<div class="a" style="left:1420px;top:313px;width:16px;height:643px;background:#efefef"></div>
<svg style="left:1424px;top:318px" width="9" height="6" viewBox="0 0 9 6"><path d="M0.8 5.2 L4.5 1.2 L8.2 5.2" fill="none" stroke="#b4b4b4" stroke-width="1.4"/></svg>
<svg style="left:1424px;top:943px" width="9" height="6" viewBox="0 0 9 6"><path d="M0.8 0.8 L4.5 4.8 L8.2 0.8" fill="none" stroke="#b4b4b4" stroke-width="1.4"/></svg>
<div class="a" style="left:1400px;top:933px;width:20px;height:20px;background:#e6e6e6;border:1px solid #b0b0b0"></div>
<svg style="left:1403px;top:935px" width="14" height="14" viewBox="0 0 14 14"><circle cx="7" cy="7.5" r="5.6" fill="#fff" stroke="#999" stroke-width="0.8"/><circle cx="7" cy="7.5" r="4.3" fill="#2a9a3a"/><path d="M5 5 L5 10 M5 7.5 L8.5 5 M5.8 7.2 L8.8 10" stroke="#fff" stroke-width="1.2"/></svg>
<div class="a" style="left:647px;top:956px;width:790px;height:16px;background:#efefef"></div>
<svg style="left:653px;top:960px" width="6" height="9" viewBox="0 0 6 9"><path d="M5.2 0.8 L1.2 4.5 L5.2 8.2" fill="none" stroke="#b4b4b4" stroke-width="1.4"/></svg>
<svg style="left:1408px;top:960px" width="6" height="9" viewBox="0 0 6 9"><path d="M0.8 0.8 L4.8 4.5 L0.8 8.2" fill="none" stroke="#b4b4b4" stroke-width="1.4"/></svg>
<div class="a" style="left:647px;top:972px;width:790px;height:24px;background:#0070c6"></div>
<div class="t" style="left:651px;top:979.07px;font-size:11.5px;font-weight:400;color:#fff;">(-0.0339 , 1.0050) Inches</div>
<svg style="left:1190px;top:976px" width="16" height="16" viewBox="0 0 16 16"><path d="M8 8 L8 4 Q8 1.2 10.8 1.2 Q13.6 1.2 13.6 4 L13.6 6.5" fill="none" stroke="#c8c8c8" stroke-width="1.6"/><rect x="1.5" y="8" width="9.5" height="6.8" fill="#222"/><path d="M2.5 14 L5 9 M5.5 14 L8 9 M8.5 14 L10.8 9.5" stroke="#e8c020" stroke-width="1.3"/></svg>
<svg style="left:1213px;top:976px" width="17" height="16" viewBox="0 0 17 16"><rect x="0.5" y="0.5" width="15.5" height="15" fill="none" stroke="#4a3a2a" stroke-width="1" stroke-dasharray="1.6 1.2"/><path d="M8.0 9.5 L3.5 14.0" stroke="#c8a060" stroke-width="2.8" stroke-linecap="round"/><path d="M8.0 9.5 L3.5 14.0" stroke="#f0d8a0" stroke-width="1" stroke-linecap="round"/><circle cx="11.0" cy="6.5" r="4.3" fill="#cfe6f5" stroke="#b89060" stroke-width="1.2"/><circle cx="10.0" cy="5.5" r="1.6" fill="#fff"/></svg>
<svg style="left:1236px;top:975px" width="18" height="18" viewBox="0 0 18 18"><text x="1" y="6.5" font-size="7" font-weight="700" font-family="Liberation Sans" fill="#4a4040" letter-spacing="-0.3">100</text><path d="M7.5 12 L3 16.5" stroke="#c8a060" stroke-width="2.8" stroke-linecap="round"/><path d="M7.5 12 L3 16.5" stroke="#f0d8a0" stroke-width="1" stroke-linecap="round"/><circle cx="10.5" cy="9" r="4.3" fill="#cfe6f5" stroke="#b89060" stroke-width="1.2"/><circle cx="9.5" cy="8" r="1.6" fill="#fff"/></svg>
<svg style="left:1259px;top:975px" width="18" height="18" viewBox="0 0 18 18"><text x="1" y="6.5" font-size="7" font-weight="700" font-family="Liberation Sans" fill="#4a4040" letter-spacing="-0.4">ALL</text><path d="M7.5 12 L3 16.5" stroke="#c8a060" stroke-width="2.8" stroke-linecap="round"/><path d="M7.5 12 L3 16.5" stroke="#f0d8a0" stroke-width="1" stroke-linecap="round"/><circle cx="10.5" cy="9" r="4.3" fill="#cfe6f5" stroke="#b89060" stroke-width="1.2"/><circle cx="9.5" cy="8" r="1.6" fill="#fff"/></svg>
<svg style="left:1282px;top:975px" width="18" height="18" viewBox="0 0 18 18"><path d="M3 3.5 L8 3.5 M10 3.5 L16 3.5" stroke="#000" stroke-width="1.8"/><path d="M7.5 13 L12 17.5" stroke="#c8a060" stroke-width="2.8" stroke-linecap="round"/><path d="M7.5 13 L12 17.5" stroke="#f0d8a0" stroke-width="1" stroke-linecap="round"/><circle cx="4.8" cy="10" r="4.3" fill="#cfe6f5" stroke="#b89060" stroke-width="1.2"/><circle cx="3.8" cy="9" r="1.6" fill="#fff"/></svg>
<svg style="left:1305px;top:975px" width="18" height="18" viewBox="0 0 18 18"><path d="M9 4.5 L16.5 4.5" stroke="#555" stroke-width="1.8"/><path d="M7.5 13 L12 17.5" stroke="#c8a060" stroke-width="2.8" stroke-linecap="round"/><path d="M7.5 13 L12 17.5" stroke="#f0d8a0" stroke-width="1" stroke-linecap="round"/><circle cx="4.8" cy="10" r="4.3" fill="#cfe6f5" stroke="#b89060" stroke-width="1.2"/><circle cx="3.8" cy="9" r="1.6" fill="#fff"/></svg>
<div class="a" style="left:1328px;top:974px;width:57px;height:20px;background:#fff;border:1px solid #c8c8c8"></div>
<div class="t" style="left:1333.5px;top:979.27px;font-size:11.5px;font-weight:400;color:#333;">137%</div>
<div class="a" style="left:1369px;top:976px;width:14px;height:16px;background:#e8e8e8;border:1px solid #c0c0c0"></div>
<svg style="left:1371px;top:977px" width="10" height="14" viewBox="0 0 10 14"><path d="M1.5 5 L5 1.8 L8.5 5 M1.5 9 L5 12.2 L8.5 9" fill="none" stroke="#666" stroke-width="1"/></svg>
<svg style="left:1392px;top:973px" width="18" height="19" viewBox="0 0 18 19"><path d="M12.5 1.5 L12.5 8 M9.2 4.7 L15.8 4.7" stroke="#444" stroke-width="1.8"/><path d="M7.5 14 L12 18.5" stroke="#c8a060" stroke-width="2.8" stroke-linecap="round"/><path d="M7.5 14 L12 18.5" stroke="#f0d8a0" stroke-width="1" stroke-linecap="round"/><circle cx="4.8" cy="11" r="4.3" fill="#cfe6f5" stroke="#b89060" stroke-width="1.2"/><circle cx="3.8" cy="10" r="1.6" fill="#fff"/></svg>
<svg style="left:1415px;top:973px" width="20" height="19" viewBox="0 0 20 19"><path d="M7.2 1.5 L7.2 8 M4 4.7 L10.5 4.7 M14.5 1.5 L14.5 8 M11.3 4.7 L17.8 4.7" stroke="#000" stroke-width="1.8"/><path d="M7.5 14 L12 18.5" stroke="#c8a060" stroke-width="2.8" stroke-linecap="round"/><path d="M7.5 14 L12 18.5" stroke="#f0d8a0" stroke-width="1" stroke-linecap="round"/><circle cx="4.8" cy="11" r="4.3" fill="#cfe6f5" stroke="#b89060" stroke-width="1.2"/><circle cx="3.8" cy="10" r="1.6" fill="#fff"/></svg>
</body></html>
